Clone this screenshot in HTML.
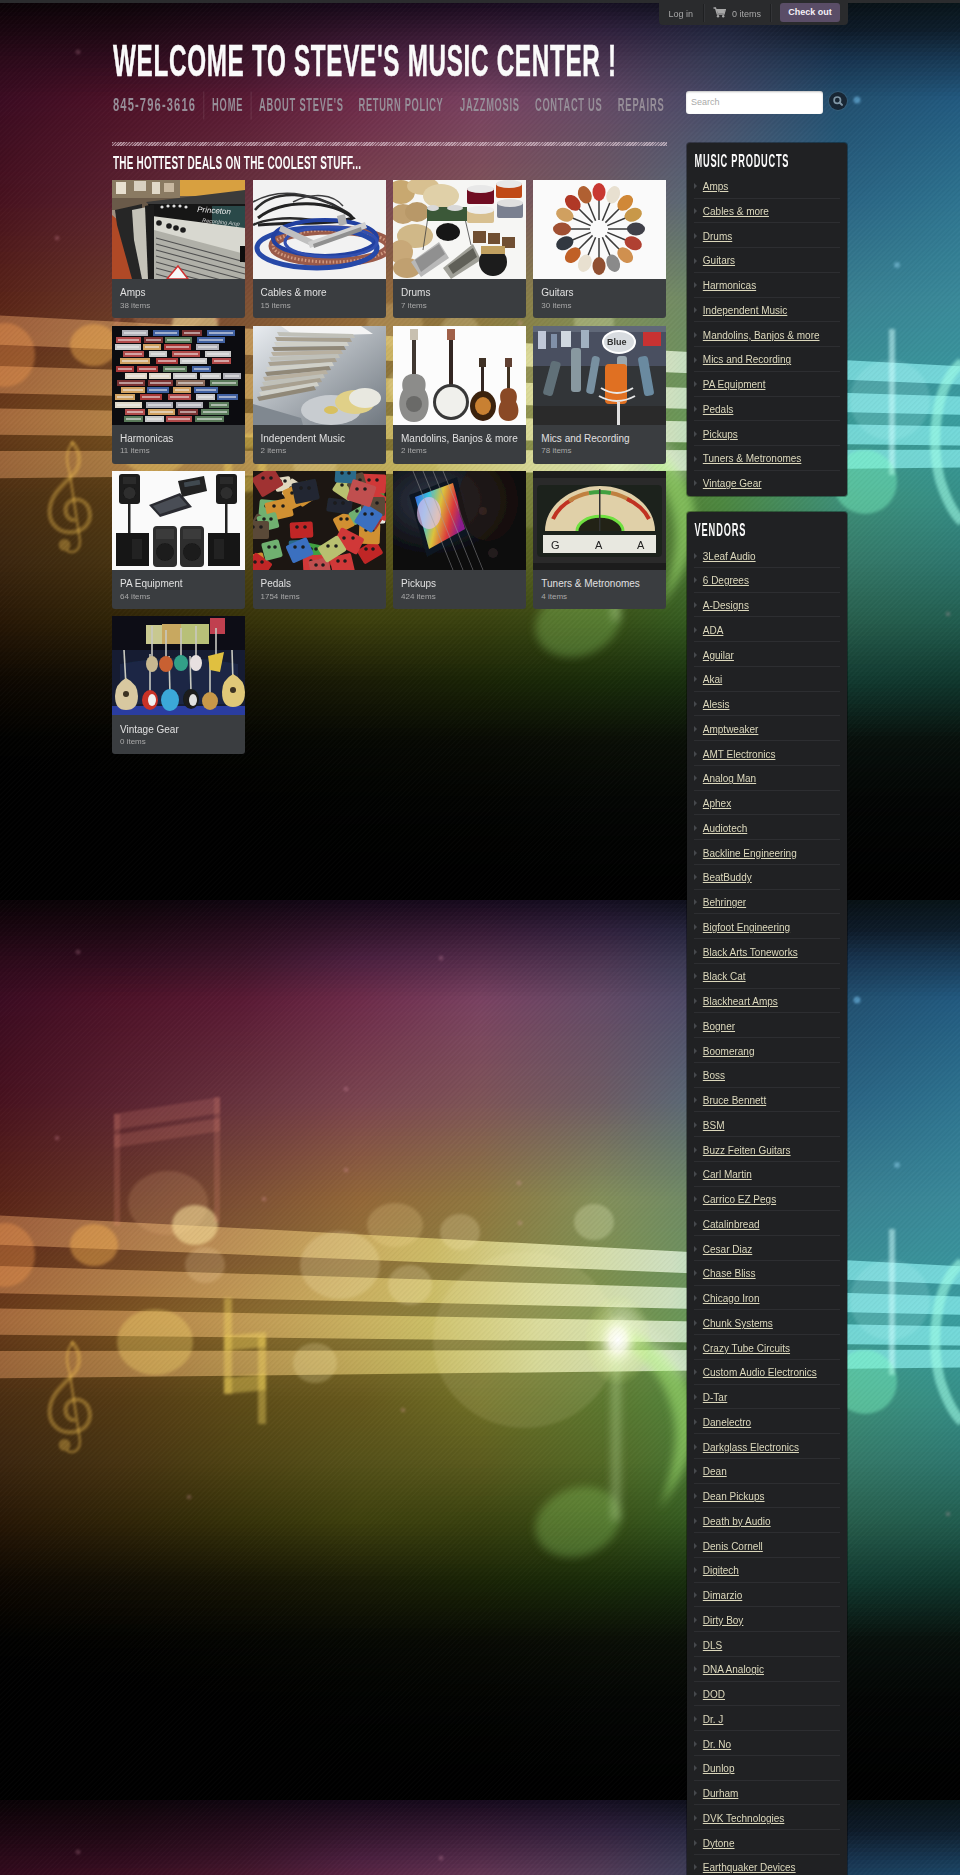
<!DOCTYPE html>
<html><head><meta charset="utf-8">
<style>
*{box-sizing:border-box}
html,body{margin:0;padding:0;background:#000;width:960px;height:1875px;overflow:hidden;font-family:"Liberation Sans",sans-serif}
#bg{position:absolute;left:0;top:0;width:960px;height:1875px}
.abs{position:absolute}
#topstrip{left:0;top:0;width:960px;height:3px;background:#2b2c2e}
#topbar{left:659px;top:0;width:189px;height:25px;background:#2a2b2d;border-radius:0 0 4px 4px;font-size:10px;color:#a8a8a8}
#topbar .t{position:absolute;top:0.6px;line-height:26px;white-space:nowrap}
.vsep{position:absolute;width:1px;background:#1f2022;box-shadow:1px 0 0 #333437}
#checkout{left:121px;top:3px;width:60px;height:19px;background:#5a4d67;border-radius:3px;color:#f4f0f6;font-weight:bold;font-size:9px;line-height:19px;text-align:center}
svg text{font-family:"Liberation Sans",sans-serif}
#search{left:686px;top:91px;width:137px;height:23px;background:#fff;border-radius:3px;font-size:9px;color:#a9a9a9;padding-left:5px;line-height:23px;box-shadow:inset 0 1px 2px rgba(0,0,0,.25)}
#sbtn{left:828.5px;top:91.5px;width:18px;height:18px;border-radius:50%;background:#182634;box-shadow:0 0 0 1px rgba(90,120,140,.3)}
#dash{left:112px;top:142.3px;width:555px;height:3.6px;background:repeating-linear-gradient(-45deg,rgba(235,215,225,.62) 0 1px,rgba(235,215,225,.2) 1px 2px)}
.tile{position:absolute;width:133px;height:138px}
.tile .img{position:absolute;left:0;top:0;width:133px;height:99px;overflow:hidden;background:#fff}
.tile .cap{position:absolute;left:0;top:99px;width:133px;height:39px;background:#3a3d40;border-radius:0 0 3px 3px}
.tile .nm{position:absolute;left:8px;top:8.3px;font-size:10px;color:#e0e0e0;white-space:nowrap;line-height:12px}
.tile .ct{position:absolute;left:8px;top:21.8px;font-size:8px;color:#a8a8a8;white-space:nowrap;line-height:10px}
.box{position:absolute;left:686.5px;width:160.5px;background:#202123;border-radius:3px;box-shadow:0 0 0 1px rgba(0,0,0,.35)}
.box ul{list-style:none;margin:0;padding:0;position:absolute;left:7.3px;top:31px;width:146.7px}
.box li{position:relative;height:24.75px;border-bottom:1px solid #2d2e31}
.box li:last-child{border-bottom:none}
.box li a{position:absolute;left:9px;top:7.4px;font-size:10px;line-height:12px;color:#dcd8bc;text-decoration:underline;text-underline-offset:1px;text-decoration-thickness:1px;white-space:nowrap}
.box li i{position:absolute;left:0.3px;top:9.5px;width:0;height:0;border-left:3px solid #46494d;border-top:3px solid transparent;border-bottom:3px solid transparent}
</style></head><body>
<svg id="bg" width="960" height="1875" viewBox="0 0 960 1875">
<defs>
<filter id="isoft" x="-5%" y="-5%" width="110%" height="110%"><feGaussianBlur stdDeviation="0.45"/></filter>
<linearGradient id="topfade" x1="0" y1="0" x2="0" y2="1"><stop offset="0" stop-color="#000" stop-opacity="0.5"/><stop offset="1" stop-color="#000" stop-opacity="0"/></linearGradient>
<g id="tile"><linearGradient id="r0" x1="0" x2="960" y1="0" y2="0" gradientUnits="userSpaceOnUse"><stop offset="0.000" stop-color="#0b0307"/><stop offset="0.125" stop-color="#0d0409"/><stop offset="0.250" stop-color="#110611"/><stop offset="0.375" stop-color="#160919"/><stop offset="0.500" stop-color="#180b1e"/><stop offset="0.625" stop-color="#160f22"/><stop offset="0.750" stop-color="#0d111b"/><stop offset="0.875" stop-color="#081115"/><stop offset="1.000" stop-color="#081519"/></linearGradient><linearGradient id="r1" x1="0" x2="960" y1="0" y2="0" gradientUnits="userSpaceOnUse"><stop offset="0.000" stop-color="#0d0408"/><stop offset="0.125" stop-color="#0f050a"/><stop offset="0.250" stop-color="#140712"/><stop offset="0.375" stop-color="#1a0a1c"/><stop offset="0.500" stop-color="#1c0d21"/><stop offset="0.625" stop-color="#1a1226"/><stop offset="0.750" stop-color="#101420"/><stop offset="0.875" stop-color="#091218"/><stop offset="1.000" stop-color="#09161c"/></linearGradient><linearGradient id="r2" x1="0" x2="960" y1="0" y2="0" gradientUnits="userSpaceOnUse"><stop offset="0.000" stop-color="#0f0409"/><stop offset="0.125" stop-color="#11050b"/><stop offset="0.250" stop-color="#170814"/><stop offset="0.375" stop-color="#1d0c1e"/><stop offset="0.500" stop-color="#210f24"/><stop offset="0.625" stop-color="#1d1429"/><stop offset="0.750" stop-color="#131725"/><stop offset="0.875" stop-color="#0a131b"/><stop offset="1.000" stop-color="#0a171f"/></linearGradient><linearGradient id="r3" x1="0" x2="960" y1="0" y2="0" gradientUnits="userSpaceOnUse"><stop offset="0.000" stop-color="#11040b"/><stop offset="0.125" stop-color="#13060d"/><stop offset="0.250" stop-color="#1a0916"/><stop offset="0.375" stop-color="#210e20"/><stop offset="0.500" stop-color="#251127"/><stop offset="0.625" stop-color="#21162d"/><stop offset="0.750" stop-color="#161a2a"/><stop offset="0.875" stop-color="#0b151d"/><stop offset="1.000" stop-color="#0b1921"/></linearGradient><linearGradient id="r4" x1="0" x2="960" y1="0" y2="0" gradientUnits="userSpaceOnUse"><stop offset="0.000" stop-color="#14050c"/><stop offset="0.125" stop-color="#16060e"/><stop offset="0.250" stop-color="#1d0a17"/><stop offset="0.375" stop-color="#250f23"/><stop offset="0.500" stop-color="#29142a"/><stop offset="0.625" stop-color="#251931"/><stop offset="0.750" stop-color="#191d2f"/><stop offset="0.875" stop-color="#0c1620"/><stop offset="1.000" stop-color="#0c1a24"/></linearGradient><linearGradient id="r5" x1="0" x2="960" y1="0" y2="0" gradientUnits="userSpaceOnUse"><stop offset="0.000" stop-color="#16050d"/><stop offset="0.125" stop-color="#18070f"/><stop offset="0.250" stop-color="#200a19"/><stop offset="0.375" stop-color="#291125"/><stop offset="0.500" stop-color="#2d162e"/><stop offset="0.625" stop-color="#291b35"/><stop offset="0.750" stop-color="#1c2034"/><stop offset="0.875" stop-color="#0c1723"/><stop offset="1.000" stop-color="#0c1b27"/></linearGradient><linearGradient id="r6" x1="0" x2="960" y1="0" y2="0" gradientUnits="userSpaceOnUse"><stop offset="0.000" stop-color="#18060f"/><stop offset="0.125" stop-color="#1a0711"/><stop offset="0.250" stop-color="#230b1a"/><stop offset="0.375" stop-color="#2c1228"/><stop offset="0.500" stop-color="#321831"/><stop offset="0.625" stop-color="#2c1e38"/><stop offset="0.750" stop-color="#1f2339"/><stop offset="0.875" stop-color="#0d1925"/><stop offset="1.000" stop-color="#0d1d29"/></linearGradient><linearGradient id="r7" x1="0" x2="960" y1="0" y2="0" gradientUnits="userSpaceOnUse"><stop offset="0.000" stop-color="#1a0610"/><stop offset="0.125" stop-color="#1c0812"/><stop offset="0.250" stop-color="#260c1c"/><stop offset="0.375" stop-color="#30142a"/><stop offset="0.500" stop-color="#361a34"/><stop offset="0.625" stop-color="#30203c"/><stop offset="0.750" stop-color="#22263e"/><stop offset="0.875" stop-color="#0e1a28"/><stop offset="1.000" stop-color="#0e1e2c"/></linearGradient><linearGradient id="r8" x1="0" x2="960" y1="0" y2="0" gradientUnits="userSpaceOnUse"><stop offset="0.000" stop-color="#1c0711"/><stop offset="0.125" stop-color="#1f0914"/><stop offset="0.250" stop-color="#290d1e"/><stop offset="0.375" stop-color="#34162d"/><stop offset="0.500" stop-color="#3a1c37"/><stop offset="0.625" stop-color="#33233f"/><stop offset="0.750" stop-color="#242941"/><stop offset="0.875" stop-color="#0f1d2d"/><stop offset="1.000" stop-color="#0f2232"/></linearGradient><linearGradient id="r9" x1="0" x2="960" y1="0" y2="0" gradientUnits="userSpaceOnUse"><stop offset="0.000" stop-color="#1f0713"/><stop offset="0.125" stop-color="#210915"/><stop offset="0.250" stop-color="#2b0e1f"/><stop offset="0.375" stop-color="#371730"/><stop offset="0.500" stop-color="#3e1f3a"/><stop offset="0.625" stop-color="#372541"/><stop offset="0.750" stop-color="#272b44"/><stop offset="0.875" stop-color="#112133"/><stop offset="1.000" stop-color="#112537"/></linearGradient><linearGradient id="r10" x1="0" x2="960" y1="0" y2="0" gradientUnits="userSpaceOnUse"><stop offset="0.000" stop-color="#210814"/><stop offset="0.125" stop-color="#240a17"/><stop offset="0.250" stop-color="#2e0f21"/><stop offset="0.375" stop-color="#3b1933"/><stop offset="0.500" stop-color="#42213d"/><stop offset="0.625" stop-color="#3a2844"/><stop offset="0.750" stop-color="#292e47"/><stop offset="0.875" stop-color="#122438"/><stop offset="1.000" stop-color="#12293d"/></linearGradient><linearGradient id="r11" x1="0" x2="960" y1="0" y2="0" gradientUnits="userSpaceOnUse"><stop offset="0.000" stop-color="#240815"/><stop offset="0.125" stop-color="#270a18"/><stop offset="0.250" stop-color="#311022"/><stop offset="0.375" stop-color="#3f1a36"/><stop offset="0.500" stop-color="#462440"/><stop offset="0.625" stop-color="#3e2b47"/><stop offset="0.750" stop-color="#2c314a"/><stop offset="0.875" stop-color="#13283d"/><stop offset="1.000" stop-color="#132d42"/></linearGradient><linearGradient id="r12" x1="0" x2="960" y1="0" y2="0" gradientUnits="userSpaceOnUse"><stop offset="0.000" stop-color="#260917"/><stop offset="0.125" stop-color="#290b1a"/><stop offset="0.250" stop-color="#331124"/><stop offset="0.375" stop-color="#431c39"/><stop offset="0.500" stop-color="#4a2643"/><stop offset="0.625" stop-color="#412d49"/><stop offset="0.750" stop-color="#2e334d"/><stop offset="0.875" stop-color="#152b43"/><stop offset="1.000" stop-color="#153148"/></linearGradient><linearGradient id="r13" x1="0" x2="960" y1="0" y2="0" gradientUnits="userSpaceOnUse"><stop offset="0.000" stop-color="#280918"/><stop offset="0.125" stop-color="#2c0b1c"/><stop offset="0.250" stop-color="#361226"/><stop offset="0.375" stop-color="#461e3c"/><stop offset="0.500" stop-color="#4e2846"/><stop offset="0.625" stop-color="#45304c"/><stop offset="0.750" stop-color="#303650"/><stop offset="0.875" stop-color="#162f48"/><stop offset="1.000" stop-color="#16344e"/></linearGradient><linearGradient id="r14" x1="0" x2="960" y1="0" y2="0" gradientUnits="userSpaceOnUse"><stop offset="0.000" stop-color="#2b0a19"/><stop offset="0.125" stop-color="#2f0c1d"/><stop offset="0.250" stop-color="#391327"/><stop offset="0.375" stop-color="#4a1f3f"/><stop offset="0.500" stop-color="#522b49"/><stop offset="0.625" stop-color="#48334f"/><stop offset="0.750" stop-color="#333953"/><stop offset="0.875" stop-color="#17324d"/><stop offset="1.000" stop-color="#173853"/></linearGradient><linearGradient id="r15" x1="0" x2="960" y1="0" y2="0" gradientUnits="userSpaceOnUse"><stop offset="0.000" stop-color="#2d0a1a"/><stop offset="0.125" stop-color="#310c1e"/><stop offset="0.250" stop-color="#3c1429"/><stop offset="0.375" stop-color="#4e2140"/><stop offset="0.500" stop-color="#562d4b"/><stop offset="0.625" stop-color="#4b3551"/><stop offset="0.750" stop-color="#353b55"/><stop offset="0.875" stop-color="#183552"/><stop offset="1.000" stop-color="#183c58"/></linearGradient><linearGradient id="r16" x1="0" x2="960" y1="0" y2="0" gradientUnits="userSpaceOnUse"><stop offset="0.000" stop-color="#2e0a1b"/><stop offset="0.125" stop-color="#340d20"/><stop offset="0.250" stop-color="#3f152a"/><stop offset="0.375" stop-color="#512242"/><stop offset="0.500" stop-color="#5a2f4e"/><stop offset="0.625" stop-color="#4e3753"/><stop offset="0.750" stop-color="#373c57"/><stop offset="0.875" stop-color="#1a3855"/><stop offset="1.000" stop-color="#1a3f5c"/></linearGradient><linearGradient id="r17" x1="0" x2="960" y1="0" y2="0" gradientUnits="userSpaceOnUse"><stop offset="0.000" stop-color="#300a1c"/><stop offset="0.125" stop-color="#380e20"/><stop offset="0.250" stop-color="#42162b"/><stop offset="0.375" stop-color="#542342"/><stop offset="0.500" stop-color="#5e3250"/><stop offset="0.625" stop-color="#503a56"/><stop offset="0.750" stop-color="#383e59"/><stop offset="0.875" stop-color="#1a3b58"/><stop offset="1.000" stop-color="#1a4260"/></linearGradient><linearGradient id="r18" x1="0" x2="960" y1="0" y2="0" gradientUnits="userSpaceOnUse"><stop offset="0.000" stop-color="#320b1d"/><stop offset="0.125" stop-color="#3a0e22"/><stop offset="0.250" stop-color="#45162c"/><stop offset="0.375" stop-color="#582444"/><stop offset="0.500" stop-color="#613452"/><stop offset="0.625" stop-color="#533c58"/><stop offset="0.750" stop-color="#3a405b"/><stop offset="0.875" stop-color="#1c3e5b"/><stop offset="1.000" stop-color="#1c4565"/></linearGradient><linearGradient id="r19" x1="0" x2="960" y1="0" y2="0" gradientUnits="userSpaceOnUse"><stop offset="0.000" stop-color="#330b1e"/><stop offset="0.125" stop-color="#3e0f22"/><stop offset="0.250" stop-color="#48172d"/><stop offset="0.375" stop-color="#5b2544"/><stop offset="0.500" stop-color="#653655"/><stop offset="0.625" stop-color="#563e5a"/><stop offset="0.750" stop-color="#3c415d"/><stop offset="0.875" stop-color="#1c415e"/><stop offset="1.000" stop-color="#1c4869"/></linearGradient><linearGradient id="r20" x1="0" x2="960" y1="0" y2="0" gradientUnits="userSpaceOnUse"><stop offset="0.000" stop-color="#350b1e"/><stop offset="0.125" stop-color="#400f24"/><stop offset="0.250" stop-color="#4c172f"/><stop offset="0.375" stop-color="#5f2746"/><stop offset="0.500" stop-color="#693857"/><stop offset="0.625" stop-color="#58405c"/><stop offset="0.750" stop-color="#3e435f"/><stop offset="0.875" stop-color="#1e4362"/><stop offset="1.000" stop-color="#1e4c6d"/></linearGradient><linearGradient id="r21" x1="0" x2="960" y1="0" y2="0" gradientUnits="userSpaceOnUse"><stop offset="0.000" stop-color="#360b1f"/><stop offset="0.125" stop-color="#441024"/><stop offset="0.250" stop-color="#4f1830"/><stop offset="0.375" stop-color="#622846"/><stop offset="0.500" stop-color="#6d3a5a"/><stop offset="0.625" stop-color="#5b425e"/><stop offset="0.750" stop-color="#404461"/><stop offset="0.875" stop-color="#1e4665"/><stop offset="1.000" stop-color="#1e4f71"/></linearGradient><linearGradient id="r22" x1="0" x2="960" y1="0" y2="0" gradientUnits="userSpaceOnUse"><stop offset="0.000" stop-color="#380c20"/><stop offset="0.125" stop-color="#461026"/><stop offset="0.250" stop-color="#521831"/><stop offset="0.375" stop-color="#662948"/><stop offset="0.500" stop-color="#703c5c"/><stop offset="0.625" stop-color="#5e4460"/><stop offset="0.750" stop-color="#424663"/><stop offset="0.875" stop-color="#204968"/><stop offset="1.000" stop-color="#205276"/></linearGradient><linearGradient id="r23" x1="0" x2="960" y1="0" y2="0" gradientUnits="userSpaceOnUse"><stop offset="0.000" stop-color="#3a0c21"/><stop offset="0.125" stop-color="#4a1126"/><stop offset="0.250" stop-color="#551932"/><stop offset="0.375" stop-color="#692a48"/><stop offset="0.500" stop-color="#743f5e"/><stop offset="0.625" stop-color="#604763"/><stop offset="0.750" stop-color="#434865"/><stop offset="0.875" stop-color="#204c6b"/><stop offset="1.000" stop-color="#20557a"/></linearGradient><linearGradient id="r24" x1="0" x2="960" y1="0" y2="0" gradientUnits="userSpaceOnUse"><stop offset="0.000" stop-color="#3b0c22"/><stop offset="0.125" stop-color="#4c1228"/><stop offset="0.250" stop-color="#581a33"/><stop offset="0.375" stop-color="#6c2b4a"/><stop offset="0.500" stop-color="#784161"/><stop offset="0.625" stop-color="#634965"/><stop offset="0.750" stop-color="#454967"/><stop offset="0.875" stop-color="#224f6e"/><stop offset="1.000" stop-color="#22587e"/></linearGradient><linearGradient id="r25" x1="0" x2="960" y1="0" y2="0" gradientUnits="userSpaceOnUse"><stop offset="0.000" stop-color="#3c0c22"/><stop offset="0.125" stop-color="#4e1228"/><stop offset="0.250" stop-color="#5a1a34"/><stop offset="0.375" stop-color="#6e2c4a"/><stop offset="0.500" stop-color="#7a4262"/><stop offset="0.625" stop-color="#644a66"/><stop offset="0.750" stop-color="#464b68"/><stop offset="0.875" stop-color="#225070"/><stop offset="1.000" stop-color="#225b80"/></linearGradient><linearGradient id="r26" x1="0" x2="960" y1="0" y2="0" gradientUnits="userSpaceOnUse"><stop offset="0.000" stop-color="#3d0c22"/><stop offset="0.125" stop-color="#4f1328"/><stop offset="0.250" stop-color="#5b1b35"/><stop offset="0.375" stop-color="#6f2d4a"/><stop offset="0.500" stop-color="#7a4361"/><stop offset="0.625" stop-color="#654b66"/><stop offset="0.750" stop-color="#474c69"/><stop offset="0.875" stop-color="#225171"/><stop offset="1.000" stop-color="#235c81"/></linearGradient><linearGradient id="r27" x1="0" x2="960" y1="0" y2="0" gradientUnits="userSpaceOnUse"><stop offset="0.000" stop-color="#3d0d22"/><stop offset="0.125" stop-color="#4f1429"/><stop offset="0.250" stop-color="#5b1c35"/><stop offset="0.375" stop-color="#6f2e4b"/><stop offset="0.500" stop-color="#7a4461"/><stop offset="0.625" stop-color="#654c66"/><stop offset="0.750" stop-color="#474d6a"/><stop offset="0.875" stop-color="#235272"/><stop offset="1.000" stop-color="#235d82"/></linearGradient><linearGradient id="r28" x1="0" x2="960" y1="0" y2="0" gradientUnits="userSpaceOnUse"><stop offset="0.000" stop-color="#3e0d22"/><stop offset="0.125" stop-color="#501429"/><stop offset="0.250" stop-color="#5c1d35"/><stop offset="0.375" stop-color="#702f4b"/><stop offset="0.500" stop-color="#7b4561"/><stop offset="0.625" stop-color="#654d66"/><stop offset="0.750" stop-color="#484f6b"/><stop offset="0.875" stop-color="#235373"/><stop offset="1.000" stop-color="#245e82"/></linearGradient><linearGradient id="r29" x1="0" x2="960" y1="0" y2="0" gradientUnits="userSpaceOnUse"><stop offset="0.000" stop-color="#3e0d21"/><stop offset="0.125" stop-color="#501529"/><stop offset="0.250" stop-color="#5d1e36"/><stop offset="0.375" stop-color="#70304b"/><stop offset="0.500" stop-color="#7b4560"/><stop offset="0.625" stop-color="#664d66"/><stop offset="0.750" stop-color="#49506c"/><stop offset="0.875" stop-color="#235474"/><stop offset="1.000" stop-color="#245f83"/></linearGradient><linearGradient id="r30" x1="0" x2="960" y1="0" y2="0" gradientUnits="userSpaceOnUse"><stop offset="0.000" stop-color="#3f0d21"/><stop offset="0.125" stop-color="#51162a"/><stop offset="0.250" stop-color="#5d1f36"/><stop offset="0.375" stop-color="#71314b"/><stop offset="0.500" stop-color="#7b4660"/><stop offset="0.625" stop-color="#664e66"/><stop offset="0.750" stop-color="#49516c"/><stop offset="0.875" stop-color="#245474"/><stop offset="1.000" stop-color="#256084"/></linearGradient><linearGradient id="r31" x1="0" x2="960" y1="0" y2="0" gradientUnits="userSpaceOnUse"><stop offset="0.000" stop-color="#3f0e21"/><stop offset="0.125" stop-color="#51162a"/><stop offset="0.250" stop-color="#5e2037"/><stop offset="0.375" stop-color="#71324c"/><stop offset="0.500" stop-color="#7b475f"/><stop offset="0.625" stop-color="#674f65"/><stop offset="0.750" stop-color="#4a536d"/><stop offset="0.875" stop-color="#245575"/><stop offset="1.000" stop-color="#256184"/></linearGradient><linearGradient id="r32" x1="0" x2="960" y1="0" y2="0" gradientUnits="userSpaceOnUse"><stop offset="0.000" stop-color="#400e21"/><stop offset="0.125" stop-color="#52172a"/><stop offset="0.250" stop-color="#5e2137"/><stop offset="0.375" stop-color="#72334c"/><stop offset="0.500" stop-color="#7b475f"/><stop offset="0.625" stop-color="#674f65"/><stop offset="0.750" stop-color="#4a546e"/><stop offset="0.875" stop-color="#245676"/><stop offset="1.000" stop-color="#266285"/></linearGradient><linearGradient id="r33" x1="0" x2="960" y1="0" y2="0" gradientUnits="userSpaceOnUse"><stop offset="0.000" stop-color="#400e21"/><stop offset="0.125" stop-color="#52172b"/><stop offset="0.250" stop-color="#5f2237"/><stop offset="0.375" stop-color="#72344c"/><stop offset="0.500" stop-color="#7b485f"/><stop offset="0.625" stop-color="#675065"/><stop offset="0.750" stop-color="#4b566f"/><stop offset="0.875" stop-color="#255777"/><stop offset="1.000" stop-color="#266385"/></linearGradient><linearGradient id="r34" x1="0" x2="960" y1="0" y2="0" gradientUnits="userSpaceOnUse"><stop offset="0.000" stop-color="#410e21"/><stop offset="0.125" stop-color="#53182b"/><stop offset="0.250" stop-color="#5f2338"/><stop offset="0.375" stop-color="#73354c"/><stop offset="0.500" stop-color="#7c495e"/><stop offset="0.625" stop-color="#685165"/><stop offset="0.750" stop-color="#4b5770"/><stop offset="0.875" stop-color="#255878"/><stop offset="1.000" stop-color="#276486"/></linearGradient><linearGradient id="r35" x1="0" x2="960" y1="0" y2="0" gradientUnits="userSpaceOnUse"><stop offset="0.000" stop-color="#410f21"/><stop offset="0.125" stop-color="#53192b"/><stop offset="0.250" stop-color="#602438"/><stop offset="0.375" stop-color="#73364d"/><stop offset="0.500" stop-color="#7c4a5e"/><stop offset="0.625" stop-color="#685265"/><stop offset="0.750" stop-color="#4c5870"/><stop offset="0.875" stop-color="#255878"/><stop offset="1.000" stop-color="#276587"/></linearGradient><linearGradient id="r36" x1="0" x2="960" y1="0" y2="0" gradientUnits="userSpaceOnUse"><stop offset="0.000" stop-color="#420f21"/><stop offset="0.125" stop-color="#54192c"/><stop offset="0.250" stop-color="#602539"/><stop offset="0.375" stop-color="#74374d"/><stop offset="0.500" stop-color="#7c4a5d"/><stop offset="0.625" stop-color="#695265"/><stop offset="0.750" stop-color="#4c5a71"/><stop offset="0.875" stop-color="#265979"/><stop offset="1.000" stop-color="#286687"/></linearGradient><linearGradient id="r37" x1="0" x2="960" y1="0" y2="0" gradientUnits="userSpaceOnUse"><stop offset="0.000" stop-color="#420f20"/><stop offset="0.125" stop-color="#541a2c"/><stop offset="0.250" stop-color="#612639"/><stop offset="0.375" stop-color="#74384d"/><stop offset="0.500" stop-color="#7c4b5d"/><stop offset="0.625" stop-color="#695365"/><stop offset="0.750" stop-color="#4d5b72"/><stop offset="0.875" stop-color="#265a7a"/><stop offset="1.000" stop-color="#286788"/></linearGradient><linearGradient id="r38" x1="0" x2="960" y1="0" y2="0" gradientUnits="userSpaceOnUse"><stop offset="0.000" stop-color="#420f20"/><stop offset="0.125" stop-color="#541b2c"/><stop offset="0.250" stop-color="#622739"/><stop offset="0.375" stop-color="#74394d"/><stop offset="0.500" stop-color="#7c4c5d"/><stop offset="0.625" stop-color="#695465"/><stop offset="0.750" stop-color="#4e5c73"/><stop offset="0.875" stop-color="#265b7b"/><stop offset="1.000" stop-color="#286889"/></linearGradient><linearGradient id="r39" x1="0" x2="960" y1="0" y2="0" gradientUnits="userSpaceOnUse"><stop offset="0.000" stop-color="#430f20"/><stop offset="0.125" stop-color="#551b2d"/><stop offset="0.250" stop-color="#62283a"/><stop offset="0.375" stop-color="#753a4d"/><stop offset="0.500" stop-color="#7c4c5c"/><stop offset="0.625" stop-color="#6a5465"/><stop offset="0.750" stop-color="#4e5e74"/><stop offset="0.875" stop-color="#275c7c"/><stop offset="1.000" stop-color="#296989"/></linearGradient><linearGradient id="r40" x1="0" x2="960" y1="0" y2="0" gradientUnits="userSpaceOnUse"><stop offset="0.000" stop-color="#431020"/><stop offset="0.125" stop-color="#551c2d"/><stop offset="0.250" stop-color="#63293a"/><stop offset="0.375" stop-color="#753b4e"/><stop offset="0.500" stop-color="#7c4d5c"/><stop offset="0.625" stop-color="#6a5565"/><stop offset="0.750" stop-color="#4f5f74"/><stop offset="0.875" stop-color="#275c7c"/><stop offset="1.000" stop-color="#296a8a"/></linearGradient><linearGradient id="r41" x1="0" x2="960" y1="0" y2="0" gradientUnits="userSpaceOnUse"><stop offset="0.000" stop-color="#441020"/><stop offset="0.125" stop-color="#561d2d"/><stop offset="0.250" stop-color="#632a3b"/><stop offset="0.375" stop-color="#763c4e"/><stop offset="0.500" stop-color="#7d4e5b"/><stop offset="0.625" stop-color="#6b5665"/><stop offset="0.750" stop-color="#4f6075"/><stop offset="0.875" stop-color="#275d7d"/><stop offset="1.000" stop-color="#2a6b8b"/></linearGradient><linearGradient id="r42" x1="0" x2="960" y1="0" y2="0" gradientUnits="userSpaceOnUse"><stop offset="0.000" stop-color="#441020"/><stop offset="0.125" stop-color="#561d2e"/><stop offset="0.250" stop-color="#642b3b"/><stop offset="0.375" stop-color="#763d4e"/><stop offset="0.500" stop-color="#7d4f5b"/><stop offset="0.625" stop-color="#6b5765"/><stop offset="0.750" stop-color="#506276"/><stop offset="0.875" stop-color="#285e7e"/><stop offset="1.000" stop-color="#2a6c8b"/></linearGradient><linearGradient id="r43" x1="0" x2="960" y1="0" y2="0" gradientUnits="userSpaceOnUse"><stop offset="0.000" stop-color="#451020"/><stop offset="0.125" stop-color="#571e2e"/><stop offset="0.250" stop-color="#642c3b"/><stop offset="0.375" stop-color="#773e4e"/><stop offset="0.500" stop-color="#7d4f5b"/><stop offset="0.625" stop-color="#6b5765"/><stop offset="0.750" stop-color="#506377"/><stop offset="0.875" stop-color="#285f7f"/><stop offset="1.000" stop-color="#2b6d8c"/></linearGradient><linearGradient id="r44" x1="0" x2="960" y1="0" y2="0" gradientUnits="userSpaceOnUse"><stop offset="0.000" stop-color="#451120"/><stop offset="0.125" stop-color="#571e2e"/><stop offset="0.250" stop-color="#652d3c"/><stop offset="0.375" stop-color="#773f4f"/><stop offset="0.500" stop-color="#7d505a"/><stop offset="0.625" stop-color="#6c5864"/><stop offset="0.750" stop-color="#516578"/><stop offset="0.875" stop-color="#286080"/><stop offset="1.000" stop-color="#2b6e8c"/></linearGradient><linearGradient id="r45" x1="0" x2="960" y1="0" y2="0" gradientUnits="userSpaceOnUse"><stop offset="0.000" stop-color="#461120"/><stop offset="0.125" stop-color="#581f2f"/><stop offset="0.250" stop-color="#652e3c"/><stop offset="0.375" stop-color="#78404f"/><stop offset="0.500" stop-color="#7d515a"/><stop offset="0.625" stop-color="#6c5964"/><stop offset="0.750" stop-color="#516678"/><stop offset="0.875" stop-color="#296080"/><stop offset="1.000" stop-color="#2c6f8d"/></linearGradient><linearGradient id="r46" x1="0" x2="960" y1="0" y2="0" gradientUnits="userSpaceOnUse"><stop offset="0.000" stop-color="#46111f"/><stop offset="0.125" stop-color="#58202f"/><stop offset="0.250" stop-color="#662f3d"/><stop offset="0.375" stop-color="#78414f"/><stop offset="0.500" stop-color="#7d5159"/><stop offset="0.625" stop-color="#6d5964"/><stop offset="0.750" stop-color="#526779"/><stop offset="0.875" stop-color="#296181"/><stop offset="1.000" stop-color="#2c708e"/></linearGradient><linearGradient id="r47" x1="0" x2="960" y1="0" y2="0" gradientUnits="userSpaceOnUse"><stop offset="0.000" stop-color="#47111f"/><stop offset="0.125" stop-color="#59202f"/><stop offset="0.250" stop-color="#67303d"/><stop offset="0.375" stop-color="#79424f"/><stop offset="0.500" stop-color="#7e5259"/><stop offset="0.625" stop-color="#6d5a64"/><stop offset="0.750" stop-color="#53697a"/><stop offset="0.875" stop-color="#296282"/><stop offset="1.000" stop-color="#2d718e"/></linearGradient><linearGradient id="r48" x1="0" x2="960" y1="0" y2="0" gradientUnits="userSpaceOnUse"><stop offset="0.000" stop-color="#47121f"/><stop offset="0.125" stop-color="#592130"/><stop offset="0.250" stop-color="#67313d"/><stop offset="0.375" stop-color="#794350"/><stop offset="0.500" stop-color="#7e5359"/><stop offset="0.625" stop-color="#6d5b64"/><stop offset="0.750" stop-color="#536a7b"/><stop offset="0.875" stop-color="#2a6383"/><stop offset="1.000" stop-color="#2d728f"/></linearGradient><linearGradient id="r49" x1="0" x2="960" y1="0" y2="0" gradientUnits="userSpaceOnUse"><stop offset="0.000" stop-color="#48121f"/><stop offset="0.125" stop-color="#5a2230"/><stop offset="0.250" stop-color="#68323e"/><stop offset="0.375" stop-color="#7a4450"/><stop offset="0.500" stop-color="#7e5458"/><stop offset="0.625" stop-color="#6e5c64"/><stop offset="0.750" stop-color="#546b7c"/><stop offset="0.875" stop-color="#2a6484"/><stop offset="1.000" stop-color="#2e7390"/></linearGradient><linearGradient id="r50" x1="0" x2="960" y1="0" y2="0" gradientUnits="userSpaceOnUse"><stop offset="0.000" stop-color="#48121f"/><stop offset="0.125" stop-color="#5a2230"/><stop offset="0.250" stop-color="#68333e"/><stop offset="0.375" stop-color="#7b4550"/><stop offset="0.500" stop-color="#7e5558"/><stop offset="0.625" stop-color="#6e5d64"/><stop offset="0.750" stop-color="#546d7c"/><stop offset="0.875" stop-color="#2a6584"/><stop offset="1.000" stop-color="#2e7490"/></linearGradient><linearGradient id="r51" x1="0" x2="960" y1="0" y2="0" gradientUnits="userSpaceOnUse"><stop offset="0.000" stop-color="#49131f"/><stop offset="0.125" stop-color="#5b2330"/><stop offset="0.250" stop-color="#69343d"/><stop offset="0.375" stop-color="#7c464f"/><stop offset="0.500" stop-color="#7f5657"/><stop offset="0.625" stop-color="#6f5f63"/><stop offset="0.750" stop-color="#556e7b"/><stop offset="0.875" stop-color="#2b6685"/><stop offset="1.000" stop-color="#2f7591"/></linearGradient><linearGradient id="r52" x1="0" x2="960" y1="0" y2="0" gradientUnits="userSpaceOnUse"><stop offset="0.000" stop-color="#4a141e"/><stop offset="0.125" stop-color="#5c242f"/><stop offset="0.250" stop-color="#6a353d"/><stop offset="0.375" stop-color="#7d484e"/><stop offset="0.500" stop-color="#805856"/><stop offset="0.625" stop-color="#706163"/><stop offset="0.750" stop-color="#566f7a"/><stop offset="0.875" stop-color="#2c6785"/><stop offset="1.000" stop-color="#2f7691"/></linearGradient><linearGradient id="r53" x1="0" x2="960" y1="0" y2="0" gradientUnits="userSpaceOnUse"><stop offset="0.000" stop-color="#4b151e"/><stop offset="0.125" stop-color="#5c252f"/><stop offset="0.250" stop-color="#6b363d"/><stop offset="0.375" stop-color="#7e494d"/><stop offset="0.500" stop-color="#815955"/><stop offset="0.625" stop-color="#716363"/><stop offset="0.750" stop-color="#577079"/><stop offset="0.875" stop-color="#2c6886"/><stop offset="1.000" stop-color="#307791"/></linearGradient><linearGradient id="r54" x1="0" x2="960" y1="0" y2="0" gradientUnits="userSpaceOnUse"><stop offset="0.000" stop-color="#4b151e"/><stop offset="0.125" stop-color="#5d262f"/><stop offset="0.250" stop-color="#6c373c"/><stop offset="0.375" stop-color="#7f4a4c"/><stop offset="0.500" stop-color="#815a54"/><stop offset="0.625" stop-color="#726562"/><stop offset="0.750" stop-color="#587179"/><stop offset="0.875" stop-color="#2d6987"/><stop offset="1.000" stop-color="#307892"/></linearGradient><linearGradient id="r55" x1="0" x2="960" y1="0" y2="0" gradientUnits="userSpaceOnUse"><stop offset="0.000" stop-color="#4c161d"/><stop offset="0.125" stop-color="#5e272e"/><stop offset="0.250" stop-color="#6d393c"/><stop offset="0.375" stop-color="#804c4b"/><stop offset="0.500" stop-color="#825c53"/><stop offset="0.625" stop-color="#736762"/><stop offset="0.750" stop-color="#597378"/><stop offset="0.875" stop-color="#2e6b87"/><stop offset="1.000" stop-color="#317992"/></linearGradient><linearGradient id="r56" x1="0" x2="960" y1="0" y2="0" gradientUnits="userSpaceOnUse"><stop offset="0.000" stop-color="#4d171d"/><stop offset="0.125" stop-color="#5e282e"/><stop offset="0.250" stop-color="#6e3a3b"/><stop offset="0.375" stop-color="#814d4a"/><stop offset="0.500" stop-color="#835d52"/><stop offset="0.625" stop-color="#746a61"/><stop offset="0.750" stop-color="#5a7477"/><stop offset="0.875" stop-color="#2e6c88"/><stop offset="1.000" stop-color="#317a93"/></linearGradient><linearGradient id="r57" x1="0" x2="960" y1="0" y2="0" gradientUnits="userSpaceOnUse"><stop offset="0.000" stop-color="#4d171d"/><stop offset="0.125" stop-color="#5f292e"/><stop offset="0.250" stop-color="#6f3b3b"/><stop offset="0.375" stop-color="#824f49"/><stop offset="0.500" stop-color="#835f51"/><stop offset="0.625" stop-color="#756c61"/><stop offset="0.750" stop-color="#5b7577"/><stop offset="0.875" stop-color="#2f6d88"/><stop offset="1.000" stop-color="#327b93"/></linearGradient><linearGradient id="r58" x1="0" x2="960" y1="0" y2="0" gradientUnits="userSpaceOnUse"><stop offset="0.000" stop-color="#4e181d"/><stop offset="0.125" stop-color="#5f292d"/><stop offset="0.250" stop-color="#6f3c3b"/><stop offset="0.375" stop-color="#835048"/><stop offset="0.500" stop-color="#846050"/><stop offset="0.625" stop-color="#756e61"/><stop offset="0.750" stop-color="#5b7676"/><stop offset="0.875" stop-color="#2f6e89"/><stop offset="1.000" stop-color="#327b93"/></linearGradient><linearGradient id="r59" x1="0" x2="960" y1="0" y2="0" gradientUnits="userSpaceOnUse"><stop offset="0.000" stop-color="#4f191c"/><stop offset="0.125" stop-color="#602a2d"/><stop offset="0.250" stop-color="#703d3a"/><stop offset="0.375" stop-color="#845247"/><stop offset="0.500" stop-color="#85624f"/><stop offset="0.625" stop-color="#767060"/><stop offset="0.750" stop-color="#5c7775"/><stop offset="0.875" stop-color="#306f89"/><stop offset="1.000" stop-color="#337c94"/></linearGradient><linearGradient id="r60" x1="0" x2="960" y1="0" y2="0" gradientUnits="userSpaceOnUse"><stop offset="0.000" stop-color="#501a1c"/><stop offset="0.125" stop-color="#612b2d"/><stop offset="0.250" stop-color="#713f3a"/><stop offset="0.375" stop-color="#855346"/><stop offset="0.500" stop-color="#86634e"/><stop offset="0.625" stop-color="#777260"/><stop offset="0.750" stop-color="#5d7974"/><stop offset="0.875" stop-color="#31718a"/><stop offset="1.000" stop-color="#337d94"/></linearGradient><linearGradient id="r61" x1="0" x2="960" y1="0" y2="0" gradientUnits="userSpaceOnUse"><stop offset="0.000" stop-color="#501a1c"/><stop offset="0.125" stop-color="#612c2c"/><stop offset="0.250" stop-color="#724039"/><stop offset="0.375" stop-color="#865545"/><stop offset="0.500" stop-color="#86654d"/><stop offset="0.625" stop-color="#78745f"/><stop offset="0.750" stop-color="#5e7a74"/><stop offset="0.875" stop-color="#31728a"/><stop offset="1.000" stop-color="#347e95"/></linearGradient><linearGradient id="r62" x1="0" x2="960" y1="0" y2="0" gradientUnits="userSpaceOnUse"><stop offset="0.000" stop-color="#511b1c"/><stop offset="0.125" stop-color="#622d2c"/><stop offset="0.250" stop-color="#734139"/><stop offset="0.375" stop-color="#875644"/><stop offset="0.500" stop-color="#87664c"/><stop offset="0.625" stop-color="#79765f"/><stop offset="0.750" stop-color="#5f7b73"/><stop offset="0.875" stop-color="#32738b"/><stop offset="1.000" stop-color="#347f95"/></linearGradient><linearGradient id="r63" x1="0" x2="960" y1="0" y2="0" gradientUnits="userSpaceOnUse"><stop offset="0.000" stop-color="#521c1b"/><stop offset="0.125" stop-color="#632e2c"/><stop offset="0.250" stop-color="#744239"/><stop offset="0.375" stop-color="#885743"/><stop offset="0.500" stop-color="#88674b"/><stop offset="0.625" stop-color="#7a785f"/><stop offset="0.750" stop-color="#607c72"/><stop offset="0.875" stop-color="#33748c"/><stop offset="1.000" stop-color="#348095"/></linearGradient><linearGradient id="r64" x1="0" x2="960" y1="0" y2="0" gradientUnits="userSpaceOnUse"><stop offset="0.000" stop-color="#521c1b"/><stop offset="0.125" stop-color="#632f2b"/><stop offset="0.250" stop-color="#754338"/><stop offset="0.375" stop-color="#895942"/><stop offset="0.500" stop-color="#88694a"/><stop offset="0.625" stop-color="#7b7a5e"/><stop offset="0.750" stop-color="#617d72"/><stop offset="0.875" stop-color="#33758c"/><stop offset="1.000" stop-color="#358196"/></linearGradient><linearGradient id="r65" x1="0" x2="960" y1="0" y2="0" gradientUnits="userSpaceOnUse"><stop offset="0.000" stop-color="#531d1b"/><stop offset="0.125" stop-color="#64302b"/><stop offset="0.250" stop-color="#764538"/><stop offset="0.375" stop-color="#8a5a41"/><stop offset="0.500" stop-color="#896a49"/><stop offset="0.625" stop-color="#7c7c5e"/><stop offset="0.750" stop-color="#627f71"/><stop offset="0.875" stop-color="#34778d"/><stop offset="1.000" stop-color="#358296"/></linearGradient><linearGradient id="r66" x1="0" x2="960" y1="0" y2="0" gradientUnits="userSpaceOnUse"><stop offset="0.000" stop-color="#541e1a"/><stop offset="0.125" stop-color="#65312b"/><stop offset="0.250" stop-color="#774637"/><stop offset="0.375" stop-color="#8b5c40"/><stop offset="0.500" stop-color="#8a6c48"/><stop offset="0.625" stop-color="#7d7e5d"/><stop offset="0.750" stop-color="#638070"/><stop offset="0.875" stop-color="#35788d"/><stop offset="1.000" stop-color="#368397"/></linearGradient><linearGradient id="r67" x1="0" x2="960" y1="0" y2="0" gradientUnits="userSpaceOnUse"><stop offset="0.000" stop-color="#551f1a"/><stop offset="0.125" stop-color="#65312a"/><stop offset="0.250" stop-color="#774737"/><stop offset="0.375" stop-color="#8c5d3f"/><stop offset="0.500" stop-color="#8b6d47"/><stop offset="0.625" stop-color="#7d805d"/><stop offset="0.750" stop-color="#63816f"/><stop offset="0.875" stop-color="#35798e"/><stop offset="1.000" stop-color="#368397"/></linearGradient><linearGradient id="r68" x1="0" x2="960" y1="0" y2="0" gradientUnits="userSpaceOnUse"><stop offset="0.000" stop-color="#551f1a"/><stop offset="0.125" stop-color="#66322a"/><stop offset="0.250" stop-color="#784837"/><stop offset="0.375" stop-color="#8d5f3e"/><stop offset="0.500" stop-color="#8b6f46"/><stop offset="0.625" stop-color="#7e825d"/><stop offset="0.750" stop-color="#64826f"/><stop offset="0.875" stop-color="#367a8e"/><stop offset="1.000" stop-color="#378497"/></linearGradient><linearGradient id="r69" x1="0" x2="960" y1="0" y2="0" gradientUnits="userSpaceOnUse"><stop offset="0.000" stop-color="#56201a"/><stop offset="0.125" stop-color="#66332a"/><stop offset="0.250" stop-color="#794936"/><stop offset="0.375" stop-color="#8e603d"/><stop offset="0.500" stop-color="#8c7045"/><stop offset="0.625" stop-color="#7f855c"/><stop offset="0.750" stop-color="#65836e"/><stop offset="0.875" stop-color="#367b8f"/><stop offset="1.000" stop-color="#378598"/></linearGradient><linearGradient id="r70" x1="0" x2="960" y1="0" y2="0" gradientUnits="userSpaceOnUse"><stop offset="0.000" stop-color="#572119"/><stop offset="0.125" stop-color="#673429"/><stop offset="0.250" stop-color="#7a4b36"/><stop offset="0.375" stop-color="#8f623c"/><stop offset="0.500" stop-color="#8d7244"/><stop offset="0.625" stop-color="#80875c"/><stop offset="0.750" stop-color="#66856d"/><stop offset="0.875" stop-color="#377d8f"/><stop offset="1.000" stop-color="#388698"/></linearGradient><linearGradient id="r71" x1="0" x2="960" y1="0" y2="0" gradientUnits="userSpaceOnUse"><stop offset="0.000" stop-color="#572119"/><stop offset="0.125" stop-color="#683529"/><stop offset="0.250" stop-color="#7b4c35"/><stop offset="0.375" stop-color="#90633b"/><stop offset="0.500" stop-color="#8d7343"/><stop offset="0.625" stop-color="#81895b"/><stop offset="0.750" stop-color="#67866d"/><stop offset="0.875" stop-color="#387e90"/><stop offset="1.000" stop-color="#388799"/></linearGradient><linearGradient id="r72" x1="0" x2="960" y1="0" y2="0" gradientUnits="userSpaceOnUse"><stop offset="0.000" stop-color="#582219"/><stop offset="0.125" stop-color="#683629"/><stop offset="0.250" stop-color="#7c4d35"/><stop offset="0.375" stop-color="#91643a"/><stop offset="0.500" stop-color="#8e7442"/><stop offset="0.625" stop-color="#828b5b"/><stop offset="0.750" stop-color="#68876c"/><stop offset="0.875" stop-color="#387f91"/><stop offset="1.000" stop-color="#398899"/></linearGradient><linearGradient id="r73" x1="0" x2="960" y1="0" y2="0" gradientUnits="userSpaceOnUse"><stop offset="0.000" stop-color="#592318"/><stop offset="0.125" stop-color="#693728"/><stop offset="0.250" stop-color="#7d4e35"/><stop offset="0.375" stop-color="#926639"/><stop offset="0.500" stop-color="#8f7641"/><stop offset="0.625" stop-color="#838d5b"/><stop offset="0.750" stop-color="#69886b"/><stop offset="0.875" stop-color="#398091"/><stop offset="1.000" stop-color="#398999"/></linearGradient><linearGradient id="r74" x1="0" x2="960" y1="0" y2="0" gradientUnits="userSpaceOnUse"><stop offset="0.000" stop-color="#5a2418"/><stop offset="0.125" stop-color="#6a3828"/><stop offset="0.250" stop-color="#7e4f34"/><stop offset="0.375" stop-color="#936738"/><stop offset="0.500" stop-color="#907740"/><stop offset="0.625" stop-color="#848f5a"/><stop offset="0.750" stop-color="#6a896a"/><stop offset="0.875" stop-color="#3a8192"/><stop offset="1.000" stop-color="#3a8a9a"/></linearGradient><linearGradient id="r75" x1="0" x2="960" y1="0" y2="0" gradientUnits="userSpaceOnUse"><stop offset="0.000" stop-color="#5a2418"/><stop offset="0.125" stop-color="#6a3828"/><stop offset="0.250" stop-color="#7e5034"/><stop offset="0.375" stop-color="#946838"/><stop offset="0.500" stop-color="#907840"/><stop offset="0.625" stop-color="#84905a"/><stop offset="0.750" stop-color="#6a8a6a"/><stop offset="0.875" stop-color="#3a8292"/><stop offset="1.000" stop-color="#3a8a9a"/></linearGradient><linearGradient id="r76" x1="0" x2="960" y1="0" y2="0" gradientUnits="userSpaceOnUse"><stop offset="0.000" stop-color="#5b2518"/><stop offset="0.125" stop-color="#6b3928"/><stop offset="0.250" stop-color="#7e5134"/><stop offset="0.375" stop-color="#946938"/><stop offset="0.500" stop-color="#907940"/><stop offset="0.625" stop-color="#849059"/><stop offset="0.750" stop-color="#6a8b69"/><stop offset="0.875" stop-color="#3a8392"/><stop offset="1.000" stop-color="#3a8b9a"/></linearGradient><linearGradient id="r77" x1="0" x2="960" y1="0" y2="0" gradientUnits="userSpaceOnUse"><stop offset="0.000" stop-color="#5b2618"/><stop offset="0.125" stop-color="#6b3a27"/><stop offset="0.250" stop-color="#7f5233"/><stop offset="0.375" stop-color="#946a38"/><stop offset="0.500" stop-color="#907940"/><stop offset="0.625" stop-color="#839058"/><stop offset="0.750" stop-color="#698b69"/><stop offset="0.875" stop-color="#3a8492"/><stop offset="1.000" stop-color="#3a8c9a"/></linearGradient><linearGradient id="r78" x1="0" x2="960" y1="0" y2="0" gradientUnits="userSpaceOnUse"><stop offset="0.000" stop-color="#5c2718"/><stop offset="0.125" stop-color="#6c3b27"/><stop offset="0.250" stop-color="#7f5333"/><stop offset="0.375" stop-color="#936a38"/><stop offset="0.500" stop-color="#8f7940"/><stop offset="0.625" stop-color="#839058"/><stop offset="0.750" stop-color="#698c69"/><stop offset="0.875" stop-color="#3a8593"/><stop offset="1.000" stop-color="#3a8c9b"/></linearGradient><linearGradient id="r79" x1="0" x2="960" y1="0" y2="0" gradientUnits="userSpaceOnUse"><stop offset="0.000" stop-color="#5c2818"/><stop offset="0.125" stop-color="#6c3c27"/><stop offset="0.250" stop-color="#805433"/><stop offset="0.375" stop-color="#936b38"/><stop offset="0.500" stop-color="#8f7a40"/><stop offset="0.625" stop-color="#829057"/><stop offset="0.750" stop-color="#698c68"/><stop offset="0.875" stop-color="#3a8693"/><stop offset="1.000" stop-color="#3a8d9b"/></linearGradient><linearGradient id="r80" x1="0" x2="960" y1="0" y2="0" gradientUnits="userSpaceOnUse"><stop offset="0.000" stop-color="#5d2818"/><stop offset="0.125" stop-color="#6d3d27"/><stop offset="0.250" stop-color="#805433"/><stop offset="0.375" stop-color="#936b38"/><stop offset="0.500" stop-color="#8f7a40"/><stop offset="0.625" stop-color="#829057"/><stop offset="0.750" stop-color="#698d68"/><stop offset="0.875" stop-color="#3a8693"/><stop offset="1.000" stop-color="#3a8e9b"/></linearGradient><linearGradient id="r81" x1="0" x2="960" y1="0" y2="0" gradientUnits="userSpaceOnUse"><stop offset="0.000" stop-color="#5d2918"/><stop offset="0.125" stop-color="#6d3e26"/><stop offset="0.250" stop-color="#805532"/><stop offset="0.375" stop-color="#936c38"/><stop offset="0.500" stop-color="#8f7b40"/><stop offset="0.625" stop-color="#829056"/><stop offset="0.750" stop-color="#698d68"/><stop offset="0.875" stop-color="#3a8793"/><stop offset="1.000" stop-color="#3a8e9b"/></linearGradient><linearGradient id="r82" x1="0" x2="960" y1="0" y2="0" gradientUnits="userSpaceOnUse"><stop offset="0.000" stop-color="#5e2a18"/><stop offset="0.125" stop-color="#6e3e26"/><stop offset="0.250" stop-color="#805632"/><stop offset="0.375" stop-color="#926c38"/><stop offset="0.500" stop-color="#8e7b40"/><stop offset="0.625" stop-color="#829056"/><stop offset="0.750" stop-color="#688e68"/><stop offset="0.875" stop-color="#3a8894"/><stop offset="1.000" stop-color="#3a8f9c"/></linearGradient><linearGradient id="r83" x1="0" x2="960" y1="0" y2="0" gradientUnits="userSpaceOnUse"><stop offset="0.000" stop-color="#5f2b19"/><stop offset="0.125" stop-color="#6f3f26"/><stop offset="0.250" stop-color="#815732"/><stop offset="0.375" stop-color="#926d38"/><stop offset="0.500" stop-color="#8e7b40"/><stop offset="0.625" stop-color="#819055"/><stop offset="0.750" stop-color="#688f67"/><stop offset="0.875" stop-color="#3a8994"/><stop offset="1.000" stop-color="#3a909c"/></linearGradient><linearGradient id="r84" x1="0" x2="960" y1="0" y2="0" gradientUnits="userSpaceOnUse"><stop offset="0.000" stop-color="#5f2c19"/><stop offset="0.125" stop-color="#6f4025"/><stop offset="0.250" stop-color="#815831"/><stop offset="0.375" stop-color="#926e38"/><stop offset="0.500" stop-color="#8e7c40"/><stop offset="0.625" stop-color="#819054"/><stop offset="0.750" stop-color="#688f67"/><stop offset="0.875" stop-color="#3a8a94"/><stop offset="1.000" stop-color="#3a909c"/></linearGradient><linearGradient id="r85" x1="0" x2="960" y1="0" y2="0" gradientUnits="userSpaceOnUse"><stop offset="0.000" stop-color="#602c19"/><stop offset="0.125" stop-color="#704125"/><stop offset="0.250" stop-color="#825831"/><stop offset="0.375" stop-color="#926e38"/><stop offset="0.500" stop-color="#8e7c40"/><stop offset="0.625" stop-color="#809054"/><stop offset="0.750" stop-color="#689066"/><stop offset="0.875" stop-color="#3a8a94"/><stop offset="1.000" stop-color="#3a919c"/></linearGradient><linearGradient id="r86" x1="0" x2="960" y1="0" y2="0" gradientUnits="userSpaceOnUse"><stop offset="0.000" stop-color="#602d19"/><stop offset="0.125" stop-color="#704225"/><stop offset="0.250" stop-color="#825931"/><stop offset="0.375" stop-color="#926f38"/><stop offset="0.500" stop-color="#8e7d40"/><stop offset="0.625" stop-color="#809053"/><stop offset="0.750" stop-color="#689066"/><stop offset="0.875" stop-color="#3a8b94"/><stop offset="1.000" stop-color="#3a929c"/></linearGradient><linearGradient id="r87" x1="0" x2="960" y1="0" y2="0" gradientUnits="userSpaceOnUse"><stop offset="0.000" stop-color="#612e19"/><stop offset="0.125" stop-color="#714325"/><stop offset="0.250" stop-color="#825a31"/><stop offset="0.375" stop-color="#927038"/><stop offset="0.500" stop-color="#8e7d40"/><stop offset="0.625" stop-color="#809052"/><stop offset="0.750" stop-color="#689166"/><stop offset="0.875" stop-color="#3a8c94"/><stop offset="1.000" stop-color="#3a929c"/></linearGradient><linearGradient id="r88" x1="0" x2="960" y1="0" y2="0" gradientUnits="userSpaceOnUse"><stop offset="0.000" stop-color="#612f19"/><stop offset="0.125" stop-color="#714424"/><stop offset="0.250" stop-color="#825b30"/><stop offset="0.375" stop-color="#917038"/><stop offset="0.500" stop-color="#8d7d40"/><stop offset="0.625" stop-color="#809052"/><stop offset="0.750" stop-color="#679166"/><stop offset="0.875" stop-color="#3a8d95"/><stop offset="1.000" stop-color="#3a939d"/></linearGradient><linearGradient id="r89" x1="0" x2="960" y1="0" y2="0" gradientUnits="userSpaceOnUse"><stop offset="0.000" stop-color="#623019"/><stop offset="0.125" stop-color="#724524"/><stop offset="0.250" stop-color="#835c30"/><stop offset="0.375" stop-color="#917138"/><stop offset="0.500" stop-color="#8d7e40"/><stop offset="0.625" stop-color="#7f9051"/><stop offset="0.750" stop-color="#679265"/><stop offset="0.875" stop-color="#3a8e95"/><stop offset="1.000" stop-color="#3a949d"/></linearGradient><linearGradient id="r90" x1="0" x2="960" y1="0" y2="0" gradientUnits="userSpaceOnUse"><stop offset="0.000" stop-color="#623019"/><stop offset="0.125" stop-color="#724524"/><stop offset="0.250" stop-color="#835c30"/><stop offset="0.375" stop-color="#917138"/><stop offset="0.500" stop-color="#8d7e40"/><stop offset="0.625" stop-color="#7f9051"/><stop offset="0.750" stop-color="#679265"/><stop offset="0.875" stop-color="#3a8e95"/><stop offset="1.000" stop-color="#3a949d"/></linearGradient><linearGradient id="r91" x1="0" x2="960" y1="0" y2="0" gradientUnits="userSpaceOnUse"><stop offset="0.000" stop-color="#633119"/><stop offset="0.125" stop-color="#734624"/><stop offset="0.250" stop-color="#845d30"/><stop offset="0.375" stop-color="#917238"/><stop offset="0.500" stop-color="#8d7f40"/><stop offset="0.625" stop-color="#7e9050"/><stop offset="0.750" stop-color="#679364"/><stop offset="0.875" stop-color="#3a8f95"/><stop offset="1.000" stop-color="#3a959d"/></linearGradient><linearGradient id="r92" x1="0" x2="960" y1="0" y2="0" gradientUnits="userSpaceOnUse"><stop offset="0.000" stop-color="#633219"/><stop offset="0.125" stop-color="#734723"/><stop offset="0.250" stop-color="#845e2f"/><stop offset="0.375" stop-color="#907238"/><stop offset="0.500" stop-color="#8c7f40"/><stop offset="0.625" stop-color="#7e9050"/><stop offset="0.750" stop-color="#669364"/><stop offset="0.875" stop-color="#3a9096"/><stop offset="1.000" stop-color="#3a969e"/></linearGradient><linearGradient id="r93" x1="0" x2="960" y1="0" y2="0" gradientUnits="userSpaceOnUse"><stop offset="0.000" stop-color="#643319"/><stop offset="0.125" stop-color="#744823"/><stop offset="0.250" stop-color="#845f2f"/><stop offset="0.375" stop-color="#907338"/><stop offset="0.500" stop-color="#8c7f40"/><stop offset="0.625" stop-color="#7e904f"/><stop offset="0.750" stop-color="#669464"/><stop offset="0.875" stop-color="#3a9196"/><stop offset="1.000" stop-color="#3a969e"/></linearGradient><linearGradient id="r94" x1="0" x2="960" y1="0" y2="0" gradientUnits="userSpaceOnUse"><stop offset="0.000" stop-color="#643419"/><stop offset="0.125" stop-color="#744923"/><stop offset="0.250" stop-color="#84602f"/><stop offset="0.375" stop-color="#907438"/><stop offset="0.500" stop-color="#8c8040"/><stop offset="0.625" stop-color="#7e904e"/><stop offset="0.750" stop-color="#669464"/><stop offset="0.875" stop-color="#3a9296"/><stop offset="1.000" stop-color="#3a979e"/></linearGradient><linearGradient id="r95" x1="0" x2="960" y1="0" y2="0" gradientUnits="userSpaceOnUse"><stop offset="0.000" stop-color="#653419"/><stop offset="0.125" stop-color="#754a23"/><stop offset="0.250" stop-color="#85602f"/><stop offset="0.375" stop-color="#907438"/><stop offset="0.500" stop-color="#8c8040"/><stop offset="0.625" stop-color="#7d904e"/><stop offset="0.750" stop-color="#669563"/><stop offset="0.875" stop-color="#3a9296"/><stop offset="1.000" stop-color="#3a989e"/></linearGradient><linearGradient id="r96" x1="0" x2="960" y1="0" y2="0" gradientUnits="userSpaceOnUse"><stop offset="0.000" stop-color="#653519"/><stop offset="0.125" stop-color="#754b22"/><stop offset="0.250" stop-color="#85612e"/><stop offset="0.375" stop-color="#907538"/><stop offset="0.500" stop-color="#8c8140"/><stop offset="0.625" stop-color="#7d904d"/><stop offset="0.750" stop-color="#669563"/><stop offset="0.875" stop-color="#3a9396"/><stop offset="1.000" stop-color="#3a989e"/></linearGradient><linearGradient id="r97" x1="0" x2="960" y1="0" y2="0" gradientUnits="userSpaceOnUse"><stop offset="0.000" stop-color="#66361a"/><stop offset="0.125" stop-color="#764c22"/><stop offset="0.250" stop-color="#86622e"/><stop offset="0.375" stop-color="#907638"/><stop offset="0.500" stop-color="#8c8140"/><stop offset="0.625" stop-color="#7c904c"/><stop offset="0.750" stop-color="#669662"/><stop offset="0.875" stop-color="#3a9496"/><stop offset="1.000" stop-color="#3a999e"/></linearGradient><linearGradient id="r98" x1="0" x2="960" y1="0" y2="0" gradientUnits="userSpaceOnUse"><stop offset="0.000" stop-color="#67371a"/><stop offset="0.125" stop-color="#774c22"/><stop offset="0.250" stop-color="#86632e"/><stop offset="0.375" stop-color="#8f7638"/><stop offset="0.500" stop-color="#8b8140"/><stop offset="0.625" stop-color="#7c904c"/><stop offset="0.750" stop-color="#659762"/><stop offset="0.875" stop-color="#3a9597"/><stop offset="1.000" stop-color="#3a9a9f"/></linearGradient><linearGradient id="r99" x1="0" x2="960" y1="0" y2="0" gradientUnits="userSpaceOnUse"><stop offset="0.000" stop-color="#67381a"/><stop offset="0.125" stop-color="#774d21"/><stop offset="0.250" stop-color="#86642d"/><stop offset="0.375" stop-color="#8f7738"/><stop offset="0.500" stop-color="#8b8240"/><stop offset="0.625" stop-color="#7c904b"/><stop offset="0.750" stop-color="#659762"/><stop offset="0.875" stop-color="#3a9697"/><stop offset="1.000" stop-color="#3a9a9f"/></linearGradient><linearGradient id="r100" x1="0" x2="960" y1="0" y2="0" gradientUnits="userSpaceOnUse"><stop offset="0.000" stop-color="#68381a"/><stop offset="0.125" stop-color="#784e21"/><stop offset="0.250" stop-color="#86642d"/><stop offset="0.375" stop-color="#8f7738"/><stop offset="0.500" stop-color="#8b8240"/><stop offset="0.625" stop-color="#7c904b"/><stop offset="0.750" stop-color="#659862"/><stop offset="0.875" stop-color="#3a9697"/><stop offset="1.000" stop-color="#3a9b9f"/></linearGradient><linearGradient id="r101" x1="0" x2="960" y1="0" y2="0" gradientUnits="userSpaceOnUse"><stop offset="0.000" stop-color="#68391a"/><stop offset="0.125" stop-color="#784f21"/><stop offset="0.250" stop-color="#87652d"/><stop offset="0.375" stop-color="#8f7838"/><stop offset="0.500" stop-color="#8b8340"/><stop offset="0.625" stop-color="#7b904a"/><stop offset="0.750" stop-color="#659861"/><stop offset="0.875" stop-color="#3a9797"/><stop offset="1.000" stop-color="#3a9c9f"/></linearGradient><linearGradient id="r102" x1="0" x2="960" y1="0" y2="0" gradientUnits="userSpaceOnUse"><stop offset="0.000" stop-color="#693a1a"/><stop offset="0.125" stop-color="#795021"/><stop offset="0.250" stop-color="#87662d"/><stop offset="0.375" stop-color="#8e7838"/><stop offset="0.500" stop-color="#8a8340"/><stop offset="0.625" stop-color="#7b904a"/><stop offset="0.750" stop-color="#649961"/><stop offset="0.875" stop-color="#3a9898"/><stop offset="1.000" stop-color="#3a9ca0"/></linearGradient><linearGradient id="r103" x1="0" x2="960" y1="0" y2="0" gradientUnits="userSpaceOnUse"><stop offset="0.000" stop-color="#693b1a"/><stop offset="0.125" stop-color="#795120"/><stop offset="0.250" stop-color="#88672c"/><stop offset="0.375" stop-color="#8e7938"/><stop offset="0.500" stop-color="#8a8340"/><stop offset="0.625" stop-color="#7a9049"/><stop offset="0.750" stop-color="#649960"/><stop offset="0.875" stop-color="#3a9998"/><stop offset="1.000" stop-color="#3a9da0"/></linearGradient><linearGradient id="r104" x1="0" x2="960" y1="0" y2="0" gradientUnits="userSpaceOnUse"><stop offset="0.000" stop-color="#6a3c1a"/><stop offset="0.125" stop-color="#7a5220"/><stop offset="0.250" stop-color="#88682c"/><stop offset="0.375" stop-color="#8e7a38"/><stop offset="0.500" stop-color="#8a8440"/><stop offset="0.625" stop-color="#7a9048"/><stop offset="0.750" stop-color="#649a60"/><stop offset="0.875" stop-color="#3a9a98"/><stop offset="1.000" stop-color="#3a9ea0"/></linearGradient><linearGradient id="r105" x1="0" x2="960" y1="0" y2="0" gradientUnits="userSpaceOnUse"><stop offset="0.000" stop-color="#693c1a"/><stop offset="0.125" stop-color="#795120"/><stop offset="0.250" stop-color="#87672c"/><stop offset="0.375" stop-color="#8d7937"/><stop offset="0.500" stop-color="#89843f"/><stop offset="0.625" stop-color="#798f47"/><stop offset="0.750" stop-color="#639a5f"/><stop offset="0.875" stop-color="#3a9a97"/><stop offset="1.000" stop-color="#3a9e9f"/></linearGradient><linearGradient id="r106" x1="0" x2="960" y1="0" y2="0" gradientUnits="userSpaceOnUse"><stop offset="0.000" stop-color="#683b19"/><stop offset="0.125" stop-color="#77501f"/><stop offset="0.250" stop-color="#85662a"/><stop offset="0.375" stop-color="#8b7736"/><stop offset="0.500" stop-color="#88823e"/><stop offset="0.625" stop-color="#788e46"/><stop offset="0.750" stop-color="#62995e"/><stop offset="0.875" stop-color="#3a9996"/><stop offset="1.000" stop-color="#3a9d9e"/></linearGradient><linearGradient id="r107" x1="0" x2="960" y1="0" y2="0" gradientUnits="userSpaceOnUse"><stop offset="0.000" stop-color="#663a19"/><stop offset="0.125" stop-color="#754f1e"/><stop offset="0.250" stop-color="#83642a"/><stop offset="0.375" stop-color="#897634"/><stop offset="0.500" stop-color="#87823d"/><stop offset="0.625" stop-color="#768d45"/><stop offset="0.750" stop-color="#61985c"/><stop offset="0.875" stop-color="#3a9994"/><stop offset="1.000" stop-color="#3a9c9d"/></linearGradient><linearGradient id="r108" x1="0" x2="960" y1="0" y2="0" gradientUnits="userSpaceOnUse"><stop offset="0.000" stop-color="#643a19"/><stop offset="0.125" stop-color="#734e1e"/><stop offset="0.250" stop-color="#816328"/><stop offset="0.375" stop-color="#877433"/><stop offset="0.500" stop-color="#85803b"/><stop offset="0.625" stop-color="#758c44"/><stop offset="0.750" stop-color="#60975a"/><stop offset="0.875" stop-color="#3b9892"/><stop offset="1.000" stop-color="#399c9c"/></linearGradient><linearGradient id="r109" x1="0" x2="960" y1="0" y2="0" gradientUnits="userSpaceOnUse"><stop offset="0.000" stop-color="#633918"/><stop offset="0.125" stop-color="#714d1d"/><stop offset="0.250" stop-color="#7f6228"/><stop offset="0.375" stop-color="#857232"/><stop offset="0.500" stop-color="#84803a"/><stop offset="0.625" stop-color="#748b43"/><stop offset="0.750" stop-color="#5f9659"/><stop offset="0.875" stop-color="#3b9891"/><stop offset="1.000" stop-color="#399b9b"/></linearGradient><linearGradient id="r110" x1="0" x2="960" y1="0" y2="0" gradientUnits="userSpaceOnUse"><stop offset="0.000" stop-color="#613818"/><stop offset="0.125" stop-color="#704b1d"/><stop offset="0.250" stop-color="#7c6026"/><stop offset="0.375" stop-color="#837130"/><stop offset="0.500" stop-color="#837e39"/><stop offset="0.625" stop-color="#728941"/><stop offset="0.750" stop-color="#5e9557"/><stop offset="0.875" stop-color="#3b978f"/><stop offset="1.000" stop-color="#399a99"/></linearGradient><linearGradient id="r111" x1="0" x2="960" y1="0" y2="0" gradientUnits="userSpaceOnUse"><stop offset="0.000" stop-color="#603717"/><stop offset="0.125" stop-color="#6e4a1c"/><stop offset="0.250" stop-color="#7a5f26"/><stop offset="0.375" stop-color="#816f2f"/><stop offset="0.500" stop-color="#827e38"/><stop offset="0.625" stop-color="#718840"/><stop offset="0.750" stop-color="#5d9456"/><stop offset="0.875" stop-color="#3b978e"/><stop offset="1.000" stop-color="#399998"/></linearGradient><linearGradient id="r112" x1="0" x2="960" y1="0" y2="0" gradientUnits="userSpaceOnUse"><stop offset="0.000" stop-color="#5e3717"/><stop offset="0.125" stop-color="#6c491c"/><stop offset="0.250" stop-color="#785e24"/><stop offset="0.375" stop-color="#7f6d2e"/><stop offset="0.500" stop-color="#807c36"/><stop offset="0.625" stop-color="#70873f"/><stop offset="0.750" stop-color="#5c9354"/><stop offset="0.875" stop-color="#3c968c"/><stop offset="1.000" stop-color="#389997"/></linearGradient><linearGradient id="r113" x1="0" x2="960" y1="0" y2="0" gradientUnits="userSpaceOnUse"><stop offset="0.000" stop-color="#5c3617"/><stop offset="0.125" stop-color="#6a481b"/><stop offset="0.250" stop-color="#765c24"/><stop offset="0.375" stop-color="#7d6c2c"/><stop offset="0.500" stop-color="#7f7c35"/><stop offset="0.625" stop-color="#6e863e"/><stop offset="0.750" stop-color="#5b9252"/><stop offset="0.875" stop-color="#3c968a"/><stop offset="1.000" stop-color="#389896"/></linearGradient><linearGradient id="r114" x1="0" x2="960" y1="0" y2="0" gradientUnits="userSpaceOnUse"><stop offset="0.000" stop-color="#5b3516"/><stop offset="0.125" stop-color="#68471a"/><stop offset="0.250" stop-color="#745b22"/><stop offset="0.375" stop-color="#7b6a2b"/><stop offset="0.500" stop-color="#7e7a34"/><stop offset="0.625" stop-color="#6d853d"/><stop offset="0.750" stop-color="#5a9151"/><stop offset="0.875" stop-color="#3c9589"/><stop offset="1.000" stop-color="#389795"/></linearGradient><linearGradient id="r115" x1="0" x2="960" y1="0" y2="0" gradientUnits="userSpaceOnUse"><stop offset="0.000" stop-color="#593516"/><stop offset="0.125" stop-color="#66451a"/><stop offset="0.250" stop-color="#725922"/><stop offset="0.375" stop-color="#796829"/><stop offset="0.500" stop-color="#7c7a32"/><stop offset="0.625" stop-color="#6b833b"/><stop offset="0.750" stop-color="#58914f"/><stop offset="0.875" stop-color="#3c9587"/><stop offset="1.000" stop-color="#389793"/></linearGradient><linearGradient id="r116" x1="0" x2="960" y1="0" y2="0" gradientUnits="userSpaceOnUse"><stop offset="0.000" stop-color="#583415"/><stop offset="0.125" stop-color="#644419"/><stop offset="0.250" stop-color="#705820"/><stop offset="0.375" stop-color="#776628"/><stop offset="0.500" stop-color="#7b7831"/><stop offset="0.625" stop-color="#6a823a"/><stop offset="0.750" stop-color="#57904e"/><stop offset="0.875" stop-color="#3c9486"/><stop offset="1.000" stop-color="#389692"/></linearGradient><linearGradient id="r117" x1="0" x2="960" y1="0" y2="0" gradientUnits="userSpaceOnUse"><stop offset="0.000" stop-color="#563315"/><stop offset="0.125" stop-color="#624318"/><stop offset="0.250" stop-color="#6e5620"/><stop offset="0.375" stop-color="#756526"/><stop offset="0.500" stop-color="#7a7830"/><stop offset="0.625" stop-color="#688139"/><stop offset="0.750" stop-color="#568f4c"/><stop offset="0.875" stop-color="#3c9484"/><stop offset="1.000" stop-color="#389591"/></linearGradient><linearGradient id="r118" x1="0" x2="960" y1="0" y2="0" gradientUnits="userSpaceOnUse"><stop offset="0.000" stop-color="#543315"/><stop offset="0.125" stop-color="#604218"/><stop offset="0.250" stop-color="#6c551e"/><stop offset="0.375" stop-color="#736325"/><stop offset="0.500" stop-color="#78762e"/><stop offset="0.625" stop-color="#678038"/><stop offset="0.750" stop-color="#558e4a"/><stop offset="0.875" stop-color="#3d9382"/><stop offset="1.000" stop-color="#379590"/></linearGradient><linearGradient id="r119" x1="0" x2="960" y1="0" y2="0" gradientUnits="userSpaceOnUse"><stop offset="0.000" stop-color="#533214"/><stop offset="0.125" stop-color="#5e4117"/><stop offset="0.250" stop-color="#6a541e"/><stop offset="0.375" stop-color="#716124"/><stop offset="0.500" stop-color="#77762d"/><stop offset="0.625" stop-color="#667f37"/><stop offset="0.750" stop-color="#548d49"/><stop offset="0.875" stop-color="#3d9381"/><stop offset="1.000" stop-color="#37948f"/></linearGradient><linearGradient id="r120" x1="0" x2="960" y1="0" y2="0" gradientUnits="userSpaceOnUse"><stop offset="0.000" stop-color="#513114"/><stop offset="0.125" stop-color="#5d3f17"/><stop offset="0.250" stop-color="#67521c"/><stop offset="0.375" stop-color="#6f6022"/><stop offset="0.500" stop-color="#76742c"/><stop offset="0.625" stop-color="#647d35"/><stop offset="0.750" stop-color="#538c47"/><stop offset="0.875" stop-color="#3d927f"/><stop offset="1.000" stop-color="#37938d"/></linearGradient><linearGradient id="r121" x1="0" x2="960" y1="0" y2="0" gradientUnits="userSpaceOnUse"><stop offset="0.000" stop-color="#503013"/><stop offset="0.125" stop-color="#5b3e16"/><stop offset="0.250" stop-color="#65511c"/><stop offset="0.375" stop-color="#6d5e21"/><stop offset="0.500" stop-color="#75742b"/><stop offset="0.625" stop-color="#637c34"/><stop offset="0.750" stop-color="#528b46"/><stop offset="0.875" stop-color="#3d927e"/><stop offset="1.000" stop-color="#37928c"/></linearGradient><linearGradient id="r122" x1="0" x2="960" y1="0" y2="0" gradientUnits="userSpaceOnUse"><stop offset="0.000" stop-color="#4e3013"/><stop offset="0.125" stop-color="#593d16"/><stop offset="0.250" stop-color="#63501a"/><stop offset="0.375" stop-color="#6b5c20"/><stop offset="0.500" stop-color="#737229"/><stop offset="0.625" stop-color="#627b33"/><stop offset="0.750" stop-color="#518a44"/><stop offset="0.875" stop-color="#3e917c"/><stop offset="1.000" stop-color="#36928b"/></linearGradient><linearGradient id="r123" x1="0" x2="960" y1="0" y2="0" gradientUnits="userSpaceOnUse"><stop offset="0.000" stop-color="#4c2f13"/><stop offset="0.125" stop-color="#573c15"/><stop offset="0.250" stop-color="#614e1a"/><stop offset="0.375" stop-color="#695b1e"/><stop offset="0.500" stop-color="#727228"/><stop offset="0.625" stop-color="#607a32"/><stop offset="0.750" stop-color="#508942"/><stop offset="0.875" stop-color="#3e917a"/><stop offset="1.000" stop-color="#36918a"/></linearGradient><linearGradient id="r124" x1="0" x2="960" y1="0" y2="0" gradientUnits="userSpaceOnUse"><stop offset="0.000" stop-color="#4b2e12"/><stop offset="0.125" stop-color="#553b14"/><stop offset="0.250" stop-color="#5f4d18"/><stop offset="0.375" stop-color="#67591d"/><stop offset="0.500" stop-color="#717027"/><stop offset="0.625" stop-color="#5f7931"/><stop offset="0.750" stop-color="#4f8841"/><stop offset="0.875" stop-color="#3e9079"/><stop offset="1.000" stop-color="#369089"/></linearGradient><linearGradient id="r125" x1="0" x2="960" y1="0" y2="0" gradientUnits="userSpaceOnUse"><stop offset="0.000" stop-color="#4a2e12"/><stop offset="0.125" stop-color="#543a14"/><stop offset="0.250" stop-color="#5e4c18"/><stop offset="0.375" stop-color="#65581c"/><stop offset="0.500" stop-color="#6f6f26"/><stop offset="0.625" stop-color="#5e7830"/><stop offset="0.750" stop-color="#4e8840"/><stop offset="0.875" stop-color="#3e8f77"/><stop offset="1.000" stop-color="#368f87"/></linearGradient><linearGradient id="r126" x1="0" x2="960" y1="0" y2="0" gradientUnits="userSpaceOnUse"><stop offset="0.000" stop-color="#492d12"/><stop offset="0.125" stop-color="#533914"/><stop offset="0.250" stop-color="#5d4b18"/><stop offset="0.375" stop-color="#64571c"/><stop offset="0.500" stop-color="#6e6e25"/><stop offset="0.625" stop-color="#5d772f"/><stop offset="0.750" stop-color="#4d873f"/><stop offset="0.875" stop-color="#3d8e76"/><stop offset="1.000" stop-color="#358e86"/></linearGradient><linearGradient id="r127" x1="0" x2="960" y1="0" y2="0" gradientUnits="userSpaceOnUse"><stop offset="0.000" stop-color="#482d12"/><stop offset="0.125" stop-color="#523914"/><stop offset="0.250" stop-color="#5c4b17"/><stop offset="0.375" stop-color="#63571c"/><stop offset="0.500" stop-color="#6d6d25"/><stop offset="0.625" stop-color="#5c762e"/><stop offset="0.750" stop-color="#4d863f"/><stop offset="0.875" stop-color="#3d8c75"/><stop offset="1.000" stop-color="#358c84"/></linearGradient><linearGradient id="r128" x1="0" x2="960" y1="0" y2="0" gradientUnits="userSpaceOnUse"><stop offset="0.000" stop-color="#472c12"/><stop offset="0.125" stop-color="#513914"/><stop offset="0.250" stop-color="#5b4a17"/><stop offset="0.375" stop-color="#62571c"/><stop offset="0.500" stop-color="#6b6b24"/><stop offset="0.625" stop-color="#5c752e"/><stop offset="0.750" stop-color="#4c853e"/><stop offset="0.875" stop-color="#3c8b74"/><stop offset="1.000" stop-color="#348a82"/></linearGradient><linearGradient id="r129" x1="0" x2="960" y1="0" y2="0" gradientUnits="userSpaceOnUse"><stop offset="0.000" stop-color="#462c11"/><stop offset="0.125" stop-color="#503813"/><stop offset="0.250" stop-color="#5a4a17"/><stop offset="0.375" stop-color="#61561b"/><stop offset="0.500" stop-color="#6a6a24"/><stop offset="0.625" stop-color="#5b742d"/><stop offset="0.750" stop-color="#4c843e"/><stop offset="0.875" stop-color="#3c8973"/><stop offset="1.000" stop-color="#348981"/></linearGradient><linearGradient id="r130" x1="0" x2="960" y1="0" y2="0" gradientUnits="userSpaceOnUse"><stop offset="0.000" stop-color="#452b11"/><stop offset="0.125" stop-color="#503813"/><stop offset="0.250" stop-color="#594917"/><stop offset="0.375" stop-color="#60561b"/><stop offset="0.500" stop-color="#696923"/><stop offset="0.625" stop-color="#5a732c"/><stop offset="0.750" stop-color="#4b833d"/><stop offset="0.875" stop-color="#3b8872"/><stop offset="1.000" stop-color="#33877f"/></linearGradient><linearGradient id="r131" x1="0" x2="960" y1="0" y2="0" gradientUnits="userSpaceOnUse"><stop offset="0.000" stop-color="#442b11"/><stop offset="0.125" stop-color="#4f3713"/><stop offset="0.250" stop-color="#584916"/><stop offset="0.375" stop-color="#5f551b"/><stop offset="0.500" stop-color="#676723"/><stop offset="0.625" stop-color="#5a722c"/><stop offset="0.750" stop-color="#4b823d"/><stop offset="0.875" stop-color="#3b8671"/><stop offset="1.000" stop-color="#33867e"/></linearGradient><linearGradient id="r132" x1="0" x2="960" y1="0" y2="0" gradientUnits="userSpaceOnUse"><stop offset="0.000" stop-color="#432a11"/><stop offset="0.125" stop-color="#4e3713"/><stop offset="0.250" stop-color="#574816"/><stop offset="0.375" stop-color="#5e551b"/><stop offset="0.500" stop-color="#666622"/><stop offset="0.625" stop-color="#59712b"/><stop offset="0.750" stop-color="#4a813c"/><stop offset="0.875" stop-color="#3a8570"/><stop offset="1.000" stop-color="#32847c"/></linearGradient><linearGradient id="r133" x1="0" x2="960" y1="0" y2="0" gradientUnits="userSpaceOnUse"><stop offset="0.000" stop-color="#422911"/><stop offset="0.125" stop-color="#4d3713"/><stop offset="0.250" stop-color="#564716"/><stop offset="0.375" stop-color="#5d551b"/><stop offset="0.500" stop-color="#656521"/><stop offset="0.625" stop-color="#58702a"/><stop offset="0.750" stop-color="#49803b"/><stop offset="0.875" stop-color="#39846f"/><stop offset="1.000" stop-color="#31827a"/></linearGradient><linearGradient id="r134" x1="0" x2="960" y1="0" y2="0" gradientUnits="userSpaceOnUse"><stop offset="0.000" stop-color="#412911"/><stop offset="0.125" stop-color="#4c3613"/><stop offset="0.250" stop-color="#554715"/><stop offset="0.375" stop-color="#5c541b"/><stop offset="0.500" stop-color="#636321"/><stop offset="0.625" stop-color="#586f2a"/><stop offset="0.750" stop-color="#497f3b"/><stop offset="0.875" stop-color="#39826e"/><stop offset="1.000" stop-color="#318179"/></linearGradient><linearGradient id="r135" x1="0" x2="960" y1="0" y2="0" gradientUnits="userSpaceOnUse"><stop offset="0.000" stop-color="#402811"/><stop offset="0.125" stop-color="#4c3613"/><stop offset="0.250" stop-color="#544615"/><stop offset="0.375" stop-color="#5b541b"/><stop offset="0.500" stop-color="#626220"/><stop offset="0.625" stop-color="#576e29"/><stop offset="0.750" stop-color="#487e3a"/><stop offset="0.875" stop-color="#38816d"/><stop offset="1.000" stop-color="#307f77"/></linearGradient><linearGradient id="r136" x1="0" x2="960" y1="0" y2="0" gradientUnits="userSpaceOnUse"><stop offset="0.000" stop-color="#3f2810"/><stop offset="0.125" stop-color="#4b3512"/><stop offset="0.250" stop-color="#534615"/><stop offset="0.375" stop-color="#5a531a"/><stop offset="0.500" stop-color="#616120"/><stop offset="0.625" stop-color="#566d28"/><stop offset="0.750" stop-color="#487d3a"/><stop offset="0.875" stop-color="#387f6c"/><stop offset="1.000" stop-color="#307e76"/></linearGradient><linearGradient id="r137" x1="0" x2="960" y1="0" y2="0" gradientUnits="userSpaceOnUse"><stop offset="0.000" stop-color="#3e2710"/><stop offset="0.125" stop-color="#4a3512"/><stop offset="0.250" stop-color="#524515"/><stop offset="0.375" stop-color="#59531a"/><stop offset="0.500" stop-color="#5f5f1f"/><stop offset="0.625" stop-color="#566c28"/><stop offset="0.750" stop-color="#477c39"/><stop offset="0.875" stop-color="#377e6b"/><stop offset="1.000" stop-color="#2f7c74"/></linearGradient><linearGradient id="r138" x1="0" x2="960" y1="0" y2="0" gradientUnits="userSpaceOnUse"><stop offset="0.000" stop-color="#3d2710"/><stop offset="0.125" stop-color="#493512"/><stop offset="0.250" stop-color="#514514"/><stop offset="0.375" stop-color="#58531a"/><stop offset="0.500" stop-color="#5e5e1f"/><stop offset="0.625" stop-color="#556b27"/><stop offset="0.750" stop-color="#477b39"/><stop offset="0.875" stop-color="#377c6a"/><stop offset="1.000" stop-color="#2f7a72"/></linearGradient><linearGradient id="r139" x1="0" x2="960" y1="0" y2="0" gradientUnits="userSpaceOnUse"><stop offset="0.000" stop-color="#3c2610"/><stop offset="0.125" stop-color="#483412"/><stop offset="0.250" stop-color="#504414"/><stop offset="0.375" stop-color="#57521a"/><stop offset="0.500" stop-color="#5d5d1e"/><stop offset="0.625" stop-color="#546a26"/><stop offset="0.750" stop-color="#467a38"/><stop offset="0.875" stop-color="#367b69"/><stop offset="1.000" stop-color="#2e7971"/></linearGradient><linearGradient id="r140" x1="0" x2="960" y1="0" y2="0" gradientUnits="userSpaceOnUse"><stop offset="0.000" stop-color="#3b2610"/><stop offset="0.125" stop-color="#473312"/><stop offset="0.250" stop-color="#4f4314"/><stop offset="0.375" stop-color="#55511a"/><stop offset="0.500" stop-color="#5b5b1e"/><stop offset="0.625" stop-color="#536925"/><stop offset="0.750" stop-color="#457937"/><stop offset="0.875" stop-color="#367967"/><stop offset="1.000" stop-color="#2e776f"/></linearGradient><linearGradient id="r141" x1="0" x2="960" y1="0" y2="0" gradientUnits="userSpaceOnUse"><stop offset="0.000" stop-color="#3a250f"/><stop offset="0.125" stop-color="#463211"/><stop offset="0.250" stop-color="#4d4213"/><stop offset="0.375" stop-color="#545019"/><stop offset="0.500" stop-color="#59591d"/><stop offset="0.625" stop-color="#516724"/><stop offset="0.750" stop-color="#447736"/><stop offset="0.875" stop-color="#357765"/><stop offset="1.000" stop-color="#2d756d"/></linearGradient><linearGradient id="r142" x1="0" x2="960" y1="0" y2="0" gradientUnits="userSpaceOnUse"><stop offset="0.000" stop-color="#39240e"/><stop offset="0.125" stop-color="#443110"/><stop offset="0.250" stop-color="#4c4112"/><stop offset="0.375" stop-color="#524f18"/><stop offset="0.500" stop-color="#56581c"/><stop offset="0.625" stop-color="#4f6523"/><stop offset="0.750" stop-color="#437635"/><stop offset="0.875" stop-color="#347563"/><stop offset="1.000" stop-color="#2c746b"/></linearGradient><linearGradient id="r143" x1="0" x2="960" y1="0" y2="0" gradientUnits="userSpaceOnUse"><stop offset="0.000" stop-color="#37230e"/><stop offset="0.125" stop-color="#423010"/><stop offset="0.250" stop-color="#4a4012"/><stop offset="0.375" stop-color="#504e17"/><stop offset="0.500" stop-color="#54561b"/><stop offset="0.625" stop-color="#4d6322"/><stop offset="0.750" stop-color="#427433"/><stop offset="0.875" stop-color="#337361"/><stop offset="1.000" stop-color="#2b7269"/></linearGradient><linearGradient id="r144" x1="0" x2="960" y1="0" y2="0" gradientUnits="userSpaceOnUse"><stop offset="0.000" stop-color="#36220d"/><stop offset="0.125" stop-color="#412f0f"/><stop offset="0.250" stop-color="#483f11"/><stop offset="0.375" stop-color="#4f4d16"/><stop offset="0.500" stop-color="#52541a"/><stop offset="0.625" stop-color="#4c6221"/><stop offset="0.750" stop-color="#417232"/><stop offset="0.875" stop-color="#327260"/><stop offset="1.000" stop-color="#2a7066"/></linearGradient><linearGradient id="r145" x1="0" x2="960" y1="0" y2="0" gradientUnits="userSpaceOnUse"><stop offset="0.000" stop-color="#35210c"/><stop offset="0.125" stop-color="#3f2e0e"/><stop offset="0.250" stop-color="#463d10"/><stop offset="0.375" stop-color="#4d4b16"/><stop offset="0.500" stop-color="#505219"/><stop offset="0.625" stop-color="#4a6020"/><stop offset="0.750" stop-color="#3f7031"/><stop offset="0.875" stop-color="#31705e"/><stop offset="1.000" stop-color="#2a6e64"/></linearGradient><linearGradient id="r146" x1="0" x2="960" y1="0" y2="0" gradientUnits="userSpaceOnUse"><stop offset="0.000" stop-color="#33200c"/><stop offset="0.125" stop-color="#3e2d0e"/><stop offset="0.250" stop-color="#453c10"/><stop offset="0.375" stop-color="#4c4a15"/><stop offset="0.500" stop-color="#4d5118"/><stop offset="0.625" stop-color="#485e1f"/><stop offset="0.750" stop-color="#3e6f2f"/><stop offset="0.875" stop-color="#306e5c"/><stop offset="1.000" stop-color="#296d62"/></linearGradient><linearGradient id="r147" x1="0" x2="960" y1="0" y2="0" gradientUnits="userSpaceOnUse"><stop offset="0.000" stop-color="#321f0b"/><stop offset="0.125" stop-color="#3c2c0d"/><stop offset="0.250" stop-color="#433b0f"/><stop offset="0.375" stop-color="#4a4914"/><stop offset="0.500" stop-color="#4b4f17"/><stop offset="0.625" stop-color="#465c1e"/><stop offset="0.750" stop-color="#3d6d2e"/><stop offset="0.875" stop-color="#2f6c5a"/><stop offset="1.000" stop-color="#286b60"/></linearGradient><linearGradient id="r148" x1="0" x2="960" y1="0" y2="0" gradientUnits="userSpaceOnUse"><stop offset="0.000" stop-color="#311e0a"/><stop offset="0.125" stop-color="#3a2b0c"/><stop offset="0.250" stop-color="#413a0e"/><stop offset="0.375" stop-color="#484813"/><stop offset="0.500" stop-color="#494d16"/><stop offset="0.625" stop-color="#445a1d"/><stop offset="0.750" stop-color="#3c6b2d"/><stop offset="0.875" stop-color="#2e6a58"/><stop offset="1.000" stop-color="#27695e"/></linearGradient><linearGradient id="r149" x1="0" x2="960" y1="0" y2="0" gradientUnits="userSpaceOnUse"><stop offset="0.000" stop-color="#2f1d0a"/><stop offset="0.125" stop-color="#392a0c"/><stop offset="0.250" stop-color="#40390e"/><stop offset="0.375" stop-color="#474712"/><stop offset="0.500" stop-color="#464c15"/><stop offset="0.625" stop-color="#42581c"/><stop offset="0.750" stop-color="#3b6a2b"/><stop offset="0.875" stop-color="#2d6856"/><stop offset="1.000" stop-color="#26685c"/></linearGradient><linearGradient id="r150" x1="0" x2="960" y1="0" y2="0" gradientUnits="userSpaceOnUse"><stop offset="0.000" stop-color="#2e1c09"/><stop offset="0.125" stop-color="#37290b"/><stop offset="0.250" stop-color="#3e370d"/><stop offset="0.375" stop-color="#454512"/><stop offset="0.500" stop-color="#444a14"/><stop offset="0.625" stop-color="#40561b"/><stop offset="0.750" stop-color="#39682a"/><stop offset="0.875" stop-color="#2c6654"/><stop offset="1.000" stop-color="#26665a"/></linearGradient><linearGradient id="r151" x1="0" x2="960" y1="0" y2="0" gradientUnits="userSpaceOnUse"><stop offset="0.000" stop-color="#2d1b08"/><stop offset="0.125" stop-color="#36280a"/><stop offset="0.250" stop-color="#3c360c"/><stop offset="0.375" stop-color="#444411"/><stop offset="0.500" stop-color="#424813"/><stop offset="0.625" stop-color="#3f551a"/><stop offset="0.750" stop-color="#386629"/><stop offset="0.875" stop-color="#2b6553"/><stop offset="1.000" stop-color="#256457"/></linearGradient><linearGradient id="r152" x1="0" x2="960" y1="0" y2="0" gradientUnits="userSpaceOnUse"><stop offset="0.000" stop-color="#2b1a08"/><stop offset="0.125" stop-color="#34270a"/><stop offset="0.250" stop-color="#3a350c"/><stop offset="0.375" stop-color="#424310"/><stop offset="0.500" stop-color="#404612"/><stop offset="0.625" stop-color="#3d5319"/><stop offset="0.750" stop-color="#376427"/><stop offset="0.875" stop-color="#2a6351"/><stop offset="1.000" stop-color="#246255"/></linearGradient><linearGradient id="r153" x1="0" x2="960" y1="0" y2="0" gradientUnits="userSpaceOnUse"><stop offset="0.000" stop-color="#2a1907"/><stop offset="0.125" stop-color="#322609"/><stop offset="0.250" stop-color="#39340b"/><stop offset="0.375" stop-color="#40420f"/><stop offset="0.500" stop-color="#3d4511"/><stop offset="0.625" stop-color="#3b5118"/><stop offset="0.750" stop-color="#366326"/><stop offset="0.875" stop-color="#29614f"/><stop offset="1.000" stop-color="#236153"/></linearGradient><linearGradient id="r154" x1="0" x2="960" y1="0" y2="0" gradientUnits="userSpaceOnUse"><stop offset="0.000" stop-color="#291806"/><stop offset="0.125" stop-color="#312508"/><stop offset="0.250" stop-color="#37330a"/><stop offset="0.375" stop-color="#3f410e"/><stop offset="0.500" stop-color="#3b4310"/><stop offset="0.625" stop-color="#394f17"/><stop offset="0.750" stop-color="#356125"/><stop offset="0.875" stop-color="#285f4d"/><stop offset="1.000" stop-color="#225f51"/></linearGradient><linearGradient id="r155" x1="0" x2="960" y1="0" y2="0" gradientUnits="userSpaceOnUse"><stop offset="0.000" stop-color="#271706"/><stop offset="0.125" stop-color="#2f2308"/><stop offset="0.250" stop-color="#35310a"/><stop offset="0.375" stop-color="#3d3f0e"/><stop offset="0.500" stop-color="#394110"/><stop offset="0.625" stop-color="#374d16"/><stop offset="0.750" stop-color="#335e23"/><stop offset="0.875" stop-color="#275d4b"/><stop offset="1.000" stop-color="#215d4f"/></linearGradient><linearGradient id="r156" x1="0" x2="960" y1="0" y2="0" gradientUnits="userSpaceOnUse"><stop offset="0.000" stop-color="#251606"/><stop offset="0.125" stop-color="#2d2208"/><stop offset="0.250" stop-color="#332f09"/><stop offset="0.375" stop-color="#3a3c0d"/><stop offset="0.500" stop-color="#373f0f"/><stop offset="0.625" stop-color="#354b15"/><stop offset="0.750" stop-color="#315b22"/><stop offset="0.875" stop-color="#265a49"/><stop offset="1.000" stop-color="#205a4d"/></linearGradient><linearGradient id="r157" x1="0" x2="960" y1="0" y2="0" gradientUnits="userSpaceOnUse"><stop offset="0.000" stop-color="#241505"/><stop offset="0.125" stop-color="#2b2007"/><stop offset="0.250" stop-color="#312d09"/><stop offset="0.375" stop-color="#383a0d"/><stop offset="0.500" stop-color="#353d0e"/><stop offset="0.625" stop-color="#334814"/><stop offset="0.750" stop-color="#2f5821"/><stop offset="0.875" stop-color="#245847"/><stop offset="1.000" stop-color="#1f584a"/></linearGradient><linearGradient id="r158" x1="0" x2="960" y1="0" y2="0" gradientUnits="userSpaceOnUse"><stop offset="0.000" stop-color="#221405"/><stop offset="0.125" stop-color="#291f07"/><stop offset="0.250" stop-color="#2f2b09"/><stop offset="0.375" stop-color="#36380c"/><stop offset="0.500" stop-color="#333b0e"/><stop offset="0.625" stop-color="#314613"/><stop offset="0.750" stop-color="#2d551f"/><stop offset="0.875" stop-color="#235645"/><stop offset="1.000" stop-color="#1e5548"/></linearGradient><linearGradient id="r159" x1="0" x2="960" y1="0" y2="0" gradientUnits="userSpaceOnUse"><stop offset="0.000" stop-color="#201305"/><stop offset="0.125" stop-color="#271d07"/><stop offset="0.250" stop-color="#2c2908"/><stop offset="0.375" stop-color="#33350c"/><stop offset="0.500" stop-color="#30390d"/><stop offset="0.625" stop-color="#2f4412"/><stop offset="0.750" stop-color="#2c521e"/><stop offset="0.875" stop-color="#215344"/><stop offset="1.000" stop-color="#1d5346"/></linearGradient><linearGradient id="r160" x1="0" x2="960" y1="0" y2="0" gradientUnits="userSpaceOnUse"><stop offset="0.000" stop-color="#1e1205"/><stop offset="0.125" stop-color="#251c07"/><stop offset="0.250" stop-color="#2a2708"/><stop offset="0.375" stop-color="#31330b"/><stop offset="0.500" stop-color="#2e370c"/><stop offset="0.625" stop-color="#2d4212"/><stop offset="0.750" stop-color="#2a4e1d"/><stop offset="0.875" stop-color="#205142"/><stop offset="1.000" stop-color="#1b5044"/></linearGradient><linearGradient id="r161" x1="0" x2="960" y1="0" y2="0" gradientUnits="userSpaceOnUse"><stop offset="0.000" stop-color="#1d1104"/><stop offset="0.125" stop-color="#231a06"/><stop offset="0.250" stop-color="#282507"/><stop offset="0.375" stop-color="#2e300b"/><stop offset="0.500" stop-color="#2c350c"/><stop offset="0.625" stop-color="#2b3f11"/><stop offset="0.750" stop-color="#284b1b"/><stop offset="0.875" stop-color="#1e4e40"/><stop offset="1.000" stop-color="#1a4e41"/></linearGradient><linearGradient id="r162" x1="0" x2="960" y1="0" y2="0" gradientUnits="userSpaceOnUse"><stop offset="0.000" stop-color="#1b1004"/><stop offset="0.125" stop-color="#211906"/><stop offset="0.250" stop-color="#262307"/><stop offset="0.375" stop-color="#2c2e0a"/><stop offset="0.500" stop-color="#2a330b"/><stop offset="0.625" stop-color="#293d10"/><stop offset="0.750" stop-color="#26481a"/><stop offset="0.875" stop-color="#1d4c3e"/><stop offset="1.000" stop-color="#194b3f"/></linearGradient><linearGradient id="r163" x1="0" x2="960" y1="0" y2="0" gradientUnits="userSpaceOnUse"><stop offset="0.000" stop-color="#190f04"/><stop offset="0.125" stop-color="#1f1806"/><stop offset="0.250" stop-color="#242107"/><stop offset="0.375" stop-color="#2a2c09"/><stop offset="0.500" stop-color="#28310a"/><stop offset="0.625" stop-color="#273b0f"/><stop offset="0.750" stop-color="#244519"/><stop offset="0.875" stop-color="#1c4a3c"/><stop offset="1.000" stop-color="#18483d"/></linearGradient><linearGradient id="r164" x1="0" x2="960" y1="0" y2="0" gradientUnits="userSpaceOnUse"><stop offset="0.000" stop-color="#180e03"/><stop offset="0.125" stop-color="#1d1605"/><stop offset="0.250" stop-color="#221f06"/><stop offset="0.375" stop-color="#272909"/><stop offset="0.500" stop-color="#262f0a"/><stop offset="0.625" stop-color="#25380e"/><stop offset="0.750" stop-color="#224217"/><stop offset="0.875" stop-color="#1a473a"/><stop offset="1.000" stop-color="#17463a"/></linearGradient><linearGradient id="r165" x1="0" x2="960" y1="0" y2="0" gradientUnits="userSpaceOnUse"><stop offset="0.000" stop-color="#160d03"/><stop offset="0.125" stop-color="#1b1505"/><stop offset="0.250" stop-color="#201d06"/><stop offset="0.375" stop-color="#252708"/><stop offset="0.500" stop-color="#242d09"/><stop offset="0.625" stop-color="#23360e"/><stop offset="0.750" stop-color="#203e16"/><stop offset="0.875" stop-color="#194538"/><stop offset="1.000" stop-color="#154338"/></linearGradient><linearGradient id="r166" x1="0" x2="960" y1="0" y2="0" gradientUnits="userSpaceOnUse"><stop offset="0.000" stop-color="#140c03"/><stop offset="0.125" stop-color="#191305"/><stop offset="0.250" stop-color="#1d1b05"/><stop offset="0.375" stop-color="#222408"/><stop offset="0.500" stop-color="#212b08"/><stop offset="0.625" stop-color="#21340d"/><stop offset="0.750" stop-color="#1f3b15"/><stop offset="0.875" stop-color="#174237"/><stop offset="1.000" stop-color="#144136"/></linearGradient><linearGradient id="r167" x1="0" x2="960" y1="0" y2="0" gradientUnits="userSpaceOnUse"><stop offset="0.000" stop-color="#120b03"/><stop offset="0.125" stop-color="#171205"/><stop offset="0.250" stop-color="#1b1905"/><stop offset="0.375" stop-color="#202207"/><stop offset="0.500" stop-color="#1f2908"/><stop offset="0.625" stop-color="#1f320c"/><stop offset="0.750" stop-color="#1d3813"/><stop offset="0.875" stop-color="#164035"/><stop offset="1.000" stop-color="#133e34"/></linearGradient><linearGradient id="r168" x1="0" x2="960" y1="0" y2="0" gradientUnits="userSpaceOnUse"><stop offset="0.000" stop-color="#110a02"/><stop offset="0.125" stop-color="#151004"/><stop offset="0.250" stop-color="#191705"/><stop offset="0.375" stop-color="#1e2007"/><stop offset="0.500" stop-color="#1d2707"/><stop offset="0.625" stop-color="#1d2f0b"/><stop offset="0.750" stop-color="#1b3512"/><stop offset="0.875" stop-color="#143e33"/><stop offset="1.000" stop-color="#123c31"/></linearGradient><linearGradient id="r169" x1="0" x2="960" y1="0" y2="0" gradientUnits="userSpaceOnUse"><stop offset="0.000" stop-color="#0f0902"/><stop offset="0.125" stop-color="#130f04"/><stop offset="0.250" stop-color="#171504"/><stop offset="0.375" stop-color="#1b1d06"/><stop offset="0.500" stop-color="#1b2506"/><stop offset="0.625" stop-color="#1b2d0a"/><stop offset="0.750" stop-color="#193211"/><stop offset="0.875" stop-color="#133b31"/><stop offset="1.000" stop-color="#11392f"/></linearGradient><linearGradient id="r170" x1="0" x2="960" y1="0" y2="0" gradientUnits="userSpaceOnUse"><stop offset="0.000" stop-color="#0e0802"/><stop offset="0.125" stop-color="#120e04"/><stop offset="0.250" stop-color="#151404"/><stop offset="0.375" stop-color="#191b06"/><stop offset="0.500" stop-color="#192306"/><stop offset="0.625" stop-color="#192b0a"/><stop offset="0.750" stop-color="#182f10"/><stop offset="0.875" stop-color="#12392f"/><stop offset="1.000" stop-color="#10372d"/></linearGradient><linearGradient id="r171" x1="0" x2="960" y1="0" y2="0" gradientUnits="userSpaceOnUse"><stop offset="0.000" stop-color="#0d0702"/><stop offset="0.125" stop-color="#100d04"/><stop offset="0.250" stop-color="#141204"/><stop offset="0.375" stop-color="#181a06"/><stop offset="0.500" stop-color="#182106"/><stop offset="0.625" stop-color="#18290a"/><stop offset="0.750" stop-color="#172d0f"/><stop offset="0.875" stop-color="#11362c"/><stop offset="1.000" stop-color="#0f342b"/></linearGradient><linearGradient id="r172" x1="0" x2="960" y1="0" y2="0" gradientUnits="userSpaceOnUse"><stop offset="0.000" stop-color="#0c0702"/><stop offset="0.125" stop-color="#100c04"/><stop offset="0.250" stop-color="#131204"/><stop offset="0.375" stop-color="#171906"/><stop offset="0.500" stop-color="#172006"/><stop offset="0.625" stop-color="#172709"/><stop offset="0.750" stop-color="#162b0f"/><stop offset="0.875" stop-color="#10332a"/><stop offset="1.000" stop-color="#0f3128"/></linearGradient><linearGradient id="r173" x1="0" x2="960" y1="0" y2="0" gradientUnits="userSpaceOnUse"><stop offset="0.000" stop-color="#0b0702"/><stop offset="0.125" stop-color="#0e0b03"/><stop offset="0.250" stop-color="#121004"/><stop offset="0.375" stop-color="#151705"/><stop offset="0.500" stop-color="#161e06"/><stop offset="0.625" stop-color="#162509"/><stop offset="0.750" stop-color="#15290e"/><stop offset="0.875" stop-color="#103028"/><stop offset="1.000" stop-color="#0e2f26"/></linearGradient><linearGradient id="r174" x1="0" x2="960" y1="0" y2="0" gradientUnits="userSpaceOnUse"><stop offset="0.000" stop-color="#0a0601"/><stop offset="0.125" stop-color="#0e0b03"/><stop offset="0.250" stop-color="#111003"/><stop offset="0.375" stop-color="#141605"/><stop offset="0.500" stop-color="#151c05"/><stop offset="0.625" stop-color="#152309"/><stop offset="0.750" stop-color="#14260e"/><stop offset="0.875" stop-color="#0f2d25"/><stop offset="1.000" stop-color="#0e2c24"/></linearGradient><linearGradient id="r175" x1="0" x2="960" y1="0" y2="0" gradientUnits="userSpaceOnUse"><stop offset="0.000" stop-color="#0a0601"/><stop offset="0.125" stop-color="#0c0a03"/><stop offset="0.250" stop-color="#0f0e03"/><stop offset="0.375" stop-color="#131505"/><stop offset="0.500" stop-color="#131a05"/><stop offset="0.625" stop-color="#142109"/><stop offset="0.750" stop-color="#13240d"/><stop offset="0.875" stop-color="#0e2b23"/><stop offset="1.000" stop-color="#0d2922"/></linearGradient><linearGradient id="r176" x1="0" x2="960" y1="0" y2="0" gradientUnits="userSpaceOnUse"><stop offset="0.000" stop-color="#090501"/><stop offset="0.125" stop-color="#0c0903"/><stop offset="0.250" stop-color="#0e0e03"/><stop offset="0.375" stop-color="#111305"/><stop offset="0.500" stop-color="#121905"/><stop offset="0.625" stop-color="#131f08"/><stop offset="0.750" stop-color="#12220d"/><stop offset="0.875" stop-color="#0e2820"/><stop offset="1.000" stop-color="#0d271f"/></linearGradient><linearGradient id="r177" x1="0" x2="960" y1="0" y2="0" gradientUnits="userSpaceOnUse"><stop offset="0.000" stop-color="#080501"/><stop offset="0.125" stop-color="#0a0802"/><stop offset="0.250" stop-color="#0d0c03"/><stop offset="0.375" stop-color="#101204"/><stop offset="0.500" stop-color="#111705"/><stop offset="0.625" stop-color="#121d08"/><stop offset="0.750" stop-color="#11200c"/><stop offset="0.875" stop-color="#0d251e"/><stop offset="1.000" stop-color="#0c241d"/></linearGradient><linearGradient id="r178" x1="0" x2="960" y1="0" y2="0" gradientUnits="userSpaceOnUse"><stop offset="0.000" stop-color="#070501"/><stop offset="0.125" stop-color="#0a0802"/><stop offset="0.250" stop-color="#0c0c03"/><stop offset="0.375" stop-color="#0f1104"/><stop offset="0.500" stop-color="#101505"/><stop offset="0.625" stop-color="#111b08"/><stop offset="0.750" stop-color="#101e0b"/><stop offset="0.875" stop-color="#0c221c"/><stop offset="1.000" stop-color="#0b211b"/></linearGradient><linearGradient id="r179" x1="0" x2="960" y1="0" y2="0" gradientUnits="userSpaceOnUse"><stop offset="0.000" stop-color="#060401"/><stop offset="0.125" stop-color="#080702"/><stop offset="0.250" stop-color="#0b0a03"/><stop offset="0.375" stop-color="#0d0f04"/><stop offset="0.500" stop-color="#0f1405"/><stop offset="0.625" stop-color="#101907"/><stop offset="0.750" stop-color="#0f1c0b"/><stop offset="0.875" stop-color="#0c1f19"/><stop offset="1.000" stop-color="#0b1f18"/></linearGradient><linearGradient id="r180" x1="0" x2="960" y1="0" y2="0" gradientUnits="userSpaceOnUse"><stop offset="0.000" stop-color="#060401"/><stop offset="0.125" stop-color="#080602"/><stop offset="0.250" stop-color="#090a03"/><stop offset="0.375" stop-color="#0c0e04"/><stop offset="0.500" stop-color="#0d1205"/><stop offset="0.625" stop-color="#0f1707"/><stop offset="0.750" stop-color="#0e1a0a"/><stop offset="0.875" stop-color="#0b1d17"/><stop offset="1.000" stop-color="#0a1c16"/></linearGradient><linearGradient id="r181" x1="0" x2="960" y1="0" y2="0" gradientUnits="userSpaceOnUse"><stop offset="0.000" stop-color="#050300"/><stop offset="0.125" stop-color="#060602"/><stop offset="0.250" stop-color="#080802"/><stop offset="0.375" stop-color="#0b0d04"/><stop offset="0.500" stop-color="#0c1004"/><stop offset="0.625" stop-color="#0e1507"/><stop offset="0.750" stop-color="#0d170a"/><stop offset="0.875" stop-color="#0a1a14"/><stop offset="1.000" stop-color="#0a1914"/></linearGradient><linearGradient id="r182" x1="0" x2="960" y1="0" y2="0" gradientUnits="userSpaceOnUse"><stop offset="0.000" stop-color="#040300"/><stop offset="0.125" stop-color="#050502"/><stop offset="0.250" stop-color="#070802"/><stop offset="0.375" stop-color="#090b04"/><stop offset="0.500" stop-color="#0b0e04"/><stop offset="0.625" stop-color="#0d1307"/><stop offset="0.750" stop-color="#0c1509"/><stop offset="0.875" stop-color="#0a1712"/><stop offset="1.000" stop-color="#091712"/></linearGradient><linearGradient id="r183" x1="0" x2="960" y1="0" y2="0" gradientUnits="userSpaceOnUse"><stop offset="0.000" stop-color="#030300"/><stop offset="0.125" stop-color="#040401"/><stop offset="0.250" stop-color="#060602"/><stop offset="0.375" stop-color="#080a03"/><stop offset="0.500" stop-color="#0a0d04"/><stop offset="0.625" stop-color="#0c1106"/><stop offset="0.750" stop-color="#0b1309"/><stop offset="0.875" stop-color="#091410"/><stop offset="1.000" stop-color="#09140f"/></linearGradient><linearGradient id="r184" x1="0" x2="960" y1="0" y2="0" gradientUnits="userSpaceOnUse"><stop offset="0.000" stop-color="#020200"/><stop offset="0.125" stop-color="#040301"/><stop offset="0.250" stop-color="#050602"/><stop offset="0.375" stop-color="#070903"/><stop offset="0.500" stop-color="#090b04"/><stop offset="0.625" stop-color="#0b0f06"/><stop offset="0.750" stop-color="#0a1108"/><stop offset="0.875" stop-color="#08110d"/><stop offset="1.000" stop-color="#08110d"/></linearGradient><linearGradient id="r185" x1="0" x2="960" y1="0" y2="0" gradientUnits="userSpaceOnUse"><stop offset="0.000" stop-color="#020200"/><stop offset="0.125" stop-color="#030301"/><stop offset="0.250" stop-color="#040502"/><stop offset="0.375" stop-color="#060803"/><stop offset="0.500" stop-color="#080a04"/><stop offset="0.625" stop-color="#0a0e06"/><stop offset="0.750" stop-color="#0a1008"/><stop offset="0.875" stop-color="#08100c"/><stop offset="1.000" stop-color="#08100c"/></linearGradient><linearGradient id="r186" x1="0" x2="960" y1="0" y2="0" gradientUnits="userSpaceOnUse"><stop offset="0.000" stop-color="#020200"/><stop offset="0.125" stop-color="#030301"/><stop offset="0.250" stop-color="#040502"/><stop offset="0.375" stop-color="#060803"/><stop offset="0.500" stop-color="#080904"/><stop offset="0.625" stop-color="#090d06"/><stop offset="0.750" stop-color="#090f08"/><stop offset="0.875" stop-color="#080f0b"/><stop offset="1.000" stop-color="#080f0b"/></linearGradient><linearGradient id="r187" x1="0" x2="960" y1="0" y2="0" gradientUnits="userSpaceOnUse"><stop offset="0.000" stop-color="#020200"/><stop offset="0.125" stop-color="#020201"/><stop offset="0.250" stop-color="#040402"/><stop offset="0.375" stop-color="#050703"/><stop offset="0.500" stop-color="#070904"/><stop offset="0.625" stop-color="#090d06"/><stop offset="0.750" stop-color="#090e07"/><stop offset="0.875" stop-color="#070e0b"/><stop offset="1.000" stop-color="#070e0b"/></linearGradient><linearGradient id="r188" x1="0" x2="960" y1="0" y2="0" gradientUnits="userSpaceOnUse"><stop offset="0.000" stop-color="#020200"/><stop offset="0.125" stop-color="#020201"/><stop offset="0.250" stop-color="#030402"/><stop offset="0.375" stop-color="#050703"/><stop offset="0.500" stop-color="#070904"/><stop offset="0.625" stop-color="#090c06"/><stop offset="0.750" stop-color="#090e07"/><stop offset="0.875" stop-color="#070d0a"/><stop offset="1.000" stop-color="#070d0a"/></linearGradient><linearGradient id="r189" x1="0" x2="960" y1="0" y2="0" gradientUnits="userSpaceOnUse"><stop offset="0.000" stop-color="#010100"/><stop offset="0.125" stop-color="#020201"/><stop offset="0.250" stop-color="#030401"/><stop offset="0.375" stop-color="#050603"/><stop offset="0.500" stop-color="#060803"/><stop offset="0.625" stop-color="#080c05"/><stop offset="0.750" stop-color="#080d07"/><stop offset="0.875" stop-color="#060d0a"/><stop offset="1.000" stop-color="#060d0a"/></linearGradient><linearGradient id="r190" x1="0" x2="960" y1="0" y2="0" gradientUnits="userSpaceOnUse"><stop offset="0.000" stop-color="#010100"/><stop offset="0.125" stop-color="#020201"/><stop offset="0.250" stop-color="#030401"/><stop offset="0.375" stop-color="#050603"/><stop offset="0.500" stop-color="#060803"/><stop offset="0.625" stop-color="#080b05"/><stop offset="0.750" stop-color="#080c07"/><stop offset="0.875" stop-color="#060c09"/><stop offset="1.000" stop-color="#060c09"/></linearGradient><linearGradient id="r191" x1="0" x2="960" y1="0" y2="0" gradientUnits="userSpaceOnUse"><stop offset="0.000" stop-color="#010100"/><stop offset="0.125" stop-color="#020201"/><stop offset="0.250" stop-color="#030301"/><stop offset="0.375" stop-color="#040603"/><stop offset="0.500" stop-color="#060703"/><stop offset="0.625" stop-color="#070b05"/><stop offset="0.750" stop-color="#070c06"/><stop offset="0.875" stop-color="#060b09"/><stop offset="1.000" stop-color="#060b09"/></linearGradient><linearGradient id="r192" x1="0" x2="960" y1="0" y2="0" gradientUnits="userSpaceOnUse"><stop offset="0.000" stop-color="#010100"/><stop offset="0.125" stop-color="#020200"/><stop offset="0.250" stop-color="#020301"/><stop offset="0.375" stop-color="#040602"/><stop offset="0.500" stop-color="#060703"/><stop offset="0.625" stop-color="#070a05"/><stop offset="0.750" stop-color="#070b06"/><stop offset="0.875" stop-color="#060a08"/><stop offset="1.000" stop-color="#060a08"/></linearGradient><linearGradient id="r193" x1="0" x2="960" y1="0" y2="0" gradientUnits="userSpaceOnUse"><stop offset="0.000" stop-color="#010100"/><stop offset="0.125" stop-color="#010100"/><stop offset="0.250" stop-color="#020301"/><stop offset="0.375" stop-color="#040502"/><stop offset="0.500" stop-color="#050703"/><stop offset="0.625" stop-color="#070905"/><stop offset="0.750" stop-color="#070a06"/><stop offset="0.875" stop-color="#050a07"/><stop offset="1.000" stop-color="#050a07"/></linearGradient><linearGradient id="r194" x1="0" x2="960" y1="0" y2="0" gradientUnits="userSpaceOnUse"><stop offset="0.000" stop-color="#010100"/><stop offset="0.125" stop-color="#010100"/><stop offset="0.250" stop-color="#020201"/><stop offset="0.375" stop-color="#030502"/><stop offset="0.500" stop-color="#050603"/><stop offset="0.625" stop-color="#060905"/><stop offset="0.750" stop-color="#060a05"/><stop offset="0.875" stop-color="#050907"/><stop offset="1.000" stop-color="#050907"/></linearGradient><linearGradient id="r195" x1="0" x2="960" y1="0" y2="0" gradientUnits="userSpaceOnUse"><stop offset="0.000" stop-color="#010100"/><stop offset="0.125" stop-color="#010100"/><stop offset="0.250" stop-color="#020201"/><stop offset="0.375" stop-color="#030402"/><stop offset="0.500" stop-color="#040603"/><stop offset="0.625" stop-color="#060805"/><stop offset="0.750" stop-color="#060905"/><stop offset="0.875" stop-color="#040806"/><stop offset="1.000" stop-color="#040806"/></linearGradient><linearGradient id="r196" x1="0" x2="960" y1="0" y2="0" gradientUnits="userSpaceOnUse"><stop offset="0.000" stop-color="#000000"/><stop offset="0.125" stop-color="#010100"/><stop offset="0.250" stop-color="#020200"/><stop offset="0.375" stop-color="#030402"/><stop offset="0.500" stop-color="#040502"/><stop offset="0.625" stop-color="#050804"/><stop offset="0.750" stop-color="#050805"/><stop offset="0.875" stop-color="#040806"/><stop offset="1.000" stop-color="#040806"/></linearGradient><linearGradient id="r197" x1="0" x2="960" y1="0" y2="0" gradientUnits="userSpaceOnUse"><stop offset="0.000" stop-color="#000000"/><stop offset="0.125" stop-color="#000000"/><stop offset="0.250" stop-color="#020200"/><stop offset="0.375" stop-color="#030402"/><stop offset="0.500" stop-color="#040502"/><stop offset="0.625" stop-color="#050704"/><stop offset="0.750" stop-color="#050805"/><stop offset="0.875" stop-color="#040705"/><stop offset="1.000" stop-color="#040705"/></linearGradient><linearGradient id="r198" x1="0" x2="960" y1="0" y2="0" gradientUnits="userSpaceOnUse"><stop offset="0.000" stop-color="#000000"/><stop offset="0.125" stop-color="#000000"/><stop offset="0.250" stop-color="#010100"/><stop offset="0.375" stop-color="#020402"/><stop offset="0.500" stop-color="#040502"/><stop offset="0.625" stop-color="#050704"/><stop offset="0.750" stop-color="#050704"/><stop offset="0.875" stop-color="#040605"/><stop offset="1.000" stop-color="#040605"/></linearGradient><linearGradient id="r199" x1="0" x2="960" y1="0" y2="0" gradientUnits="userSpaceOnUse"><stop offset="0.000" stop-color="#000000"/><stop offset="0.125" stop-color="#000000"/><stop offset="0.250" stop-color="#010100"/><stop offset="0.375" stop-color="#020302"/><stop offset="0.500" stop-color="#030402"/><stop offset="0.625" stop-color="#040604"/><stop offset="0.750" stop-color="#040604"/><stop offset="0.875" stop-color="#030504"/><stop offset="1.000" stop-color="#030504"/></linearGradient><linearGradient id="r200" x1="0" x2="960" y1="0" y2="0" gradientUnits="userSpaceOnUse"><stop offset="0.000" stop-color="#000000"/><stop offset="0.125" stop-color="#000000"/><stop offset="0.250" stop-color="#010100"/><stop offset="0.375" stop-color="#020302"/><stop offset="0.500" stop-color="#030402"/><stop offset="0.625" stop-color="#040604"/><stop offset="0.750" stop-color="#040604"/><stop offset="0.875" stop-color="#030504"/><stop offset="1.000" stop-color="#030504"/></linearGradient><linearGradient id="r201" x1="0" x2="960" y1="0" y2="0" gradientUnits="userSpaceOnUse"><stop offset="0.000" stop-color="#000000"/><stop offset="0.125" stop-color="#000000"/><stop offset="0.250" stop-color="#010100"/><stop offset="0.375" stop-color="#020302"/><stop offset="0.500" stop-color="#030402"/><stop offset="0.625" stop-color="#040604"/><stop offset="0.750" stop-color="#040604"/><stop offset="0.875" stop-color="#030504"/><stop offset="1.000" stop-color="#030504"/></linearGradient><linearGradient id="r202" x1="0" x2="960" y1="0" y2="0" gradientUnits="userSpaceOnUse"><stop offset="0.000" stop-color="#000000"/><stop offset="0.125" stop-color="#000000"/><stop offset="0.250" stop-color="#010100"/><stop offset="0.375" stop-color="#020302"/><stop offset="0.500" stop-color="#030402"/><stop offset="0.625" stop-color="#040504"/><stop offset="0.750" stop-color="#040504"/><stop offset="0.875" stop-color="#030404"/><stop offset="1.000" stop-color="#030404"/></linearGradient><linearGradient id="r203" x1="0" x2="960" y1="0" y2="0" gradientUnits="userSpaceOnUse"><stop offset="0.000" stop-color="#000000"/><stop offset="0.125" stop-color="#000000"/><stop offset="0.250" stop-color="#010100"/><stop offset="0.375" stop-color="#020302"/><stop offset="0.500" stop-color="#030302"/><stop offset="0.625" stop-color="#030503"/><stop offset="0.750" stop-color="#030503"/><stop offset="0.875" stop-color="#030403"/><stop offset="1.000" stop-color="#030403"/></linearGradient><linearGradient id="r204" x1="0" x2="960" y1="0" y2="0" gradientUnits="userSpaceOnUse"><stop offset="0.000" stop-color="#000000"/><stop offset="0.125" stop-color="#000000"/><stop offset="0.250" stop-color="#010100"/><stop offset="0.375" stop-color="#020202"/><stop offset="0.500" stop-color="#020302"/><stop offset="0.625" stop-color="#030503"/><stop offset="0.750" stop-color="#030503"/><stop offset="0.875" stop-color="#020403"/><stop offset="1.000" stop-color="#020403"/></linearGradient><linearGradient id="r205" x1="0" x2="960" y1="0" y2="0" gradientUnits="userSpaceOnUse"><stop offset="0.000" stop-color="#000000"/><stop offset="0.125" stop-color="#000000"/><stop offset="0.250" stop-color="#010100"/><stop offset="0.375" stop-color="#020202"/><stop offset="0.500" stop-color="#020302"/><stop offset="0.625" stop-color="#030503"/><stop offset="0.750" stop-color="#030503"/><stop offset="0.875" stop-color="#020403"/><stop offset="1.000" stop-color="#020403"/></linearGradient><linearGradient id="r206" x1="0" x2="960" y1="0" y2="0" gradientUnits="userSpaceOnUse"><stop offset="0.000" stop-color="#000000"/><stop offset="0.125" stop-color="#000000"/><stop offset="0.250" stop-color="#010100"/><stop offset="0.375" stop-color="#010201"/><stop offset="0.500" stop-color="#020301"/><stop offset="0.625" stop-color="#030403"/><stop offset="0.750" stop-color="#030403"/><stop offset="0.875" stop-color="#020403"/><stop offset="1.000" stop-color="#020403"/></linearGradient><linearGradient id="r207" x1="0" x2="960" y1="0" y2="0" gradientUnits="userSpaceOnUse"><stop offset="0.000" stop-color="#000000"/><stop offset="0.125" stop-color="#000000"/><stop offset="0.250" stop-color="#010100"/><stop offset="0.375" stop-color="#010201"/><stop offset="0.500" stop-color="#020301"/><stop offset="0.625" stop-color="#030403"/><stop offset="0.750" stop-color="#030403"/><stop offset="0.875" stop-color="#020403"/><stop offset="1.000" stop-color="#020403"/></linearGradient><linearGradient id="r208" x1="0" x2="960" y1="0" y2="0" gradientUnits="userSpaceOnUse"><stop offset="0.000" stop-color="#000000"/><stop offset="0.125" stop-color="#000000"/><stop offset="0.250" stop-color="#010100"/><stop offset="0.375" stop-color="#010201"/><stop offset="0.500" stop-color="#020301"/><stop offset="0.625" stop-color="#030403"/><stop offset="0.750" stop-color="#030403"/><stop offset="0.875" stop-color="#020303"/><stop offset="1.000" stop-color="#020303"/></linearGradient><linearGradient id="r209" x1="0" x2="960" y1="0" y2="0" gradientUnits="userSpaceOnUse"><stop offset="0.000" stop-color="#000000"/><stop offset="0.125" stop-color="#000000"/><stop offset="0.250" stop-color="#010100"/><stop offset="0.375" stop-color="#010201"/><stop offset="0.500" stop-color="#020201"/><stop offset="0.625" stop-color="#020402"/><stop offset="0.750" stop-color="#020402"/><stop offset="0.875" stop-color="#020302"/><stop offset="1.000" stop-color="#020302"/></linearGradient><linearGradient id="r210" x1="0" x2="960" y1="0" y2="0" gradientUnits="userSpaceOnUse"><stop offset="0.000" stop-color="#000000"/><stop offset="0.125" stop-color="#000000"/><stop offset="0.250" stop-color="#010100"/><stop offset="0.375" stop-color="#010201"/><stop offset="0.500" stop-color="#020201"/><stop offset="0.625" stop-color="#020302"/><stop offset="0.750" stop-color="#020302"/><stop offset="0.875" stop-color="#020302"/><stop offset="1.000" stop-color="#020302"/></linearGradient><linearGradient id="r211" x1="0" x2="960" y1="0" y2="0" gradientUnits="userSpaceOnUse"><stop offset="0.000" stop-color="#000000"/><stop offset="0.125" stop-color="#000000"/><stop offset="0.250" stop-color="#010100"/><stop offset="0.375" stop-color="#010201"/><stop offset="0.500" stop-color="#020201"/><stop offset="0.625" stop-color="#020302"/><stop offset="0.750" stop-color="#020302"/><stop offset="0.875" stop-color="#020302"/><stop offset="1.000" stop-color="#020302"/></linearGradient><linearGradient id="r212" x1="0" x2="960" y1="0" y2="0" gradientUnits="userSpaceOnUse"><stop offset="0.000" stop-color="#000000"/><stop offset="0.125" stop-color="#000000"/><stop offset="0.250" stop-color="#000000"/><stop offset="0.375" stop-color="#010201"/><stop offset="0.500" stop-color="#020201"/><stop offset="0.625" stop-color="#020302"/><stop offset="0.750" stop-color="#020302"/><stop offset="0.875" stop-color="#020202"/><stop offset="1.000" stop-color="#020202"/></linearGradient><linearGradient id="r213" x1="0" x2="960" y1="0" y2="0" gradientUnits="userSpaceOnUse"><stop offset="0.000" stop-color="#000000"/><stop offset="0.125" stop-color="#000000"/><stop offset="0.250" stop-color="#000000"/><stop offset="0.375" stop-color="#010101"/><stop offset="0.500" stop-color="#010201"/><stop offset="0.625" stop-color="#020302"/><stop offset="0.750" stop-color="#020302"/><stop offset="0.875" stop-color="#010202"/><stop offset="1.000" stop-color="#010202"/></linearGradient><linearGradient id="r214" x1="0" x2="960" y1="0" y2="0" gradientUnits="userSpaceOnUse"><stop offset="0.000" stop-color="#000000"/><stop offset="0.125" stop-color="#000000"/><stop offset="0.250" stop-color="#000000"/><stop offset="0.375" stop-color="#010101"/><stop offset="0.500" stop-color="#010201"/><stop offset="0.625" stop-color="#020302"/><stop offset="0.750" stop-color="#020302"/><stop offset="0.875" stop-color="#010202"/><stop offset="1.000" stop-color="#010202"/></linearGradient><linearGradient id="r215" x1="0" x2="960" y1="0" y2="0" gradientUnits="userSpaceOnUse"><stop offset="0.000" stop-color="#000000"/><stop offset="0.125" stop-color="#000000"/><stop offset="0.250" stop-color="#000000"/><stop offset="0.375" stop-color="#010101"/><stop offset="0.500" stop-color="#010201"/><stop offset="0.625" stop-color="#020202"/><stop offset="0.750" stop-color="#020202"/><stop offset="0.875" stop-color="#010202"/><stop offset="1.000" stop-color="#010202"/></linearGradient><linearGradient id="r216" x1="0" x2="960" y1="0" y2="0" gradientUnits="userSpaceOnUse"><stop offset="0.000" stop-color="#000000"/><stop offset="0.125" stop-color="#000000"/><stop offset="0.250" stop-color="#000000"/><stop offset="0.375" stop-color="#010101"/><stop offset="0.500" stop-color="#010101"/><stop offset="0.625" stop-color="#010201"/><stop offset="0.750" stop-color="#010201"/><stop offset="0.875" stop-color="#010201"/><stop offset="1.000" stop-color="#010201"/></linearGradient><linearGradient id="r217" x1="0" x2="960" y1="0" y2="0" gradientUnits="userSpaceOnUse"><stop offset="0.000" stop-color="#000000"/><stop offset="0.125" stop-color="#000000"/><stop offset="0.250" stop-color="#000000"/><stop offset="0.375" stop-color="#010101"/><stop offset="0.500" stop-color="#010101"/><stop offset="0.625" stop-color="#010201"/><stop offset="0.750" stop-color="#010201"/><stop offset="0.875" stop-color="#010201"/><stop offset="1.000" stop-color="#010201"/></linearGradient><linearGradient id="r218" x1="0" x2="960" y1="0" y2="0" gradientUnits="userSpaceOnUse"><stop offset="0.000" stop-color="#000000"/><stop offset="0.125" stop-color="#000000"/><stop offset="0.250" stop-color="#000000"/><stop offset="0.375" stop-color="#010101"/><stop offset="0.500" stop-color="#010101"/><stop offset="0.625" stop-color="#010201"/><stop offset="0.750" stop-color="#010201"/><stop offset="0.875" stop-color="#010101"/><stop offset="1.000" stop-color="#010101"/></linearGradient><linearGradient id="r219" x1="0" x2="960" y1="0" y2="0" gradientUnits="userSpaceOnUse"><stop offset="0.000" stop-color="#000000"/><stop offset="0.125" stop-color="#000000"/><stop offset="0.250" stop-color="#000000"/><stop offset="0.375" stop-color="#000100"/><stop offset="0.500" stop-color="#010100"/><stop offset="0.625" stop-color="#010101"/><stop offset="0.750" stop-color="#010101"/><stop offset="0.875" stop-color="#010101"/><stop offset="1.000" stop-color="#010101"/></linearGradient><linearGradient id="r220" x1="0" x2="960" y1="0" y2="0" gradientUnits="userSpaceOnUse"><stop offset="0.000" stop-color="#000000"/><stop offset="0.125" stop-color="#000000"/><stop offset="0.250" stop-color="#000000"/><stop offset="0.375" stop-color="#000100"/><stop offset="0.500" stop-color="#010100"/><stop offset="0.625" stop-color="#010101"/><stop offset="0.750" stop-color="#010101"/><stop offset="0.875" stop-color="#010101"/><stop offset="1.000" stop-color="#010101"/></linearGradient><linearGradient id="r221" x1="0" x2="960" y1="0" y2="0" gradientUnits="userSpaceOnUse"><stop offset="0.000" stop-color="#000000"/><stop offset="0.125" stop-color="#000000"/><stop offset="0.250" stop-color="#000000"/><stop offset="0.375" stop-color="#000000"/><stop offset="0.500" stop-color="#000100"/><stop offset="0.625" stop-color="#010101"/><stop offset="0.750" stop-color="#010101"/><stop offset="0.875" stop-color="#000101"/><stop offset="1.000" stop-color="#000101"/></linearGradient><linearGradient id="r222" x1="0" x2="960" y1="0" y2="0" gradientUnits="userSpaceOnUse"><stop offset="0.000" stop-color="#000000"/><stop offset="0.125" stop-color="#000000"/><stop offset="0.250" stop-color="#000000"/><stop offset="0.375" stop-color="#000000"/><stop offset="0.500" stop-color="#000000"/><stop offset="0.625" stop-color="#000100"/><stop offset="0.750" stop-color="#000100"/><stop offset="0.875" stop-color="#000000"/><stop offset="1.000" stop-color="#000000"/></linearGradient><linearGradient id="r223" x1="0" x2="960" y1="0" y2="0" gradientUnits="userSpaceOnUse"><stop offset="0.000" stop-color="#000000"/><stop offset="0.125" stop-color="#000000"/><stop offset="0.250" stop-color="#000000"/><stop offset="0.375" stop-color="#000000"/><stop offset="0.500" stop-color="#000000"/><stop offset="0.625" stop-color="#000000"/><stop offset="0.750" stop-color="#000000"/><stop offset="0.875" stop-color="#000000"/><stop offset="1.000" stop-color="#000000"/></linearGradient><linearGradient id="r224" x1="0" x2="960" y1="0" y2="0" gradientUnits="userSpaceOnUse"><stop offset="0.000" stop-color="#000000"/><stop offset="0.125" stop-color="#000000"/><stop offset="0.250" stop-color="#000000"/><stop offset="0.375" stop-color="#000000"/><stop offset="0.500" stop-color="#000000"/><stop offset="0.625" stop-color="#000000"/><stop offset="0.750" stop-color="#000000"/><stop offset="0.875" stop-color="#000000"/><stop offset="1.000" stop-color="#000000"/></linearGradient><rect y="0" width="960" height="5" fill="url(#r0)"/><rect y="4" width="960" height="5" fill="url(#r1)"/><rect y="8" width="960" height="5" fill="url(#r2)"/><rect y="12" width="960" height="5" fill="url(#r3)"/><rect y="16" width="960" height="5" fill="url(#r4)"/><rect y="20" width="960" height="5" fill="url(#r5)"/><rect y="24" width="960" height="5" fill="url(#r6)"/><rect y="28" width="960" height="5" fill="url(#r7)"/><rect y="32" width="960" height="5" fill="url(#r8)"/><rect y="36" width="960" height="5" fill="url(#r9)"/><rect y="40" width="960" height="5" fill="url(#r10)"/><rect y="44" width="960" height="5" fill="url(#r11)"/><rect y="48" width="960" height="5" fill="url(#r12)"/><rect y="52" width="960" height="5" fill="url(#r13)"/><rect y="56" width="960" height="5" fill="url(#r14)"/><rect y="60" width="960" height="5" fill="url(#r15)"/><rect y="64" width="960" height="5" fill="url(#r16)"/><rect y="68" width="960" height="5" fill="url(#r17)"/><rect y="72" width="960" height="5" fill="url(#r18)"/><rect y="76" width="960" height="5" fill="url(#r19)"/><rect y="80" width="960" height="5" fill="url(#r20)"/><rect y="84" width="960" height="5" fill="url(#r21)"/><rect y="88" width="960" height="5" fill="url(#r22)"/><rect y="92" width="960" height="5" fill="url(#r23)"/><rect y="96" width="960" height="5" fill="url(#r24)"/><rect y="100" width="960" height="5" fill="url(#r25)"/><rect y="104" width="960" height="5" fill="url(#r26)"/><rect y="108" width="960" height="5" fill="url(#r27)"/><rect y="112" width="960" height="5" fill="url(#r28)"/><rect y="116" width="960" height="5" fill="url(#r29)"/><rect y="120" width="960" height="5" fill="url(#r30)"/><rect y="124" width="960" height="5" fill="url(#r31)"/><rect y="128" width="960" height="5" fill="url(#r32)"/><rect y="132" width="960" height="5" fill="url(#r33)"/><rect y="136" width="960" height="5" fill="url(#r34)"/><rect y="140" width="960" height="5" fill="url(#r35)"/><rect y="144" width="960" height="5" fill="url(#r36)"/><rect y="148" width="960" height="5" fill="url(#r37)"/><rect y="152" width="960" height="5" fill="url(#r38)"/><rect y="156" width="960" height="5" fill="url(#r39)"/><rect y="160" width="960" height="5" fill="url(#r40)"/><rect y="164" width="960" height="5" fill="url(#r41)"/><rect y="168" width="960" height="5" fill="url(#r42)"/><rect y="172" width="960" height="5" fill="url(#r43)"/><rect y="176" width="960" height="5" fill="url(#r44)"/><rect y="180" width="960" height="5" fill="url(#r45)"/><rect y="184" width="960" height="5" fill="url(#r46)"/><rect y="188" width="960" height="5" fill="url(#r47)"/><rect y="192" width="960" height="5" fill="url(#r48)"/><rect y="196" width="960" height="5" fill="url(#r49)"/><rect y="200" width="960" height="5" fill="url(#r50)"/><rect y="204" width="960" height="5" fill="url(#r51)"/><rect y="208" width="960" height="5" fill="url(#r52)"/><rect y="212" width="960" height="5" fill="url(#r53)"/><rect y="216" width="960" height="5" fill="url(#r54)"/><rect y="220" width="960" height="5" fill="url(#r55)"/><rect y="224" width="960" height="5" fill="url(#r56)"/><rect y="228" width="960" height="5" fill="url(#r57)"/><rect y="232" width="960" height="5" fill="url(#r58)"/><rect y="236" width="960" height="5" fill="url(#r59)"/><rect y="240" width="960" height="5" fill="url(#r60)"/><rect y="244" width="960" height="5" fill="url(#r61)"/><rect y="248" width="960" height="5" fill="url(#r62)"/><rect y="252" width="960" height="5" fill="url(#r63)"/><rect y="256" width="960" height="5" fill="url(#r64)"/><rect y="260" width="960" height="5" fill="url(#r65)"/><rect y="264" width="960" height="5" fill="url(#r66)"/><rect y="268" width="960" height="5" fill="url(#r67)"/><rect y="272" width="960" height="5" fill="url(#r68)"/><rect y="276" width="960" height="5" fill="url(#r69)"/><rect y="280" width="960" height="5" fill="url(#r70)"/><rect y="284" width="960" height="5" fill="url(#r71)"/><rect y="288" width="960" height="5" fill="url(#r72)"/><rect y="292" width="960" height="5" fill="url(#r73)"/><rect y="296" width="960" height="5" fill="url(#r74)"/><rect y="300" width="960" height="5" fill="url(#r75)"/><rect y="304" width="960" height="5" fill="url(#r76)"/><rect y="308" width="960" height="5" fill="url(#r77)"/><rect y="312" width="960" height="5" fill="url(#r78)"/><rect y="316" width="960" height="5" fill="url(#r79)"/><rect y="320" width="960" height="5" fill="url(#r80)"/><rect y="324" width="960" height="5" fill="url(#r81)"/><rect y="328" width="960" height="5" fill="url(#r82)"/><rect y="332" width="960" height="5" fill="url(#r83)"/><rect y="336" width="960" height="5" fill="url(#r84)"/><rect y="340" width="960" height="5" fill="url(#r85)"/><rect y="344" width="960" height="5" fill="url(#r86)"/><rect y="348" width="960" height="5" fill="url(#r87)"/><rect y="352" width="960" height="5" fill="url(#r88)"/><rect y="356" width="960" height="5" fill="url(#r89)"/><rect y="360" width="960" height="5" fill="url(#r90)"/><rect y="364" width="960" height="5" fill="url(#r91)"/><rect y="368" width="960" height="5" fill="url(#r92)"/><rect y="372" width="960" height="5" fill="url(#r93)"/><rect y="376" width="960" height="5" fill="url(#r94)"/><rect y="380" width="960" height="5" fill="url(#r95)"/><rect y="384" width="960" height="5" fill="url(#r96)"/><rect y="388" width="960" height="5" fill="url(#r97)"/><rect y="392" width="960" height="5" fill="url(#r98)"/><rect y="396" width="960" height="5" fill="url(#r99)"/><rect y="400" width="960" height="5" fill="url(#r100)"/><rect y="404" width="960" height="5" fill="url(#r101)"/><rect y="408" width="960" height="5" fill="url(#r102)"/><rect y="412" width="960" height="5" fill="url(#r103)"/><rect y="416" width="960" height="5" fill="url(#r104)"/><rect y="420" width="960" height="5" fill="url(#r105)"/><rect y="424" width="960" height="5" fill="url(#r106)"/><rect y="428" width="960" height="5" fill="url(#r107)"/><rect y="432" width="960" height="5" fill="url(#r108)"/><rect y="436" width="960" height="5" fill="url(#r109)"/><rect y="440" width="960" height="5" fill="url(#r110)"/><rect y="444" width="960" height="5" fill="url(#r111)"/><rect y="448" width="960" height="5" fill="url(#r112)"/><rect y="452" width="960" height="5" fill="url(#r113)"/><rect y="456" width="960" height="5" fill="url(#r114)"/><rect y="460" width="960" height="5" fill="url(#r115)"/><rect y="464" width="960" height="5" fill="url(#r116)"/><rect y="468" width="960" height="5" fill="url(#r117)"/><rect y="472" width="960" height="5" fill="url(#r118)"/><rect y="476" width="960" height="5" fill="url(#r119)"/><rect y="480" width="960" height="5" fill="url(#r120)"/><rect y="484" width="960" height="5" fill="url(#r121)"/><rect y="488" width="960" height="5" fill="url(#r122)"/><rect y="492" width="960" height="5" fill="url(#r123)"/><rect y="496" width="960" height="5" fill="url(#r124)"/><rect y="500" width="960" height="5" fill="url(#r125)"/><rect y="504" width="960" height="5" fill="url(#r126)"/><rect y="508" width="960" height="5" fill="url(#r127)"/><rect y="512" width="960" height="5" fill="url(#r128)"/><rect y="516" width="960" height="5" fill="url(#r129)"/><rect y="520" width="960" height="5" fill="url(#r130)"/><rect y="524" width="960" height="5" fill="url(#r131)"/><rect y="528" width="960" height="5" fill="url(#r132)"/><rect y="532" width="960" height="5" fill="url(#r133)"/><rect y="536" width="960" height="5" fill="url(#r134)"/><rect y="540" width="960" height="5" fill="url(#r135)"/><rect y="544" width="960" height="5" fill="url(#r136)"/><rect y="548" width="960" height="5" fill="url(#r137)"/><rect y="552" width="960" height="5" fill="url(#r138)"/><rect y="556" width="960" height="5" fill="url(#r139)"/><rect y="560" width="960" height="5" fill="url(#r140)"/><rect y="564" width="960" height="5" fill="url(#r141)"/><rect y="568" width="960" height="5" fill="url(#r142)"/><rect y="572" width="960" height="5" fill="url(#r143)"/><rect y="576" width="960" height="5" fill="url(#r144)"/><rect y="580" width="960" height="5" fill="url(#r145)"/><rect y="584" width="960" height="5" fill="url(#r146)"/><rect y="588" width="960" height="5" fill="url(#r147)"/><rect y="592" width="960" height="5" fill="url(#r148)"/><rect y="596" width="960" height="5" fill="url(#r149)"/><rect y="600" width="960" height="5" fill="url(#r150)"/><rect y="604" width="960" height="5" fill="url(#r151)"/><rect y="608" width="960" height="5" fill="url(#r152)"/><rect y="612" width="960" height="5" fill="url(#r153)"/><rect y="616" width="960" height="5" fill="url(#r154)"/><rect y="620" width="960" height="5" fill="url(#r155)"/><rect y="624" width="960" height="5" fill="url(#r156)"/><rect y="628" width="960" height="5" fill="url(#r157)"/><rect y="632" width="960" height="5" fill="url(#r158)"/><rect y="636" width="960" height="5" fill="url(#r159)"/><rect y="640" width="960" height="5" fill="url(#r160)"/><rect y="644" width="960" height="5" fill="url(#r161)"/><rect y="648" width="960" height="5" fill="url(#r162)"/><rect y="652" width="960" height="5" fill="url(#r163)"/><rect y="656" width="960" height="5" fill="url(#r164)"/><rect y="660" width="960" height="5" fill="url(#r165)"/><rect y="664" width="960" height="5" fill="url(#r166)"/><rect y="668" width="960" height="5" fill="url(#r167)"/><rect y="672" width="960" height="5" fill="url(#r168)"/><rect y="676" width="960" height="5" fill="url(#r169)"/><rect y="680" width="960" height="5" fill="url(#r170)"/><rect y="684" width="960" height="5" fill="url(#r171)"/><rect y="688" width="960" height="5" fill="url(#r172)"/><rect y="692" width="960" height="5" fill="url(#r173)"/><rect y="696" width="960" height="5" fill="url(#r174)"/><rect y="700" width="960" height="5" fill="url(#r175)"/><rect y="704" width="960" height="5" fill="url(#r176)"/><rect y="708" width="960" height="5" fill="url(#r177)"/><rect y="712" width="960" height="5" fill="url(#r178)"/><rect y="716" width="960" height="5" fill="url(#r179)"/><rect y="720" width="960" height="5" fill="url(#r180)"/><rect y="724" width="960" height="5" fill="url(#r181)"/><rect y="728" width="960" height="5" fill="url(#r182)"/><rect y="732" width="960" height="5" fill="url(#r183)"/><rect y="736" width="960" height="5" fill="url(#r184)"/><rect y="740" width="960" height="5" fill="url(#r185)"/><rect y="744" width="960" height="5" fill="url(#r186)"/><rect y="748" width="960" height="5" fill="url(#r187)"/><rect y="752" width="960" height="5" fill="url(#r188)"/><rect y="756" width="960" height="5" fill="url(#r189)"/><rect y="760" width="960" height="5" fill="url(#r190)"/><rect y="764" width="960" height="5" fill="url(#r191)"/><rect y="768" width="960" height="5" fill="url(#r192)"/><rect y="772" width="960" height="5" fill="url(#r193)"/><rect y="776" width="960" height="5" fill="url(#r194)"/><rect y="780" width="960" height="5" fill="url(#r195)"/><rect y="784" width="960" height="5" fill="url(#r196)"/><rect y="788" width="960" height="5" fill="url(#r197)"/><rect y="792" width="960" height="5" fill="url(#r198)"/><rect y="796" width="960" height="5" fill="url(#r199)"/><rect y="800" width="960" height="5" fill="url(#r200)"/><rect y="804" width="960" height="5" fill="url(#r201)"/><rect y="808" width="960" height="5" fill="url(#r202)"/><rect y="812" width="960" height="5" fill="url(#r203)"/><rect y="816" width="960" height="5" fill="url(#r204)"/><rect y="820" width="960" height="5" fill="url(#r205)"/><rect y="824" width="960" height="5" fill="url(#r206)"/><rect y="828" width="960" height="5" fill="url(#r207)"/><rect y="832" width="960" height="5" fill="url(#r208)"/><rect y="836" width="960" height="5" fill="url(#r209)"/><rect y="840" width="960" height="5" fill="url(#r210)"/><rect y="844" width="960" height="5" fill="url(#r211)"/><rect y="848" width="960" height="5" fill="url(#r212)"/><rect y="852" width="960" height="5" fill="url(#r213)"/><rect y="856" width="960" height="5" fill="url(#r214)"/><rect y="860" width="960" height="5" fill="url(#r215)"/><rect y="864" width="960" height="5" fill="url(#r216)"/><rect y="868" width="960" height="5" fill="url(#r217)"/><rect y="872" width="960" height="5" fill="url(#r218)"/><rect y="876" width="960" height="5" fill="url(#r219)"/><rect y="880" width="960" height="5" fill="url(#r220)"/><rect y="884" width="960" height="5" fill="url(#r221)"/><rect y="888" width="960" height="5" fill="url(#r222)"/><rect y="892" width="960" height="5" fill="url(#r223)"/><rect y="896" width="960" height="5" fill="url(#r224)"/><defs>
 <linearGradient id="bandg" x1="0" x2="960" y1="0" y2="0" gradientUnits="userSpaceOnUse">
  <stop offset="0" stop-color="#ffb070" stop-opacity="0.4"/>
  <stop offset="0.25" stop-color="#ffd080" stop-opacity="0.48"/>
  <stop offset="0.45" stop-color="#fff088" stop-opacity="0.56"/>
  <stop offset="0.56" stop-color="#ffffc0" stop-opacity="0.68"/>
  <stop offset="0.7" stop-color="#f4ffe8" stop-opacity="0.72"/>
  <stop offset="0.85" stop-color="#98ffff" stop-opacity="0.6"/>
  <stop offset="1" stop-color="#98ffff" stop-opacity="0.62"/>
 </linearGradient>
 <pattern id="stripes" width="3.5" height="3.5" patternUnits="userSpaceOnUse" patternTransform="rotate(-45)">
  <rect width="3.5" height="1.2" fill="#000" fill-opacity="0.03"/><rect y="1.75" width="3.5" height="0.9" fill="#fff" fill-opacity="0.018"/>
 </pattern>
 <filter id="blur4" x="-50%" y="-50%" width="200%" height="200%"><feGaussianBlur stdDeviation="4"/></filter>
 <filter id="blur1" x="-50%" y="-50%" width="200%" height="200%"><feGaussianBlur stdDeviation="0.8"/></filter>
 <filter id="blur2" x="-50%" y="-50%" width="200%" height="200%"><feGaussianBlur stdDeviation="1.5"/></filter>
 <filter id="blur12" x="-50%" y="-50%" width="200%" height="200%"><feGaussianBlur stdDeviation="12"/></filter>
 <radialGradient id="flare"><stop offset="0" stop-color="#fff" stop-opacity="1"/><stop offset="0.25" stop-color="#fffff0" stop-opacity="0.85"/><stop offset="0.55" stop-color="#f0ffc0" stop-opacity="0.35"/><stop offset="1" stop-color="#e0ff80" stop-opacity="0"/></radialGradient>
</defs>
<!-- staff bands -->
<g fill="url(#bandg)">
 <polygon points="0,315.4 960,366.3 960,384.4 0,344.8"/>
 <polygon points="0,366 960,396.6 960,414.8 0,393.3"/>
 <polygon points="0,408.4 960,426.5 960,445.4 0,434.7"/>
 <polygon points="0,451 960,449.8 960,467.6 0,478.3"/>
</g>
<!-- bokeh circles -->
<g filter="url(#blur2)">
 <ellipse cx="525" cy="440" rx="92" ry="88" fill="#fff8c0" fill-opacity="0.11"/>
 <ellipse cx="168" cy="303" rx="40" ry="32" fill="#ffc890" fill-opacity="0.16"/>
 <ellipse cx="195" cy="325" rx="23" ry="20" fill="#ffe8a0" fill-opacity="0.55"/>
 <ellipse cx="340" cy="365" rx="40" ry="34" fill="#fff0c0" fill-opacity="0.22"/>
 <ellipse cx="410" cy="385" rx="22" ry="20" fill="#fff0c0" fill-opacity="0.22"/>
 <ellipse cx="460" cy="332" rx="20" ry="18" fill="#fff0c0" fill-opacity="0.22"/>
 <ellipse cx="594" cy="322" rx="20" ry="18" fill="#f8ffd0" fill-opacity="0.25"/>
 <ellipse cx="155" cy="442" rx="38" ry="33" fill="#ffe070" fill-opacity="0.32"/>
 <ellipse cx="315" cy="463" rx="22" ry="20" fill="#fff0b0" fill-opacity="0.22"/>
 <ellipse cx="205" cy="365" rx="20" ry="18" fill="#ffe0b0" fill-opacity="0.2"/>
 <ellipse cx="94" cy="345" rx="24" ry="21" fill="#ffb850" fill-opacity="0.42"/>
 <ellipse cx="5" cy="355" rx="30" ry="32" fill="#ffa050" fill-opacity="0.34"/>
 <ellipse cx="395" cy="325" rx="28" ry="22" fill="#ffe8a0" fill-opacity="0.2"/>
 <ellipse cx="890" cy="400" rx="40" ry="40" fill="#c0ffff" fill-opacity="0.15"/>
</g>
<!-- beamed note -->
<g fill="#ff9c80" fill-opacity="0.17" filter="url(#blur1)">
 <rect x="114" y="214" width="6" height="112"/>
 <rect x="214" y="197" width="6" height="125"/>
 <polygon points="114,214 220,197 220,213 114,230"/>
 <polygon points="114,235 220,218 220,231 114,248"/>
</g>
<!-- natural sign -->
<g fill="#ffe060" fill-opacity="0.38" filter="url(#blur2)">
 <rect x="224" y="398" width="8" height="96"/>
 <rect x="258" y="437" width="8" height="87"/>
 <polygon points="224,436 266,432 266,447 224,451"/>
 <polygon points="224,478 266,474 266,490 224,494"/>
</g>
<!-- treble clef -->
<g transform="translate(47.6,442)" filter="url(#blur1)">
 <g fill="none" stroke="#f0c050" stroke-opacity="0.36" stroke-linecap="round">
  <path d="M25,1 C33,10 34,22 26,32 C14,44 2,54 2,70 C2,84 14,92 26,90 C40,88 46,76 40,64 C34,54 18,56 18,68 C18,74 22,78 26,78" stroke-width="4.5"/>
  <path d="M25,1 C20,6 17,16 22,30 L32,96 C34,108 26,112 20,109" stroke-width="3"/>
 </g>
 <circle cx="17" cy="103" r="6" fill="#f0c050" fill-opacity="0.36"/>
</g>
<!-- big note -->
<g filter="url(#blur4)">
 <ellipse cx="578" cy="622" rx="44" ry="34" transform="rotate(-20 578 622)" fill="#b0ff80" fill-opacity="0.26"/>
 <rect x="612" y="420" width="8" height="200" fill="#e0ffc0" fill-opacity="0.35"/>
 <path d="M618,425 C660,440 700,480 695,530 C690,570 670,590 660,610 C672,570 680,540 672,510 C662,470 640,455 618,445z" fill="#b8ff80" fill-opacity="0.45"/>
</g>
<ellipse cx="618" cy="440" rx="34" ry="46" fill="url(#flare)"/>
<polygon points="605,405 630,405 700,475 680,480" fill="#ffffff" fill-opacity="0.18" filter="url(#blur4)"/>
<!-- right side note -->
<g filter="url(#blur2)">
 <rect x="889" y="329" width="6" height="146" fill="#d0ffff" fill-opacity="0.55"/>
 <ellipse cx="865" cy="482" rx="32" ry="32" fill="#80ffc8" fill-opacity="0.42"/>
 <path d="M962,362 C935,385 930,440 940,480 C948,505 955,515 962,522" fill="none" stroke="#a0ffe8" stroke-opacity="0.6" stroke-width="10"/>
</g>
<!-- dots -->
<g fill="#ffb0c8" fill-opacity="0.2" filter="url(#blur1)">
 <circle cx="78" cy="52" r="2.5"/><circle cx="441" cy="58" r="2.5"/><circle cx="346" cy="189" r="2.5"/>
 <circle cx="346" cy="270" r="2.5"/><circle cx="519" cy="283" r="2.5"/><circle cx="264" cy="299" r="2.5"/>
 <circle cx="520" cy="323" r="2.5"/><circle cx="403" cy="510" r="2.5"/><circle cx="189" cy="597" r="2.5"/>
 <circle cx="857" cy="100" r="3.5" fill="#80d0ff" fill-opacity="0.5"/><circle cx="897" cy="265" r="3" fill="#a0e0ff" fill-opacity="0.4"/><circle cx="948" cy="614" r="2.5"/><circle cx="57" cy="238" r="2.5"/>
</g>
<!-- top dark edge -->

<rect x="0" y="0" width="960" height="900" fill="url(#stripes)"/>
</g>
</defs>
<use href="#tile" x="0" y="0"/>
<use href="#tile" x="0" y="900"/>
<use href="#tile" x="0" y="1800"/>
</svg>
<div id="topstrip" class="abs"></div>
<div id="topbar" class="abs">
<span class="t" style="left:9.6px;font-size:9px">Log in</span>
<div class="vsep" style="left:44px;top:4px;height:18px"></div>
<svg class="abs" style="left:54px;top:7px" width="13" height="11" viewBox="0 0 13 11"><path d="M0.5,1 H2.5 L4.3,7.2 H11 L12.3,2.6 H3.4" fill="none" stroke="#a8a8a8" stroke-width="1.3"/><path d="M3.6,2.6 H12 L10.8,6.4 H4.6z" fill="#a8a8a8"/><circle cx="5" cy="9.3" r="1.2" fill="#a8a8a8"/><circle cx="10.2" cy="9.3" r="1.2" fill="#a8a8a8"/></svg>
<span class="t" style="left:73px;font-size:9px">0 items</span>
<div class="vsep" style="left:111px;top:4px;height:18px"></div>
<div id="checkout" class="abs">Check out</div>
</div>
<svg class="abs" style="left:0;top:0" width="960" height="180"><text transform="scale(0.545,1)" x="207.34" y="76.40" font-size="44.5" font-weight="bold" fill="#fafafa" textLength="922.94" lengthAdjust="spacing" stroke="#fafafa" stroke-width="0.5">WELCOME TO STEVE'S MUSIC CENTER !</text><text transform="scale(0.6,1)" x="188.33" y="111.40" font-size="18.6" font-weight="bold" fill="#968e98" textLength="136.67" lengthAdjust="spacing" >845-796-3616</text><text transform="scale(0.5,1)" x="424.00" y="111.40" font-size="18.6" font-weight="bold" fill="#968e98" textLength="61.00" lengthAdjust="spacing" >HOME</text><text transform="scale(0.5,1)" x="518.00" y="111.40" font-size="18.6" font-weight="bold" fill="#968e98" textLength="168.00" lengthAdjust="spacing" >ABOUT STEVE'S</text><text transform="scale(0.5,1)" x="717.00" y="111.40" font-size="18.6" font-weight="bold" fill="#968e98" textLength="168.60" lengthAdjust="spacing" >RETURN POLICY</text><text transform="scale(0.5,1)" x="920.00" y="111.40" font-size="18.6" font-weight="bold" fill="#968e98" textLength="118.00" lengthAdjust="spacing" >JAZZMOSIS</text><text transform="scale(0.5,1)" x="1070.00" y="111.40" font-size="18.6" font-weight="bold" fill="#968e98" textLength="133.40" lengthAdjust="spacing" >CONTACT US</text><text transform="scale(0.5,1)" x="1235.40" y="111.40" font-size="18.6" font-weight="bold" fill="#968e98" textLength="92.00" lengthAdjust="spacing" >REPAIRS</text><rect x="203.3" y="91.5" width="1" height="28" fill="#fff" fill-opacity="0.1"/><rect x="250.6" y="91.5" width="1" height="28" fill="#fff" fill-opacity="0.1"/><text transform="scale(0.56,1)" x="201.79" y="168.90" font-size="17.8" font-weight="bold" fill="#fafafa" textLength="442.86" lengthAdjust="spacing" >THE HOTTEST DEALS ON THE COOLEST STUFF...</text></svg>
<div id="search" class="abs">Search</div>
<div id="sbtn" class="abs"><svg width="18" height="18" viewBox="0 0 18 18"><circle cx="8.3" cy="8.2" r="3.2" fill="none" stroke="#7f95a4" stroke-width="1.7"/><path d="M10.6,10.5 L13,12.9" stroke="#7f95a4" stroke-width="2" stroke-linecap="round"/></svg></div>
<div id="dash" class="abs"></div>
<div class="tile" style="left:112px;top:180px"><div class="img"><svg width="133" height="99" viewBox="0 0 133 99" style="display:block"><rect width="133" height="99" fill="#a09080"/><g filter="url(#isoft)">
<rect x="0" y="0" width="133" height="30" fill="#6a5a48"/>
<rect x="68" y="0" width="65" height="16" fill="#d8a040"/>
<rect x="0" y="0" width="68" height="18" fill="#8a7a62"/>
<rect x="4" y="2" width="10" height="12" fill="#e8e0d0"/><rect x="22" y="1" width="12" height="10" fill="#d8d0c0"/><rect x="40" y="2" width="8" height="12" fill="#e0d8c8"/><rect x="52" y="3" width="10" height="9" fill="#c8b8a0"/>
<polygon points="0,35 6,40 24,99 0,99" fill="#b04a28"/>
<polygon points="3,30 30,24 30,99 20,99 5,45" fill="#262628"/>
<polygon points="20,30 40,26 40,99 30,99 22,60" fill="#c4c2b8"/>
<polygon points="34,22 133,10 133,24 38,26" fill="#3a3a3a"/>
<polygon points="36,24 133,24 133,50 42,38" fill="#141414"/>
<polygon points="100,26 133,26 133,50 100,45" fill="#2a4a4a"/>
<polygon points="40,36 133,48 133,78 42,52" fill="#d8d8d0"/>
<polygon points="42,50 133,74 133,99 42,99" fill="#b0b0a8"/>
<g stroke="#505050" stroke-width="1.1">
<line x1="44" y1="58" x2="133" y2="82"/><line x1="44" y1="64" x2="133" y2="88"/><line x1="44" y1="70" x2="133" y2="94"/><line x1="44" y1="76" x2="133" y2="100"/><line x1="44" y1="82" x2="120" y2="103"/><line x1="44" y1="88" x2="100" y2="103"/><line x1="44" y1="94" x2="80" y2="104"/>
</g>
<polygon points="33,26 42,24 42,99 36,99" fill="#1a1a1a"/>
<circle cx="47" cy="43" r="2.8" fill="#1a1a1a"/><circle cx="57" cy="46" r="2.8" fill="#1a1a1a"/><circle cx="64" cy="48" r="2.8" fill="#1a1a1a"/><circle cx="71" cy="50" r="2.8" fill="#1a1a1a"/>
<g fill="#e0e0e0"><circle cx="50" cy="27" r="1.6"/><circle cx="56" cy="26" r="1.6"/><circle cx="62" cy="26" r="1.6"/><circle cx="68" cy="26" r="1.6"/><circle cx="74" cy="27" r="1.6"/></g>
<text x="85" y="32" font-size="8" font-style="italic" fill="#e8e8e8" transform="rotate(4 85 32)">Princeton</text>
<text x="90" y="42" font-size="5.5" font-style="italic" fill="#d0d0d0" transform="rotate(6 90 42)">Recording Amp</text>
<polygon points="55,99 66,86 76,99" fill="#f8f8f8" stroke="#d03030" stroke-width="1.5"/>
<rect x="128" y="66" width="5" height="16" fill="#101010"/>
</g></svg></div><div class="cap"><span class="nm">Amps</span><span class="ct">38 items</span></div></div>
<div class="tile" style="left:252.5px;top:180px"><div class="img"><svg width="133" height="99" viewBox="0 0 133 99" style="display:block"><rect width="133" height="99" fill="#f2f2f2"/><g filter="url(#isoft)">
<ellipse cx="78" cy="66" rx="58" ry="16" fill="none" stroke="#9a5a48" stroke-width="9"/>
<ellipse cx="78" cy="66" rx="58" ry="16" fill="none" stroke="#d09a80" stroke-width="3" stroke-dasharray="1.5 2"/>
<path d="M2,30 C20,8 60,12 90,30 C110,40 95,45 60,40 C30,36 10,40 0,45" fill="none" stroke="#2a2a2c" stroke-width="2.5"/>
<path d="M0,22 C30,5 70,15 95,35" fill="none" stroke="#3a3a3c" stroke-width="1.5"/>
<path d="M5,38 C30,18 80,20 100,38 C80,45 40,42 5,45" fill="none" stroke="#202022" stroke-width="3"/>
<path d="M40,22 C60,12 80,14 90,26" fill="none" stroke="#404042" stroke-width="1.5"/>
<ellipse cx="64" cy="68" rx="60" ry="20" fill="none" stroke="#2848a8" stroke-width="5"/>
<ellipse cx="72" cy="58" rx="52" ry="18" fill="none" stroke="#2040a0" stroke-width="4"/>
<ellipse cx="78" cy="62" rx="46" ry="15" fill="none" stroke="#3050b0" stroke-width="3"/>
<polygon points="28,45 60,60 58,66 26,51" fill="#c0c0c0"/>
<polygon points="55,62 112,42 114,48 57,68" fill="#d0d0d0"/>
<polygon points="60,64 108,47 109,51 61,68" fill="#909090"/>
<polygon points="84,36 92,34 94,44 86,46" fill="#b0b0b0"/>
</g></svg></div><div class="cap"><span class="nm">Cables &amp; more</span><span class="ct">15 items</span></div></div>
<div class="tile" style="left:393px;top:180px"><div class="img"><svg width="133" height="99" viewBox="0 0 133 99" style="display:block"><rect width="133" height="99" fill="#f6f6f4"/><g filter="url(#isoft)">
<ellipse cx="8" cy="12" rx="14" ry="12" fill="#c8a870"/><ellipse cx="30" cy="6" rx="16" ry="9" fill="#d8c090"/><ellipse cx="48" cy="16" rx="18" ry="12" fill="#e0d0a8"/>
<ellipse cx="10" cy="34" rx="12" ry="10" fill="#c0a070"/><ellipse cx="24" cy="32" rx="12" ry="10" fill="#b89868"/>
<ellipse cx="22" cy="56" rx="18" ry="12" fill="#d0b888"/><ellipse cx="8" cy="72" rx="12" ry="12" fill="#c8a878"/><ellipse cx="14" cy="88" rx="14" ry="10" fill="#c0a070"/>
<g stroke="#404040" stroke-width="0.8"><line x1="36" y1="30" x2="30" y2="70"/><line x1="70" y1="30" x2="78" y2="65"/></g>
<rect x="34" y="27" width="40" height="14" fill="#3a5838"/><ellipse cx="40" cy="28" rx="6" ry="3" fill="#d8d8d8"/><ellipse cx="62" cy="28" rx="8" ry="3" fill="#d8d8d8"/>
<ellipse cx="55" cy="52" rx="12" ry="9" fill="#181818"/>
<rect x="74" y="8" width="27" height="16" rx="2" fill="#701020"/><ellipse cx="87.5" cy="9" rx="13.5" ry="4" fill="#e8e8e8"/>
<rect x="103" y="3" width="26" height="15" rx="2" fill="#c04818"/><ellipse cx="116" cy="4" rx="13" ry="4" fill="#e8e8e8"/>
<rect x="104" y="22" width="26" height="16" rx="2" fill="#7a8090"/><ellipse cx="117" cy="23" rx="13" ry="4" fill="#e0e0e0"/>
<rect x="74" y="29" width="27" height="14" rx="2" fill="#d8c090"/><ellipse cx="87.5" cy="30" rx="13.5" ry="4" fill="#eee"/>
<rect x="80" y="51" width="13" height="12" fill="#705030"/><rect x="95" y="53" width="12" height="11" fill="#705030"/><rect x="109" y="57" width="13" height="11" fill="#705030"/>
<polygon points="18,82 46,62 56,78 28,97" fill="#b8b8b8"/><polygon points="22,80 46,64 52,74 28,92" fill="#909090"/>
<polygon points="50,88 80,64 88,80 58,99" fill="#a0a098"/><polygon points="55,86 80,68 84,77 60,94" fill="#606058"/>
<ellipse cx="100" cy="82" rx="14" ry="14" fill="#1a1a1a"/><rect x="88" y="66" width="24" height="8" fill="#c0a060"/>
</g></svg></div><div class="cap"><span class="nm">Drums</span><span class="ct">7 items</span></div></div>
<div class="tile" style="left:533.3px;top:180px"><div class="img"><svg width="133" height="99" viewBox="0 0 133 99" style="display:block"><rect width="133" height="99" fill="#fafafa"/><g filter="url(#isoft)"><line x1="66.0" y1="40.0" x2="66.0" y2="19.0" stroke="#3a3a3a" stroke-width="1.5"/><ellipse cx="66.0" cy="12.0" rx="9" ry="6.5" fill="#c83830" transform="rotate(-90.0 66.0 12.0)"/><line x1="69.4" y1="40.7" x2="77.5" y2="21.3" stroke="#3a3a3a" stroke-width="1.5"/><ellipse cx="80.2" cy="14.8" rx="9" ry="6.5" fill="#e8e0d0" transform="rotate(-67.5 80.2 14.8)"/><line x1="72.4" y1="42.6" x2="87.2" y2="27.8" stroke="#3a3a3a" stroke-width="1.5"/><ellipse cx="92.2" cy="22.8" rx="9" ry="6.5" fill="#d08838" transform="rotate(-45.0 92.2 22.8)"/><line x1="74.3" y1="45.6" x2="93.7" y2="37.5" stroke="#3a3a3a" stroke-width="1.5"/><ellipse cx="100.2" cy="34.8" rx="9" ry="6.5" fill="#c89848" transform="rotate(-22.5 100.2 34.8)"/><line x1="75.0" y1="49.0" x2="96.0" y2="49.0" stroke="#3a3a3a" stroke-width="1.5"/><ellipse cx="103.0" cy="49.0" rx="9" ry="6.5" fill="#404048" transform="rotate(0.0 103.0 49.0)"/><line x1="74.3" y1="52.4" x2="93.7" y2="60.5" stroke="#3a3a3a" stroke-width="1.5"/><ellipse cx="100.2" cy="63.2" rx="9" ry="6.5" fill="#b04030" transform="rotate(22.5 100.2 63.2)"/><line x1="72.4" y1="55.4" x2="87.2" y2="70.2" stroke="#3a3a3a" stroke-width="1.5"/><ellipse cx="92.2" cy="75.2" rx="9" ry="6.5" fill="#d09050" transform="rotate(45.0 92.2 75.2)"/><line x1="69.4" y1="57.3" x2="77.5" y2="76.7" stroke="#3a3a3a" stroke-width="1.5"/><ellipse cx="80.2" cy="83.2" rx="9" ry="6.5" fill="#8a8a8a" transform="rotate(67.5 80.2 83.2)"/><line x1="66.0" y1="58.0" x2="66.0" y2="79.0" stroke="#3a3a3a" stroke-width="1.5"/><ellipse cx="66.0" cy="86.0" rx="9" ry="6.5" fill="#905030" transform="rotate(90.0 66.0 86.0)"/><line x1="62.6" y1="57.3" x2="54.5" y2="76.7" stroke="#3a3a3a" stroke-width="1.5"/><ellipse cx="51.8" cy="83.2" rx="9" ry="6.5" fill="#e8e0d0" transform="rotate(112.5 51.8 83.2)"/><line x1="59.6" y1="55.4" x2="44.8" y2="70.2" stroke="#3a3a3a" stroke-width="1.5"/><ellipse cx="39.8" cy="75.2" rx="9" ry="6.5" fill="#c06028" transform="rotate(135.0 39.8 75.2)"/><line x1="57.7" y1="52.4" x2="38.3" y2="60.5" stroke="#3a3a3a" stroke-width="1.5"/><ellipse cx="31.8" cy="63.2" rx="9" ry="6.5" fill="#303840" transform="rotate(157.5 31.8 63.2)"/><line x1="57.0" y1="49.0" x2="36.0" y2="49.0" stroke="#3a3a3a" stroke-width="1.5"/><ellipse cx="29.0" cy="49.0" rx="9" ry="6.5" fill="#a05030" transform="rotate(180.0 29.0 49.0)"/><line x1="57.7" y1="45.6" x2="38.3" y2="37.5" stroke="#3a3a3a" stroke-width="1.5"/><ellipse cx="31.8" cy="34.8" rx="9" ry="6.5" fill="#d0a060" transform="rotate(202.5 31.8 34.8)"/><line x1="59.6" y1="42.6" x2="44.8" y2="27.8" stroke="#3a3a3a" stroke-width="1.5"/><ellipse cx="39.8" cy="22.8" rx="9" ry="6.5" fill="#b03828" transform="rotate(225.0 39.8 22.8)"/><line x1="62.6" y1="40.7" x2="54.5" y2="21.3" stroke="#3a3a3a" stroke-width="1.5"/><ellipse cx="51.8" cy="14.8" rx="9" ry="6.5" fill="#b06030" transform="rotate(247.5 51.8 14.8)"/></g></svg></div><div class="cap"><span class="nm">Guitars</span><span class="ct">30 items</span></div></div>
<div class="tile" style="left:112px;top:325.5px"><div class="img"><svg width="133" height="99" viewBox="0 0 133 99" style="display:block"><rect width="133" height="99" fill="#0c0c10"/><g filter="url(#isoft)"><rect x="10" y="4" width="26" height="6" fill="#b0b0b8"/><rect x="12" y="6" width="22" height="2" fill="#f0f0f0" fill-opacity="0.55"/><rect x="41" y="4" width="26" height="6" fill="#4060a0"/><rect x="43" y="6" width="22" height="2" fill="#f0f0f0" fill-opacity="0.55"/><rect x="70" y="4" width="20" height="6" fill="#7a3030"/><rect x="72" y="6" width="16" height="2" fill="#f0f0f0" fill-opacity="0.55"/><rect x="95" y="4" width="28" height="6" fill="#4060a0"/><rect x="97" y="6" width="24" height="2" fill="#f0f0f0" fill-opacity="0.55"/><rect x="4" y="11" width="25" height="6" fill="#b04848"/><rect x="6" y="13" width="21" height="2" fill="#f0f0f0" fill-opacity="0.55"/><rect x="32" y="11" width="19" height="6" fill="#7a3030"/><rect x="34" y="13" width="15" height="2" fill="#f0f0f0" fill-opacity="0.55"/><rect x="53" y="11" width="27" height="6" fill="#5a7a5a"/><rect x="55" y="13" width="23" height="2" fill="#f0f0f0" fill-opacity="0.55"/><rect x="85" y="11" width="28" height="6" fill="#4060a0"/><rect x="87" y="13" width="24" height="2" fill="#f0f0f0" fill-opacity="0.55"/><rect x="3" y="18" width="26" height="6" fill="#c8c8c8"/><rect x="5" y="20" width="22" height="2" fill="#f0f0f0" fill-opacity="0.55"/><rect x="31" y="18" width="18" height="6" fill="#d0a060"/><rect x="33" y="20" width="14" height="2" fill="#f0f0f0" fill-opacity="0.55"/><rect x="52" y="18" width="27" height="6" fill="#a83838"/><rect x="54" y="20" width="23" height="2" fill="#f0f0f0" fill-opacity="0.55"/><rect x="84" y="18" width="23" height="6" fill="#b0b0b8"/><rect x="86" y="20" width="19" height="2" fill="#f0f0f0" fill-opacity="0.55"/><rect x="11" y="25" width="21" height="6" fill="#b04848"/><rect x="13" y="27" width="17" height="2" fill="#f0f0f0" fill-opacity="0.55"/><rect x="37" y="25" width="18" height="6" fill="#c8c8c8"/><rect x="39" y="27" width="14" height="2" fill="#f0f0f0" fill-opacity="0.55"/><rect x="60" y="25" width="28" height="6" fill="#b04848"/><rect x="62" y="27" width="24" height="2" fill="#f0f0f0" fill-opacity="0.55"/><rect x="93" y="25" width="26" height="6" fill="#c8c8c8"/><rect x="95" y="27" width="22" height="2" fill="#f0f0f0" fill-opacity="0.55"/><rect x="8" y="32" width="30" height="6" fill="#d0a060"/><rect x="10" y="34" width="26" height="2" fill="#f0f0f0" fill-opacity="0.55"/><rect x="44" y="32" width="22" height="6" fill="#a83838"/><rect x="46" y="34" width="18" height="2" fill="#f0f0f0" fill-opacity="0.55"/><rect x="68" y="32" width="27" height="6" fill="#c8c8c8"/><rect x="70" y="34" width="23" height="2" fill="#f0f0f0" fill-opacity="0.55"/><rect x="100" y="32" width="19" height="6" fill="#b04848"/><rect x="102" y="34" width="15" height="2" fill="#f0f0f0" fill-opacity="0.55"/><rect x="4" y="40" width="18" height="6" fill="#a83838"/><rect x="6" y="42" width="14" height="2" fill="#f0f0f0" fill-opacity="0.55"/><rect x="25" y="40" width="21" height="6" fill="#a83838"/><rect x="27" y="42" width="17" height="2" fill="#f0f0f0" fill-opacity="0.55"/><rect x="51" y="40" width="24" height="6" fill="#5a7a5a"/><rect x="53" y="42" width="20" height="2" fill="#f0f0f0" fill-opacity="0.55"/><rect x="80" y="40" width="19" height="6" fill="#4060a0"/><rect x="82" y="42" width="15" height="2" fill="#f0f0f0" fill-opacity="0.55"/><rect x="13" y="47" width="22" height="6" fill="#e0d8c8"/><rect x="15" y="49" width="18" height="2" fill="#f0f0f0" fill-opacity="0.55"/><rect x="37" y="47" width="22" height="6" fill="#e0d8c8"/><rect x="39" y="49" width="18" height="2" fill="#f0f0f0" fill-opacity="0.55"/><rect x="61" y="47" width="24" height="6" fill="#c8c8c8"/><rect x="63" y="49" width="20" height="2" fill="#f0f0f0" fill-opacity="0.55"/><rect x="88" y="47" width="21" height="6" fill="#c8c8c8"/><rect x="90" y="49" width="17" height="2" fill="#f0f0f0" fill-opacity="0.55"/><rect x="111" y="47" width="18" height="6" fill="#b0b0b8"/><rect x="113" y="49" width="14" height="2" fill="#f0f0f0" fill-opacity="0.55"/><rect x="5" y="54" width="28" height="6" fill="#7a3030"/><rect x="7" y="56" width="24" height="2" fill="#f0f0f0" fill-opacity="0.55"/><rect x="36" y="54" width="25" height="6" fill="#7a3030"/><rect x="38" y="56" width="21" height="2" fill="#f0f0f0" fill-opacity="0.55"/><rect x="64" y="54" width="29" height="6" fill="#8a6a5a"/><rect x="66" y="56" width="25" height="2" fill="#f0f0f0" fill-opacity="0.55"/><rect x="98" y="54" width="28" height="6" fill="#5a7a5a"/><rect x="100" y="56" width="24" height="2" fill="#f0f0f0" fill-opacity="0.55"/><rect x="9" y="61" width="24" height="6" fill="#d0a060"/><rect x="11" y="63" width="20" height="2" fill="#f0f0f0" fill-opacity="0.55"/><rect x="35" y="61" width="22" height="6" fill="#4060a0"/><rect x="37" y="63" width="18" height="2" fill="#f0f0f0" fill-opacity="0.55"/><rect x="61" y="61" width="18" height="6" fill="#d0a060"/><rect x="63" y="63" width="14" height="2" fill="#f0f0f0" fill-opacity="0.55"/><rect x="82" y="61" width="24" height="6" fill="#4060a0"/><rect x="84" y="63" width="20" height="2" fill="#f0f0f0" fill-opacity="0.55"/><rect x="3" y="68" width="20" height="6" fill="#d0a060"/><rect x="5" y="70" width="16" height="2" fill="#f0f0f0" fill-opacity="0.55"/><rect x="28" y="68" width="22" height="6" fill="#a83838"/><rect x="30" y="70" width="18" height="2" fill="#f0f0f0" fill-opacity="0.55"/><rect x="56" y="68" width="23" height="6" fill="#b04848"/><rect x="58" y="70" width="19" height="2" fill="#f0f0f0" fill-opacity="0.55"/><rect x="84" y="68" width="19" height="6" fill="#c8c8c8"/><rect x="86" y="70" width="15" height="2" fill="#f0f0f0" fill-opacity="0.55"/><rect x="105" y="68" width="21" height="6" fill="#4060a0"/><rect x="107" y="70" width="17" height="2" fill="#f0f0f0" fill-opacity="0.55"/><rect x="3" y="76" width="27" height="6" fill="#e0d8c8"/><rect x="5" y="78" width="23" height="2" fill="#f0f0f0" fill-opacity="0.55"/><rect x="34" y="76" width="27" height="6" fill="#b0b0b8"/><rect x="36" y="78" width="23" height="2" fill="#f0f0f0" fill-opacity="0.55"/><rect x="64" y="76" width="27" height="6" fill="#b0b0b8"/><rect x="66" y="78" width="23" height="2" fill="#f0f0f0" fill-opacity="0.55"/><rect x="97" y="76" width="20" height="6" fill="#5a7a5a"/><rect x="99" y="78" width="16" height="2" fill="#f0f0f0" fill-opacity="0.55"/><rect x="13" y="83" width="20" height="6" fill="#b04848"/><rect x="15" y="85" width="16" height="2" fill="#f0f0f0" fill-opacity="0.55"/><rect x="36" y="83" width="27" height="6" fill="#d0a060"/><rect x="38" y="85" width="23" height="2" fill="#f0f0f0" fill-opacity="0.55"/><rect x="66" y="83" width="20" height="6" fill="#7a3030"/><rect x="68" y="85" width="16" height="2" fill="#f0f0f0" fill-opacity="0.55"/><rect x="89" y="83" width="28" height="6" fill="#5a7a5a"/><rect x="91" y="85" width="24" height="2" fill="#f0f0f0" fill-opacity="0.55"/><rect x="12" y="90" width="19" height="6" fill="#5a7a5a"/><rect x="14" y="92" width="15" height="2" fill="#f0f0f0" fill-opacity="0.55"/><rect x="33" y="90" width="19" height="6" fill="#c8c8c8"/><rect x="35" y="92" width="15" height="2" fill="#f0f0f0" fill-opacity="0.55"/><rect x="54" y="90" width="26" height="6" fill="#b04848"/><rect x="56" y="92" width="22" height="2" fill="#f0f0f0" fill-opacity="0.55"/><rect x="83" y="90" width="29" height="6" fill="#5a7a5a"/><rect x="85" y="92" width="25" height="2" fill="#f0f0f0" fill-opacity="0.55"/></g></svg></div><div class="cap"><span class="nm">Harmonicas</span><span class="ct">11 items</span></div></div>
<div class="tile" style="left:252.5px;top:325.5px"><div class="img"><svg width="133" height="99" viewBox="0 0 133 99" style="display:block"><rect width="133" height="99" fill="#c0c4c8"/><g filter="url(#isoft)">
<defs><linearGradient id="im6" x1="0" y1="0" x2="1" y2="1"><stop offset="0" stop-color="#e8ecf0"/><stop offset="1" stop-color="#707880"/></linearGradient></defs>
<rect width="133" height="99" fill="url(#im6)"/>
<g>
<polygon points="28,0 108,0 120,8 42,10" fill="#f4f4f4"/>
<polygon points="24,6 100,8 102,12 26,10" fill="#c0c0b8"/><polygon points="22,11 97,12 99,16 24,15" fill="#a8a090"/><polygon points="21,16 94,16 96,20 23,20" fill="#d0d0c8"/><polygon points="19,21 91,20 93,24 21,25" fill="#908878"/><polygon points="18,26 88,24 90,28 20,30" fill="#b8b0a0"/><polygon points="16,31 85,28 87,32 18,35" fill="#c0c0b8"/><polygon points="15,36 82,32 84,36 17,40" fill="#a8a090"/><polygon points="13,41 79,36 81,40 15,45" fill="#d0d0c8"/><polygon points="12,46 76,40 78,44 14,50" fill="#908878"/><polygon points="10,51 73,44 75,48 12,55" fill="#b8b0a0"/><polygon points="9,56 70,48 72,52 11,60" fill="#c0c0b8"/><polygon points="7,61 67,52 69,56 9,65" fill="#a8a090"/><polygon points="6,66 64,56 66,60 8,70" fill="#d0d0c8"/><polygon points="4,71 61,60 63,64 6,75" fill="#908878"/>
<polygon points="0,78 48,92 50,99 0,99" fill="#808890"/>
<ellipse cx="78" cy="84" rx="30" ry="15" fill="#c8ccd0"/><ellipse cx="78" cy="84" rx="7" ry="4" fill="#d8c060"/>
<ellipse cx="102" cy="76" rx="20" ry="12" fill="#e0d088"/><ellipse cx="112" cy="72" rx="16" ry="10" fill="#e8e8e0"/>
</g></g></svg></div><div class="cap"><span class="nm">Independent Music</span><span class="ct">2 items</span></div></div>
<div class="tile" style="left:393px;top:325.5px"><div class="img"><svg width="133" height="99" viewBox="0 0 133 99" style="display:block"><rect width="133" height="99" fill="#fcfcfc"/><g filter="url(#isoft)">
<rect x="19" y="12" width="4" height="45" fill="#403830"/><rect x="17" y="3" width="8" height="11" fill="#c8c0b0"/>
<path d="M21,48 C10,48 8,56 10,64 C4,72 4,96 21,96 C38,96 38,72 32,64 C34,56 32,48 21,48z" fill="#8c8c8a"/>
<circle cx="21" cy="78" r="8" fill="#6a6a68"/>
<rect x="56" y="12" width="4" height="48" fill="#302820"/><rect x="54" y="3" width="8" height="11" fill="#a06048"/>
<circle cx="58" cy="76" r="18" fill="#383838"/><circle cx="58" cy="76" r="15" fill="#f0f0ec"/>
<rect x="88" y="40" width="3" height="35" fill="#302820"/><rect x="86" y="32" width="7" height="9" fill="#403028"/>
<ellipse cx="90" cy="80" rx="13" ry="15" fill="#3a2010"/><ellipse cx="90" cy="80" rx="8" ry="9" fill="#c88030"/>
<rect x="114" y="40" width="3" height="35" fill="#403020"/><rect x="112" y="32" width="7" height="9" fill="#604030"/>
<path d="M115.5,62 C107,62 106,70 108,76 C104,82 104,95 115.5,95 C127,95 127,82 123,76 C125,70 124,62 115.5,62z" fill="#8a4a28"/>
</g></svg></div><div class="cap"><span class="nm">Mandolins, Banjos &amp; more</span><span class="ct">2 items</span></div></div>
<div class="tile" style="left:533.3px;top:325.5px"><div class="img"><svg width="133" height="99" viewBox="0 0 133 99" style="display:block"><rect width="133" height="99" fill="#303438"/><g filter="url(#isoft)">
<rect width="133" height="40" fill="#4a5060"/>
<rect x="0" y="0" width="133" height="6" fill="#606878"/>
<rect x="5" y="5" width="8" height="18" fill="#c0c8d8"/><rect x="18" y="8" width="6" height="14" fill="#8090a8"/><rect x="28" y="5" width="10" height="16" fill="#d0d8e0"/><rect x="48" y="4" width="8" height="18" fill="#a0b0c0"/><rect x="110" y="6" width="18" height="14" fill="#c83030"/>
<rect x="0" y="40" width="133" height="59" fill="#303438"/>
<rect x="0" y="80" width="133" height="19" fill="#2a2a2c"/>
<rect x="14" y="35" width="10" height="35" rx="3" fill="#607078" transform="rotate(15 19 52)"/>
<rect x="38" y="22" width="10" height="44" rx="3" fill="#8898a0"/>
<rect x="56" y="30" width="8" height="38" rx="3" fill="#7890a0" transform="rotate(10 60 49)"/>
<rect x="84" y="30" width="10" height="46" rx="3" fill="#9aa8b0"/>
<rect x="108" y="30" width="10" height="40" rx="3" fill="#6a8aa0" transform="rotate(-10 113 50)"/>
<rect x="72" y="38" width="22" height="40" rx="4" fill="#e07020"/>
<ellipse cx="86" cy="16" rx="16" ry="11" fill="#d8dce0" stroke="#ffffff" stroke-width="2"/>
<text x="74" y="19" font-size="9" font-weight="bold" fill="#303030">Blue</text>
<path d="M66,70 q18,10 36,0 M68,62 q16,10 32,0" fill="none" stroke="#e8e8e8" stroke-width="2"/>
<rect x="84" y="76" width="3" height="23" fill="#e0e0e0"/>
</g></svg></div><div class="cap"><span class="nm">Mics and Recording</span><span class="ct">78 items</span></div></div>
<div class="tile" style="left:112px;top:470.9px"><div class="img"><svg width="133" height="99" viewBox="0 0 133 99" style="display:block"><rect width="133" height="99" fill="#fafafa"/><g filter="url(#isoft)">
<rect x="7" y="3" width="21" height="30" rx="3" fill="#1a1a1a"/><circle cx="17.5" cy="22" r="6" fill="#2e2e2e"/><rect x="11" y="6" width="13" height="7" fill="#2a2a2a"/>
<rect x="16" y="33" width="2.5" height="30" fill="#202020"/>
<rect x="104" y="3" width="21" height="30" rx="3" fill="#1a1a1a"/><circle cx="114.5" cy="22" r="6" fill="#2e2e2e"/><rect x="108" y="6" width="13" height="7" fill="#2a2a2a"/>
<rect x="113" y="33" width="2.5" height="30" fill="#202020"/>
<polygon points="37,34 68,22 80,36 48,46" fill="#2a2c30"/><polygon points="41,35 67,25 75,34 48,43" fill="#4a4e54"/>
<polygon points="66,10 92,5 95,20 70,26" fill="#202020"/><rect x="72" y="10" width="16" height="5" fill="#404850" transform="rotate(-10 80 12)"/>
<rect x="4" y="62" width="33" height="33" fill="#141414"/><rect x="20" y="68" width="10" height="20" fill="#202020"/>
<rect x="96" y="62" width="32" height="33" fill="#141414"/><rect x="102" y="68" width="10" height="20" fill="#202020"/>
<rect x="41" y="55" width="24" height="41" rx="4" fill="#2e2e2e"/><circle cx="53" cy="81" r="9" fill="#1a1a1a"/><rect x="44" y="58" width="18" height="10" fill="#3a3a3a"/>
<rect x="68" y="55" width="24" height="41" rx="4" fill="#2e2e2e"/><circle cx="80" cy="81" r="9" fill="#1a1a1a"/><rect x="71" y="58" width="18" height="10" fill="#3a3a3a"/>
</g></svg></div><div class="cap"><span class="nm">PA Equipment</span><span class="ct">64 items</span></div></div>
<div class="tile" style="left:252.5px;top:470.9px"><div class="img"><svg width="133" height="99" viewBox="0 0 133 99" style="display:block"><rect width="133" height="99" fill="#1c1612"/><g filter="url(#isoft)"><rect x="55" y="84" width="21" height="22" rx="2" fill="#c02828" transform="rotate(24 65 95)"/><circle cx="62" cy="91" r="1.8" fill="#1a1a1a"/><circle cx="69" cy="91" r="1.8" fill="#1a1a1a"/><rect x="53" y="73" width="16" height="16" rx="2" fill="#40a040" transform="rotate(12 61 81)"/><circle cx="58" cy="78" r="1.8" fill="#1a1a1a"/><circle cx="63" cy="78" r="1.8" fill="#1a1a1a"/><rect x="110" y="21" width="22" height="22" rx="2" fill="#40a040" transform="rotate(-4 121 32)"/><circle cx="117" cy="28" r="1.8" fill="#1a1a1a"/><circle cx="124" cy="28" r="1.8" fill="#1a1a1a"/><rect x="-7" y="83" width="19" height="20" rx="2" fill="#d09030" transform="rotate(-12 2 93)"/><circle cx="-1" cy="89" r="1.8" fill="#1a1a1a"/><circle cx="5" cy="89" r="1.8" fill="#1a1a1a"/><rect x="89" y="10" width="17" height="16" rx="2" fill="#202830" transform="rotate(21 97 18)"/><circle cx="94" cy="15" r="1.8" fill="#1a1a1a"/><circle cx="100" cy="15" r="1.8" fill="#1a1a1a"/><rect x="22" y="6" width="16" height="14" rx="2" fill="#e0d8c0" transform="rotate(-8 30 13)"/><circle cx="27" cy="10" r="1.8" fill="#1a1a1a"/><circle cx="32" cy="10" r="1.8" fill="#1a1a1a"/><rect x="32" y="11" width="20" height="19" rx="2" fill="#e0d8c0" transform="rotate(34 42 20)"/><circle cx="38" cy="17" r="1.8" fill="#1a1a1a"/><circle cx="45" cy="17" r="1.8" fill="#1a1a1a"/><rect x="42" y="13" width="19" height="20" rx="2" fill="#d09030" transform="rotate(-33 51 23)"/><circle cx="48" cy="19" r="1.8" fill="#1a1a1a"/><circle cx="54" cy="19" r="1.8" fill="#1a1a1a"/><rect x="82" y="43" width="18" height="16" rx="2" fill="#d09030" transform="rotate(-27 91 51)"/><circle cx="88" cy="48" r="1.8" fill="#1a1a1a"/><circle cx="94" cy="48" r="1.8" fill="#1a1a1a"/><rect x="74" y="28" width="25" height="14" rx="2" fill="#202830" transform="rotate(8 86 35)"/><circle cx="82" cy="32" r="1.8" fill="#1a1a1a"/><circle cx="90" cy="32" r="1.8" fill="#1a1a1a"/><rect x="6" y="29" width="21" height="18" rx="2" fill="#70b070" transform="rotate(5 16 38)"/><circle cx="13" cy="35" r="1.8" fill="#1a1a1a"/><circle cx="20" cy="35" r="1.8" fill="#1a1a1a"/><rect x="37" y="51" width="23" height="16" rx="2" fill="#c02828" transform="rotate(-3 48 59)"/><circle cx="44" cy="56" r="1.8" fill="#1a1a1a"/><circle cx="52" cy="56" r="1.8" fill="#1a1a1a"/><rect x="-5" y="85" width="21" height="20" rx="2" fill="#c02828" transform="rotate(35 5 95)"/><circle cx="2" cy="91" r="1.8" fill="#1a1a1a"/><circle cx="9" cy="91" r="1.8" fill="#1a1a1a"/><rect x="97" y="36" width="22" height="14" rx="2" fill="#70b070" transform="rotate(-30 108 43)"/><circle cx="104" cy="40" r="1.8" fill="#1a1a1a"/><circle cx="111" cy="40" r="1.8" fill="#1a1a1a"/><rect x="36" y="69" width="19" height="15" rx="2" fill="#2a6a8a" transform="rotate(-4 45 76)"/><circle cx="42" cy="74" r="1.8" fill="#1a1a1a"/><circle cx="48" cy="74" r="1.8" fill="#1a1a1a"/><rect x="108" y="34" width="24" height="19" rx="2" fill="#e8e8e0" transform="rotate(-3 120 43)"/><circle cx="116" cy="40" r="1.8" fill="#1a1a1a"/><circle cx="124" cy="40" r="1.8" fill="#1a1a1a"/><rect x="108" y="3" width="25" height="19" rx="2" fill="#d03838" transform="rotate(2 120 12)"/><circle cx="116" cy="9" r="1.8" fill="#1a1a1a"/><circle cx="124" cy="9" r="1.8" fill="#1a1a1a"/><rect x="-1" y="45" width="17" height="17" rx="2" fill="#5a4838" transform="rotate(30 7 53)"/><circle cx="4" cy="50" r="1.8" fill="#1a1a1a"/><circle cx="10" cy="50" r="1.8" fill="#1a1a1a"/><rect x="82" y="8" width="21" height="18" rx="2" fill="#b8c070" transform="rotate(34 92 17)"/><circle cx="89" cy="14" r="1.8" fill="#1a1a1a"/><circle cx="96" cy="14" r="1.8" fill="#1a1a1a"/><rect x="13" y="29" width="26" height="19" rx="2" fill="#d09030" transform="rotate(-13 26 38)"/><circle cx="21" cy="35" r="1.8" fill="#1a1a1a"/><circle cx="30" cy="35" r="1.8" fill="#1a1a1a"/><rect x="10" y="70" width="18" height="18" rx="2" fill="#70b070" transform="rotate(-15 19 79)"/><circle cx="16" cy="76" r="1.8" fill="#1a1a1a"/><circle cx="22" cy="76" r="1.8" fill="#1a1a1a"/><rect x="2" y="0" width="25" height="22" rx="2" fill="#a03030" transform="rotate(-31 14 11)"/><circle cx="10" cy="7" r="1.8" fill="#1a1a1a"/><circle cx="18" cy="7" r="1.8" fill="#1a1a1a"/><rect x="50" y="84" width="25" height="19" rx="2" fill="#d03838" transform="rotate(-3 62 93)"/><circle cx="58" cy="90" r="1.8" fill="#1a1a1a"/><circle cx="66" cy="90" r="1.8" fill="#1a1a1a"/><rect x="106" y="73" width="22" height="16" rx="2" fill="#c02828" transform="rotate(-31 117 81)"/><circle cx="113" cy="78" r="1.8" fill="#1a1a1a"/><circle cx="120" cy="78" r="1.8" fill="#1a1a1a"/><rect x="116" y="32" width="19" height="16" rx="2" fill="#b8c070" transform="rotate(-19 125 40)"/><circle cx="122" cy="37" r="1.8" fill="#1a1a1a"/><circle cx="128" cy="37" r="1.8" fill="#1a1a1a"/><rect x="95" y="3" width="18" height="20" rx="2" fill="#5a4838" transform="rotate(-16 104 13)"/><circle cx="101" cy="9" r="1.8" fill="#1a1a1a"/><circle cx="107" cy="9" r="1.8" fill="#1a1a1a"/><rect x="5" y="43" width="20" height="16" rx="2" fill="#70b070" transform="rotate(-14 15 51)"/><circle cx="11" cy="48" r="1.8" fill="#1a1a1a"/><circle cx="18" cy="48" r="1.8" fill="#1a1a1a"/><rect x="106" y="52" width="21" height="21" rx="2" fill="#d09030" transform="rotate(2 116 62)"/><circle cx="113" cy="59" r="1.8" fill="#1a1a1a"/><circle cx="120" cy="59" r="1.8" fill="#1a1a1a"/><rect x="110" y="41" width="18" height="15" rx="2" fill="#a03030" transform="rotate(33 119 48)"/><circle cx="116" cy="46" r="1.8" fill="#1a1a1a"/><circle cx="122" cy="46" r="1.8" fill="#1a1a1a"/><rect x="35" y="70" width="23" height="19" rx="2" fill="#3a70c0" transform="rotate(-24 46 79)"/><circle cx="42" cy="76" r="1.8" fill="#1a1a1a"/><circle cx="50" cy="76" r="1.8" fill="#1a1a1a"/><rect x="115" y="24" width="24" height="22" rx="2" fill="#d03838" transform="rotate(29 127 35)"/><circle cx="123" cy="31" r="1.8" fill="#1a1a1a"/><circle cx="131" cy="31" r="1.8" fill="#1a1a1a"/><rect x="82" y="-2" width="21" height="14" rx="2" fill="#2a6a8a" transform="rotate(4 92 5)"/><circle cx="89" cy="2" r="1.8" fill="#1a1a1a"/><circle cx="96" cy="2" r="1.8" fill="#1a1a1a"/><rect x="83" y="61" width="26" height="18" rx="2" fill="#d03838" transform="rotate(27 96 70)"/><circle cx="91" cy="67" r="1.8" fill="#1a1a1a"/><circle cx="100" cy="67" r="1.8" fill="#1a1a1a"/><rect x="57" y="88" width="20" height="19" rx="2" fill="#c05050" transform="rotate(-13 67 97)"/><circle cx="63" cy="94" r="1.8" fill="#1a1a1a"/><circle cx="70" cy="94" r="1.8" fill="#1a1a1a"/><rect x="-8" y="50" width="24" height="18" rx="2" fill="#5a4838" transform="rotate(0 4 59)"/><circle cx="0" cy="56" r="1.8" fill="#1a1a1a"/><circle cx="8" cy="56" r="1.8" fill="#1a1a1a"/><rect x="108" y="26" width="24" height="19" rx="2" fill="#5a4838" transform="rotate(0 120 35)"/><circle cx="116" cy="32" r="1.8" fill="#1a1a1a"/><circle cx="124" cy="32" r="1.8" fill="#1a1a1a"/><rect x="78" y="84" width="22" height="19" rx="2" fill="#d03838" transform="rotate(-13 89 93)"/><circle cx="85" cy="90" r="1.8" fill="#1a1a1a"/><circle cx="92" cy="90" r="1.8" fill="#1a1a1a"/><rect x="105" y="36" width="21" height="22" rx="2" fill="#3a70c0" transform="rotate(32 115 47)"/><circle cx="112" cy="43" r="1.8" fill="#1a1a1a"/><circle cx="119" cy="43" r="1.8" fill="#1a1a1a"/><rect x="32" y="15" width="21" height="21" rx="2" fill="#d09030" transform="rotate(-25 42 25)"/><circle cx="39" cy="22" r="1.8" fill="#1a1a1a"/><circle cx="46" cy="22" r="1.8" fill="#1a1a1a"/><rect x="96" y="11" width="25" height="22" rx="2" fill="#c05050" transform="rotate(18 108 22)"/><circle cx="104" cy="18" r="1.8" fill="#1a1a1a"/><circle cx="112" cy="18" r="1.8" fill="#1a1a1a"/><rect x="67" y="69" width="24" height="18" rx="2" fill="#b8c070" transform="rotate(-32 79 78)"/><circle cx="75" cy="75" r="1.8" fill="#1a1a1a"/><circle cx="83" cy="75" r="1.8" fill="#1a1a1a"/><rect x="40" y="10" width="25" height="21" rx="2" fill="#202830" transform="rotate(-12 52 20)"/><circle cx="48" cy="17" r="1.8" fill="#1a1a1a"/><circle cx="56" cy="17" r="1.8" fill="#1a1a1a"/></g></svg></div><div class="cap"><span class="nm">Pedals</span><span class="ct">1754 items</span></div></div>
<div class="tile" style="left:393px;top:470.9px"><div class="img"><svg width="133" height="99" viewBox="0 0 133 99" style="display:block"><rect width="133" height="99" fill="#101014"/><g filter="url(#isoft)">
<defs><linearGradient id="rb" x1="0" y1="0" x2="1" y2="0.3"><stop offset="0" stop-color="#4060ff"/><stop offset="0.3" stop-color="#40e0ff"/><stop offset="0.55" stop-color="#ffe040"/><stop offset="0.8" stop-color="#ff4040"/><stop offset="1" stop-color="#a020a0"/></linearGradient>
<radialGradient id="pkg" cx="0.3" cy="0.3" r="0.6"><stop offset="0" stop-color="#303848"/><stop offset="1" stop-color="#08080a"/></radialGradient></defs>
<rect width="133" height="99" fill="url(#pkg)"/>
<polygon points="16,24 64,6 78,62 34,86" fill="#101820"/>
<polygon points="22,26 60,12 72,58 36,78" fill="url(#rb)" opacity="0.85"/>
<ellipse cx="36" cy="42" rx="12" ry="16" fill="#e0c0f0" opacity="0.7"/>
<g stroke="#a0a0a0" stroke-width="0.8" opacity="0.6"><line x1="20" y1="0" x2="60" y2="99"/><line x1="30" y1="0" x2="70" y2="99"/><line x1="40" y1="0" x2="80" y2="99"/><line x1="50" y1="0" x2="90" y2="99"/></g>
<circle cx="90" cy="40" r="4" fill="#604040" opacity="0.5"/><circle cx="100" cy="82" r="5" fill="#403030" opacity="0.5"/>
<ellipse cx="95" cy="30" rx="30" ry="40" fill="#281810" opacity="0.5"/>
</g></svg></div><div class="cap"><span class="nm">Pickups</span><span class="ct">424 items</span></div></div>
<div class="tile" style="left:533.3px;top:470.9px"><div class="img"><svg width="133" height="99" viewBox="0 0 133 99" style="display:block"><rect width="133" height="99" fill="#2a2c2a"/><g filter="url(#isoft)">
<rect width="133" height="99" fill="#2a2c2a"/>
<rect x="0" y="0" width="133" height="7" fill="#1a1a1a"/>
<rect x="4" y="14" width="125" height="72" rx="4" fill="#1e201e"/>
<path d="M12,60 A55,45 0 0 1 122,60 Z" fill="#e0d0a8"/>
<path d="M20,48 A50,40 0 0 1 40,28" fill="none" stroke="#c03020" stroke-width="4"/>
<path d="M36,30 A50,40 0 0 1 56,22" fill="none" stroke="#c08040" stroke-width="4"/>
<path d="M56,22 A50,40 0 0 1 78,22" fill="none" stroke="#40a040" stroke-width="4"/>
<path d="M78,22 A50,40 0 0 1 98,30" fill="none" stroke="#c08040" stroke-width="4"/>
<path d="M94,28 A50,40 0 0 1 116,48" fill="none" stroke="#c03020" stroke-width="4"/>
<path d="M44,60 A22,14 0 0 1 90,60 Z" fill="#202418"/>
<path d="M44,60 A22,14 0 0 1 90,60" fill="none" stroke="#70e040" stroke-width="3"/>
<rect x="66" y="18" width="1.5" height="42" fill="#303030"/>
<rect x="10" y="64" width="113" height="18" fill="#e8e8e0"/>
<text x="18" y="78" font-size="11" fill="#202020">G</text><text x="62" y="78" font-size="11" fill="#202020">A</text><text x="104" y="78" font-size="11" fill="#202020">A</text>
<rect x="0" y="92" width="133" height="7" fill="#1a1a1a"/>
</g></svg></div><div class="cap"><span class="nm">Tuners &amp; Metronomes</span><span class="ct">4 items</span></div></div>
<div class="tile" style="left:112px;top:616.3px"><div class="img"><svg width="133" height="99" viewBox="0 0 133 99" style="display:block"><rect width="133" height="99" fill="#0c0e14"/><g filter="url(#isoft)">
<rect width="133" height="99" fill="#0c0e14"/>
<rect x="0" y="34" width="133" height="58" fill="#141c30"/>
<path d="M8,48 q58,-12 118,0 l0,40 l-118,0z" fill="#1a2844"/>
<rect x="0" y="90" width="133" height="9" fill="#2a3ca0"/>
<rect x="34" y="9" width="16" height="19" fill="#c8c890"/><rect x="50" y="8" width="19" height="20" fill="#c8a860"/><rect x="69" y="8" width="28" height="20" fill="#b8c078"/><rect x="98" y="2" width="15" height="16" fill="#c04050"/>
<g stroke="#c8c8c0" stroke-width="1.6">
<line x1="12" y1="34" x2="14" y2="70"/><line x1="38" y1="38" x2="38" y2="78"/><line x1="57" y1="40" x2="58" y2="78"/><line x1="78" y1="40" x2="79" y2="76"/><line x1="98" y1="42" x2="98" y2="78"/><line x1="120" y1="34" x2="121" y2="66"/>
<line x1="40" y1="10" x2="40" y2="42"/><line x1="54" y1="14" x2="54" y2="42"/><line x1="69" y1="12" x2="69" y2="42"/><line x1="84" y1="10" x2="84" y2="42"/><line x1="104" y1="12" x2="104" y2="40"/>
</g>
<ellipse cx="40" cy="48" rx="6" ry="8" fill="#c8b890"/><ellipse cx="54" cy="48" rx="7" ry="8" fill="#c86030"/><ellipse cx="69" cy="47" rx="7" ry="8" fill="#30a088"/><ellipse cx="84" cy="47" rx="6" ry="8" fill="#e8e0e0"/>
<polygon points="96,40 112,36 108,56 98,54" fill="#e0c040"/>
<path d="M14,62 q-11,6 -11,18 q0,14 11,14 q12,0 12,-14 q0,-12 -12,-18z" fill="#d8c8a0"/><circle cx="14" cy="78" r="3" fill="#3a3020"/>
<ellipse cx="38" cy="84" rx="8" ry="10" fill="#c83028"/><ellipse cx="40" cy="84" rx="4" ry="6" fill="#f0f0f0"/>
<ellipse cx="58" cy="84" rx="9" ry="11" fill="#3aa8d8"/>
<ellipse cx="79" cy="83" rx="8" ry="10" fill="#1a1a1a"/><ellipse cx="81" cy="84" rx="4" ry="6" fill="#e0e0e0"/>
<ellipse cx="98" cy="85" rx="8" ry="9" fill="#c89848"/>
<path d="M121,58 q-11,6 -11,18 q0,15 11,15 q12,0 12,-15 q0,-12 -12,-18z" fill="#e0c878"/><circle cx="121" cy="74" r="3" fill="#3a3020"/>
</g></svg></div><div class="cap"><span class="nm">Vintage Gear</span><span class="ct">0 items</span></div></div>
<div class="box" style="top:142.8px;height:353.2px"><svg class="abs" style="left:0;top:0" width="160" height="30"><text transform="scale(0.52,1)" x="14.42" y="23.80" font-size="17.8" font-weight="bold" fill="#fafafa" textLength="180.77" lengthAdjust="spacing" >MUSIC PRODUCTS</text></svg><ul><li><i></i><a>Amps</a></li><li><i></i><a>Cables &amp; more</a></li><li><i></i><a>Drums</a></li><li><i></i><a>Guitars</a></li><li><i></i><a>Harmonicas</a></li><li><i></i><a>Independent Music</a></li><li><i></i><a>Mandolins, Banjos &amp; more</a></li><li><i></i><a>Mics and Recording</a></li><li><i></i><a>PA Equipment</a></li><li><i></i><a>Pedals</a></li><li><i></i><a>Pickups</a></li><li><i></i><a>Tuners &amp; Metronomes</a></li><li><i></i><a>Vintage Gear</a></li></ul></div>
<div class="box" style="top:512.2px;height:1400px"><svg class="abs" style="left:0;top:0" width="160" height="30"><text transform="scale(0.52,1)" x="14.42" y="23.80" font-size="17.8" font-weight="bold" fill="#fafafa" textLength="98.08" lengthAdjust="spacing" >VENDORS</text></svg><ul><li><i></i><a>3Leaf Audio</a></li><li><i></i><a>6 Degrees</a></li><li><i></i><a>A-Designs</a></li><li><i></i><a>ADA</a></li><li><i></i><a>Aguilar</a></li><li><i></i><a>Akai</a></li><li><i></i><a>Alesis</a></li><li><i></i><a>Amptweaker</a></li><li><i></i><a>AMT Electronics</a></li><li><i></i><a>Analog Man</a></li><li><i></i><a>Aphex</a></li><li><i></i><a>Audiotech</a></li><li><i></i><a>Backline Engineering</a></li><li><i></i><a>BeatBuddy</a></li><li><i></i><a>Behringer</a></li><li><i></i><a>Bigfoot Engineering</a></li><li><i></i><a>Black Arts Toneworks</a></li><li><i></i><a>Black Cat</a></li><li><i></i><a>Blackheart Amps</a></li><li><i></i><a>Bogner</a></li><li><i></i><a>Boomerang</a></li><li><i></i><a>Boss</a></li><li><i></i><a>Bruce Bennett</a></li><li><i></i><a>BSM</a></li><li><i></i><a>Buzz Feiten Guitars</a></li><li><i></i><a>Carl Martin</a></li><li><i></i><a>Carrico EZ Pegs</a></li><li><i></i><a>Catalinbread</a></li><li><i></i><a>Cesar Diaz</a></li><li><i></i><a>Chase Bliss</a></li><li><i></i><a>Chicago Iron</a></li><li><i></i><a>Chunk Systems</a></li><li><i></i><a>Crazy Tube Circuits</a></li><li><i></i><a>Custom Audio Electronics</a></li><li><i></i><a>D-Tar</a></li><li><i></i><a>Danelectro</a></li><li><i></i><a>Darkglass Electronics</a></li><li><i></i><a>Dean</a></li><li><i></i><a>Dean Pickups</a></li><li><i></i><a>Death by Audio</a></li><li><i></i><a>Denis Cornell</a></li><li><i></i><a>Digitech</a></li><li><i></i><a>Dimarzio</a></li><li><i></i><a>Dirty Boy</a></li><li><i></i><a>DLS</a></li><li><i></i><a>DNA Analogic</a></li><li><i></i><a>DOD</a></li><li><i></i><a>Dr. J</a></li><li><i></i><a>Dr. No</a></li><li><i></i><a>Dunlop</a></li><li><i></i><a>Durham</a></li><li><i></i><a>DVK Technologies</a></li><li><i></i><a>Dytone</a></li><li><i></i><a>Earthquaker Devices</a></li></ul></div>
</body></html>
